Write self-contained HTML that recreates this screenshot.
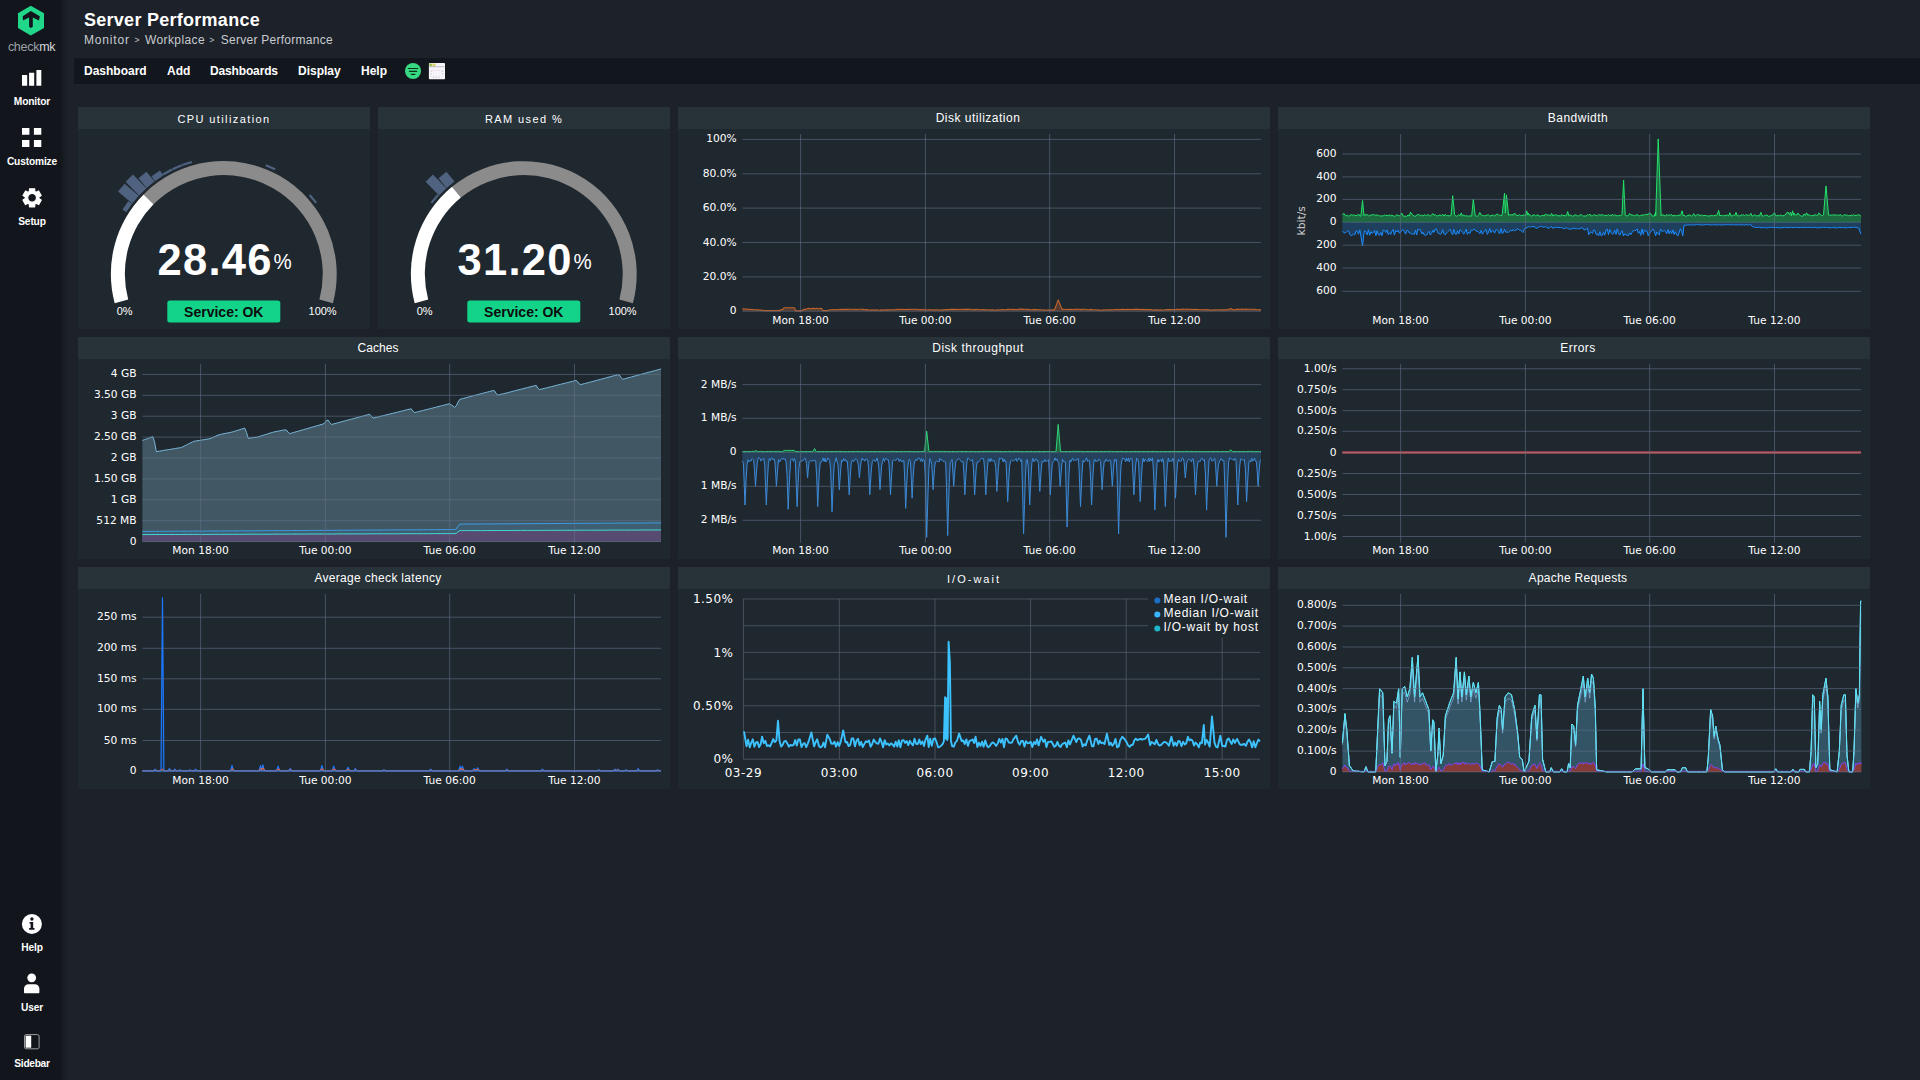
<!DOCTYPE html><html lang="en"><head><meta charset="utf-8"><title>Server Performance</title>
<style>
*{box-sizing:border-box}
html,body{margin:0;padding:0;width:1920px;height:1080px;overflow:hidden;background:#1d2129;font-family:"Liberation Sans", Arial, sans-serif;color:#fff}
#side{position:absolute;left:0;top:0;width:68px;height:1080px;background:linear-gradient(to right,#12161c 0,#12161c 60px,#1d2129 67.5px)}
.nav{position:absolute;left:0;width:64px;text-align:center;font-size:10.2px;font-weight:700;letter-spacing:-.15px;color:#fff}
.nav svg{position:absolute;left:0;top:0}
.nav span{position:absolute;left:0;width:64px;text-align:center}
#title{position:absolute;left:84px;top:9px;font-size:18px;font-weight:700;letter-spacing:.27px;white-space:nowrap;line-height:22px}
#bc{position:absolute;left:84px;top:33px;font-size:12px;color:#c8ccd0;white-space:nowrap;line-height:14px;height:14px;width:400px}
#bc span{position:absolute;top:0}
#bc .gt{font-size:8.5px;top:-.3px}
#menu{position:absolute;left:74px;top:58px;width:1846px;height:26px;background:#12171d}
#menu span{position:absolute;top:0;line-height:26px;font-size:12px;font-weight:700;white-space:nowrap}
.dash{position:absolute;background:#20282f}
.dt{position:absolute;left:0;top:0;width:100%;height:22px;line-height:22px;background:#273239;text-align:center;font-size:12px;color:#fff;letter-spacing:.5px;white-space:nowrap}
.dt.ls{letter-spacing:1.4px;line-height:24px;font-size:11px}
.cv{position:absolute;left:0;top:0}
</style></head><body>
<div id="side">
<svg style="position:absolute;left:0;top:0" width="64" height="60" viewBox="0 0 64 60">
<path d="M30.8 5.7L44 13.2V27.9L30.8 35.4L18 27.9V13.2Z" fill="#20d78a"/>
<path d="M30.8 11L39.8 16.3L39 20.6L32.8 17.4V26.7L30.8 27.9L29.1 26.7V17.4L23 20.6L22.7 16.3Z" fill="#12161c"/>
<text x="7.9" y="50.8" font-family='"Liberation Sans", Arial, sans-serif' font-size="12.5" fill="#9da1a6" letter-spacing="-.27">check<tspan fill="#d4d6d9">mk</tspan></text>
</svg>
<div class="nav" style="top:64px;height:50px"><svg width="64" height="30" viewBox="0 0 64 30"><path d="M22 11h5.2v10.8h-5.2zM29.1 8.8h5.1v13h-5.1zM36.4 6h4.9v15.8h-4.9z" fill="#fff"/></svg><span style="top:32px">Monitor</span></div>
<div class="nav" style="top:124px;height:50px"><svg width="64" height="30" viewBox="0 0 64 30"><path d="M22 4.1h7.4v6.7h-7.4zM33.9 4.1h7.4v6.7h-7.4zM22 16h7.4v7h-7.4zM33.9 16h7.4v7h-7.4z" fill="#fff"/></svg><span style="top:32px">Customize</span></div>
<div class="nav" style="top:184px;height:50px"><svg width="64" height="30" viewBox="0 0 64 30"><path d="M29.4 7.4L29.5 4.8L34.7 4.8L34.8 7.4L36.3 8.3L38.6 7L41.2 11.5L38.9 13L38.9 14.6L41.2 16.1L38.6 20.6L36.3 19.3L34.8 20.2L34.7 22.8L29.5 22.8L29.4 20.2L27.9 19.3L25.6 20.6L23 16.1L25.3 14.6L25.3 13L23 11.5L25.6 7L27.9 8.3ZM27.7 13.8a4.4 4.4 0 1 0 8.8 0a4.4 4.4 0 1 0 -8.8 0Z" fill="#fff" fill-rule="evenodd" stroke="#fff" stroke-width="1.2" stroke-linejoin="round"/></svg><span style="top:32px">Setup</span></div>
<div class="nav" style="top:910px;height:50px"><svg width="64" height="30" viewBox="0 0 64 30"><circle cx="31.9" cy="14" r="10" fill="#fff"/><circle cx="31.9" cy="9" r="1.7" fill="#12161c"/><path d="M29.6 12h3.6v6h1.3v1.8h-5.4v-1.8h1.5v-4.2h-1z" fill="#12161c"/></svg><span style="top:32px">Help</span></div>
<div class="nav" style="top:970px;height:50px"><svg width="64" height="30" viewBox="0 0 64 30"><circle cx="31.7" cy="7.8" r="4.4" fill="#fff"/><path d="M24 22.2v-3.4c0-2.6 2-4.6 4.6-4.6h6.2c2.6 0 4.6 2 4.6 4.6v3.4c0 .6-.5 1-1 1h-13.4c-.6 0-1-.4-1-1z" fill="#fff"/></svg><span style="top:32px">User</span></div>
<div class="nav" style="top:1028px;height:50px"><svg width="64" height="30" viewBox="0 0 64 30"><rect x="24.5" y="6.6" width="14.6" height="14.2" rx="1.6" fill="none" stroke="#9a9da2" stroke-width="1"/><rect x="25.6" y="7.7" width="5.6" height="12" fill="#fff"/></svg><span style="top:29.5px;letter-spacing:-.3px">Sidebar</span></div>
</div>
<div id="title">Server Performance</div>
<div id="bc"><span style="left:0;letter-spacing:.84px">Monitor</span><span class="gt" style="left:50.4px">&gt;</span><span style="left:61px;letter-spacing:.39px">Workplace</span><span class="gt" style="left:125.2px">&gt;</span><span style="left:136.8px;letter-spacing:.26px">Server Performance</span></div>
<div id="menu"><span style="left:10px">Dashboard</span><span style="left:93px">Add</span><span style="left:136px;letter-spacing:-.15px">Dashboards</span><span style="left:224px">Display</span><span style="left:287px">Help</span>
<svg style="position:absolute;left:330px;top:4px" width="44" height="18" viewBox="0 0 44 18"><circle cx="9" cy="9" r="8" fill="#38d982"/><path d="M4.4 6.5h9.4M5.5 9.3h7.2M7.3 12.4h3.6" stroke="#0a3318" stroke-width="1.15" stroke-linecap="round" fill="none"/><rect x="24.9" y="1" width="16.1" height="16.3" rx=".8" fill="#f6f3fb"/><rect x="25.4" y="1.6" width="2.4" height="2.6" fill="#9cba3c"/><rect x="28.4" y="1.6" width="3" height="2.6" fill="#d9d262"/><path d="M25.2 4.7h15.5" stroke="#9aa0a0" stroke-width=".6"/><path d="M27.2 8.6v5.6M38.4 8.6v5.6M29 15.2h8" stroke="#b9b6c6" stroke-width=".9" stroke-dasharray="1.2 1.5" fill="none"/><path d="M28.6 8.6h9" stroke="#e6cfe0" stroke-width=".9" stroke-dasharray="1.4 1.4" fill="none"/></svg></div>
<div class="dash" style="left:78px;top:107px;width:292px;height:222px">
<div class="dt ls">CPU utilization</div>
<svg class="cv" width="292" height="222" viewBox="0 0 292 222">
<rect x="140.7" y="47" width="10.2" height="4.6" fill="#4f6380" transform="rotate(-55.1 145.8 167.0)"/>
<rect x="140.7" y="33" width="10.2" height="18.6" fill="#4f6380" transform="rotate(-49.9 145.8 167.0)"/>
<rect x="140.7" y="32.4" width="10.2" height="19.2" fill="#4f6380" transform="rotate(-44.6 145.8 167.0)"/>
<rect x="140.7" y="38.9" width="10.2" height="12.7" fill="#4f6380" transform="rotate(-39.4 145.8 167.0)"/>
<rect x="140.7" y="45.6" width="10.2" height="6" fill="#4f6380" transform="rotate(-34.1 145.8 167.0)"/>
<rect x="140.7" y="49.4" width="10.2" height="2.2" fill="#4f6380" transform="rotate(-28.9 145.8 167.0)"/>
<rect x="140.7" y="49.4" width="10.2" height="2.2" fill="#4f6380" transform="rotate(-23.6 145.8 167.0)"/>
<rect x="140.7" y="49.5" width="10.2" height="2.1" fill="#4f6380" transform="rotate(-18.4 145.8 167.0)"/>
<rect x="140.7" y="49.4" width="10.2" height="2.2" fill="#4f6380" transform="rotate(23.6 145.8 167.0)"/>
<rect x="140.7" y="49.4" width="10.2" height="2.2" fill="#4f6380" transform="rotate(49.9 145.8 167.0)"/>
<path d="M65.6 87.4A113 113 0 0 1 254.9 196.2L241.4 192.6A99 99 0 0 0 75.5 97.3Z" fill="#8b8b8b"/>
<path d="M36.7 196.2A113 113 0 0 1 65.6 87.4L75.5 97.3A99 99 0 0 0 50.2 192.6Z" fill="#ffffff"/>
<text x="79.4" y="167.7" font-family='"Liberation Sans", Arial, sans-serif' font-weight="700" fill="#fff" font-size="43.5" letter-spacing="1.3">28.46</text>
<text x="195.4" y="161.8" font-family='"Liberation Sans", Arial, sans-serif' fill="#fff" font-size="22" transform="translate(195.4 0) scale(.93 1) translate(-195.4 0)">%</text>
<rect x="89.3" y="193.5" width="113" height="22" rx="2.5" fill="#13d389"/>
<text x="145.8" y="209.5" text-anchor="middle" font-family='"Liberation Sans", Arial, sans-serif' font-weight="700" font-size="14" fill="#0c0c0c">Service: OK</text>
<text x="46.6" y="207.8" text-anchor="middle" font-family='"Liberation Sans", Arial, sans-serif' font-size="11" fill="#fff">0%</text>
<text x="244.6" y="207.8" text-anchor="middle" font-family='"Liberation Sans", Arial, sans-serif' font-size="11" fill="#fff">100%</text>
</svg></div>
<div class="dash" style="left:378px;top:107px;width:292px;height:222px">
<div class="dt ls">RAM used %</div>
<svg class="cv" width="292" height="222" viewBox="0 0 292 222">
<rect x="140.7" y="49.4" width="10.2" height="2.2" fill="#4f6380" transform="rotate(-49.9 145.8 167.0)"/>
<rect x="140.7" y="32.4" width="10.2" height="19.2" fill="#4f6380" transform="rotate(-44.6 145.8 167.0)"/>
<rect x="140.7" y="38.9" width="10.2" height="12.7" fill="#4f6380" transform="rotate(-39.4 145.8 167.0)"/>
<path d="M74 79.8A113 113 0 0 1 254.9 196.2L241.4 192.6A99 99 0 0 0 82.9 90.6Z" fill="#8b8b8b"/>
<path d="M36.7 196.2A113 113 0 0 1 74 79.8L82.9 90.6A99 99 0 0 0 50.2 192.6Z" fill="#ffffff"/>
<text x="79.4" y="167.7" font-family='"Liberation Sans", Arial, sans-serif' font-weight="700" fill="#fff" font-size="43.5" letter-spacing="1.3">31.20</text>
<text x="195.4" y="161.8" font-family='"Liberation Sans", Arial, sans-serif' fill="#fff" font-size="22" transform="translate(195.4 0) scale(.93 1) translate(-195.4 0)">%</text>
<rect x="89.3" y="193.5" width="113" height="22" rx="2.5" fill="#13d389"/>
<text x="145.8" y="209.5" text-anchor="middle" font-family='"Liberation Sans", Arial, sans-serif' font-weight="700" font-size="14" fill="#0c0c0c">Service: OK</text>
<text x="46.6" y="207.8" text-anchor="middle" font-family='"Liberation Sans", Arial, sans-serif' font-size="11" fill="#fff">0%</text>
<text x="244.6" y="207.8" text-anchor="middle" font-family='"Liberation Sans", Arial, sans-serif' font-size="11" fill="#fff">100%</text>
</svg></div>
<div class="dash" style="left:678px;top:107px;width:592px;height:222px">
<div class="dt" style="padding-left:8px;letter-spacing:0.5px">Disk utilization</div>
<svg class="cv" width="592" height="222" viewBox="0 0 592 222">
<g transform="translate(0 0)">
<polygon points="64.4,204.2 64.4,201.8 65.7,201.9 67,202 68.3,202.1 69.6,202.2 70.9,202.3 72.2,202.4 73.5,202.5 74.8,202.6 76.1,202.7 77.4,202.8 78.7,202.8 80,202.9 81.3,203 82.6,203.1 83.9,203.2 85.2,203.4 86.5,203.7 87.8,203.5 89.1,203.6 90.4,203.6 91.7,203.7 93,203.6 94.3,203.7 95.6,203.6 96.9,203.7 98.2,203.5 99.5,203.7 100.8,203.4 102.1,203.6 103.4,202.5 104.7,202.5 106,200.8 107.3,200.8 108.6,200.8 109.9,200.8 111.2,200.8 112.5,200.8 113.8,200.8 115.1,200.8 116.4,200.8 117.7,203.9 119,203.9 120.3,203.9 121.6,203.9 122.9,203.9 124.2,203.9 125.5,202.4 126.8,202.3 128.1,202.4 129.4,201.5 130.7,201.3 132,201.6 133.3,201.8 134.6,201.4 135.9,201.4 137.2,201.7 138.5,201.2 139.8,201.5 141.1,201.7 142.4,201.2 143.7,201.5 145,203.6 146.3,203.6 147.6,203.6 148.9,203.6 150.2,203.6 151.5,202.7 152.8,202.7 154.1,202.7 155.4,202.6 156.7,202.7 158,202.6 159.3,202.7 160.6,202.8 161.9,202.3 163.2,202.4 164.5,202.6 165.8,202.4 167.1,202.4 168.4,202.4 169.7,202.4 171,202.3 172.3,202.2 173.6,202.2 174.9,202.3 176.2,202.5 177.5,202.4 178.8,202.5 180.1,202.3 181.4,202.2 182.7,202.3 184,202.3 185.3,202.4 186.6,202.7 187.9,202.5 189.2,202.6 190.5,202.9 191.8,203 193.1,203.1 194.4,202.7 195.7,203 197,203.1 198.3,202.9 199.6,203 200.9,203.2 202.2,203.1 203.5,202.9 204.8,203.1 206.1,203 207.4,202.8 208.7,202.9 210,202.9 211.3,202.8 212.6,203 213.9,202.7 215.2,202.7 216.5,202.7 217.8,202.7 219.1,202.3 220.4,202.4 221.7,202.5 223,202.3 224.3,202.2 225.6,202.6 226.9,202.5 228.2,202.5 229.5,202.2 230.8,202.5 232.1,202.2 233.4,202.2 234.7,202.3 236,202.5 237.3,202.2 238.6,202.3 239.9,202.5 241.2,202.7 242.5,202.5 243.8,202.7 245.1,202.6 246.4,202.8 247.7,202.7 249,203 250.3,203 251.6,202.6 252.9,202.7 254.2,203 255.5,202.8 256.8,203.1 258.1,202.7 259.4,202.8 260.7,203 262,203 263.3,203.1 264.6,202.7 265.9,203.1 267.2,202.6 268.5,202.5 269.8,202.6 271.1,202.8 272.4,202.4 273.7,202.3 275,202.4 276.3,202.4 277.6,202.5 278.9,202.4 280.2,202.5 281.5,202.2 282.8,202.3 284.1,202.4 285.4,202.5 286.7,202.2 288,202.4 289.3,202.3 290.6,202.4 291.9,202.2 293.2,202.2 294.5,202.7 295.8,202.6 297.1,202.6 298.4,202.3 299.7,202.5 301,202.8 302.3,202.9 303.6,202.7 304.9,202.6 306.2,202.6 307.5,203 308.8,202.7 310.1,202.8 311.4,203 312.7,202.7 314,203.1 315.3,202.8 316.6,203.2 317.9,203.1 319.2,202.7 320.5,203 321.8,202.7 323.1,202.7 324.4,202.6 325.7,202.7 327,202.7 328.3,202.7 329.6,202.3 330.9,202.4 332.2,202.2 333.5,202.2 334.8,202.6 336.1,202.3 337.4,202.5 338.7,202.5 340,202.5 341.3,202.1 342.6,202.1 343.9,202.1 345.2,202.4 346.5,202.3 347.8,202.2 349.1,202.5 350.4,202.4 351.7,202.6 353,202.7 354.3,202.7 355.6,202.4 356.9,202.6 358.2,202.5 359.5,202.8 360.8,202.9 362.1,202.7 363.4,202.7 364.7,203.2 366,202.8 367.3,203.2 368.6,203.2 369.9,202.8 371.2,203.2 372.5,203.1 373.8,202.7 375.1,202.9 376.4,203.1 380.2,192.9 384.2,202.6 385.5,202.3 386.8,202.3 388.1,202.5 389.4,202.5 390.7,202.4 392,202.5 393.3,202.2 394.6,202.5 395.9,202.5 397.2,202 398.5,202.4 399.8,202.2 401.1,202.3 402.4,202.4 403.7,202.6 405,202.2 406.3,202.2 407.6,202.2 408.9,202.7 410.2,202.7 411.5,202.6 412.8,202.4 414.1,202.7 415.4,202.7 416.7,202.7 418,203 419.3,202.9 420.6,203 421.9,203.1 423.2,203.2 424.5,203.1 425.8,202.7 427.1,203 428.4,202.9 429.7,202.8 431,202.7 432.3,202.9 433.6,202.9 434.9,202.9 436.2,202.8 437.5,202.5 438.8,202.4 440.1,202.7 441.4,202.6 442.7,202.5 444,202.4 445.3,202.4 446.6,202.5 447.9,202.6 449.2,202.4 450.5,202.5 451.8,202.3 453.1,202.5 454.4,202.5 455.7,202.2 457,202.4 458.3,202.2 459.6,202.4 460.9,202.2 462.2,202.6 463.5,202.5 464.8,202.4 466.1,202.8 467.4,202.4 468.7,202.8 470,202.6 471.3,202.5 472.6,202.6 473.9,202.9 475.2,203.1 476.5,202.9 477.8,202.7 479.1,203.1 480.4,202.8 481.7,203.1 483,202.7 484.3,203.2 485.6,203 486.9,202.7 488.2,202.7 489.5,202.6 490.8,202.6 492.1,202.6 493.4,202.6 494.7,202.8 496,202.6 497.3,202.7 498.6,202.4 499.9,202.4 501.2,202.5 502.5,202.6 503.8,202.1 505.1,202.1 506.4,202.3 507.7,202.3 509,202.1 510.3,202.3 511.6,202.3 512.9,202.4 514.2,202.5 515.5,202.6 516.8,202.3 518.1,202.5 519.4,202.4 520.7,202.8 522,202.7 523.3,202.8 524.6,202.9 525.9,202.8 527.2,202.6 528.5,202.9 529.8,202.9 531.1,202.8 532.4,203.1 533.6,203.2 534.9,202.9 536.2,203 537.5,202.9 538.8,203 540.1,202.8 541.4,202.8 542.7,203 544,202.9 545.3,202.8 546.6,202.9 547.9,202.8 549.2,202.7 550.5,202.4 552.8,201.5 554.4,202.4 555.7,202.7 557,202.6 558.3,202.4 559.6,202.1 560.9,202.5 562.2,202.2 563.5,202.1 564.8,202.4 566.1,202.2 567.4,202.1 568.7,202.4 570,202.2 571.3,202.2 572.6,202.3 573.9,202.3 575.2,202.3 576.5,202.3 577.8,202.5 579.1,202.8 580.4,202.8 581.7,202.9 583,202.7 583,204.2" fill="#7a4a32" fill-opacity="0.6"/><polyline points="64.4,201.8 65.7,201.9 67,202 68.3,202.1 69.6,202.2 70.9,202.3 72.2,202.4 73.5,202.5 74.8,202.6 76.1,202.7 77.4,202.8 78.7,202.8 80,202.9 81.3,203 82.6,203.1 83.9,203.2 85.2,203.4 86.5,203.7 87.8,203.5 89.1,203.6 90.4,203.6 91.7,203.7 93,203.6 94.3,203.7 95.6,203.6 96.9,203.7 98.2,203.5 99.5,203.7 100.8,203.4 102.1,203.6 103.4,202.5 104.7,202.5 106,200.8 107.3,200.8 108.6,200.8 109.9,200.8 111.2,200.8 112.5,200.8 113.8,200.8 115.1,200.8 116.4,200.8 117.7,203.9 119,203.9 120.3,203.9 121.6,203.9 122.9,203.9 124.2,203.9 125.5,202.4 126.8,202.3 128.1,202.4 129.4,201.5 130.7,201.3 132,201.6 133.3,201.8 134.6,201.4 135.9,201.4 137.2,201.7 138.5,201.2 139.8,201.5 141.1,201.7 142.4,201.2 143.7,201.5 145,203.6 146.3,203.6 147.6,203.6 148.9,203.6 150.2,203.6 151.5,202.7 152.8,202.7 154.1,202.7 155.4,202.6 156.7,202.7 158,202.6 159.3,202.7 160.6,202.8 161.9,202.3 163.2,202.4 164.5,202.6 165.8,202.4 167.1,202.4 168.4,202.4 169.7,202.4 171,202.3 172.3,202.2 173.6,202.2 174.9,202.3 176.2,202.5 177.5,202.4 178.8,202.5 180.1,202.3 181.4,202.2 182.7,202.3 184,202.3 185.3,202.4 186.6,202.7 187.9,202.5 189.2,202.6 190.5,202.9 191.8,203 193.1,203.1 194.4,202.7 195.7,203 197,203.1 198.3,202.9 199.6,203 200.9,203.2 202.2,203.1 203.5,202.9 204.8,203.1 206.1,203 207.4,202.8 208.7,202.9 210,202.9 211.3,202.8 212.6,203 213.9,202.7 215.2,202.7 216.5,202.7 217.8,202.7 219.1,202.3 220.4,202.4 221.7,202.5 223,202.3 224.3,202.2 225.6,202.6 226.9,202.5 228.2,202.5 229.5,202.2 230.8,202.5 232.1,202.2 233.4,202.2 234.7,202.3 236,202.5 237.3,202.2 238.6,202.3 239.9,202.5 241.2,202.7 242.5,202.5 243.8,202.7 245.1,202.6 246.4,202.8 247.7,202.7 249,203 250.3,203 251.6,202.6 252.9,202.7 254.2,203 255.5,202.8 256.8,203.1 258.1,202.7 259.4,202.8 260.7,203 262,203 263.3,203.1 264.6,202.7 265.9,203.1 267.2,202.6 268.5,202.5 269.8,202.6 271.1,202.8 272.4,202.4 273.7,202.3 275,202.4 276.3,202.4 277.6,202.5 278.9,202.4 280.2,202.5 281.5,202.2 282.8,202.3 284.1,202.4 285.4,202.5 286.7,202.2 288,202.4 289.3,202.3 290.6,202.4 291.9,202.2 293.2,202.2 294.5,202.7 295.8,202.6 297.1,202.6 298.4,202.3 299.7,202.5 301,202.8 302.3,202.9 303.6,202.7 304.9,202.6 306.2,202.6 307.5,203 308.8,202.7 310.1,202.8 311.4,203 312.7,202.7 314,203.1 315.3,202.8 316.6,203.2 317.9,203.1 319.2,202.7 320.5,203 321.8,202.7 323.1,202.7 324.4,202.6 325.7,202.7 327,202.7 328.3,202.7 329.6,202.3 330.9,202.4 332.2,202.2 333.5,202.2 334.8,202.6 336.1,202.3 337.4,202.5 338.7,202.5 340,202.5 341.3,202.1 342.6,202.1 343.9,202.1 345.2,202.4 346.5,202.3 347.8,202.2 349.1,202.5 350.4,202.4 351.7,202.6 353,202.7 354.3,202.7 355.6,202.4 356.9,202.6 358.2,202.5 359.5,202.8 360.8,202.9 362.1,202.7 363.4,202.7 364.7,203.2 366,202.8 367.3,203.2 368.6,203.2 369.9,202.8 371.2,203.2 372.5,203.1 373.8,202.7 375.1,202.9 376.4,203.1 380.2,192.9 384.2,202.6 385.5,202.3 386.8,202.3 388.1,202.5 389.4,202.5 390.7,202.4 392,202.5 393.3,202.2 394.6,202.5 395.9,202.5 397.2,202 398.5,202.4 399.8,202.2 401.1,202.3 402.4,202.4 403.7,202.6 405,202.2 406.3,202.2 407.6,202.2 408.9,202.7 410.2,202.7 411.5,202.6 412.8,202.4 414.1,202.7 415.4,202.7 416.7,202.7 418,203 419.3,202.9 420.6,203 421.9,203.1 423.2,203.2 424.5,203.1 425.8,202.7 427.1,203 428.4,202.9 429.7,202.8 431,202.7 432.3,202.9 433.6,202.9 434.9,202.9 436.2,202.8 437.5,202.5 438.8,202.4 440.1,202.7 441.4,202.6 442.7,202.5 444,202.4 445.3,202.4 446.6,202.5 447.9,202.6 449.2,202.4 450.5,202.5 451.8,202.3 453.1,202.5 454.4,202.5 455.7,202.2 457,202.4 458.3,202.2 459.6,202.4 460.9,202.2 462.2,202.6 463.5,202.5 464.8,202.4 466.1,202.8 467.4,202.4 468.7,202.8 470,202.6 471.3,202.5 472.6,202.6 473.9,202.9 475.2,203.1 476.5,202.9 477.8,202.7 479.1,203.1 480.4,202.8 481.7,203.1 483,202.7 484.3,203.2 485.6,203 486.9,202.7 488.2,202.7 489.5,202.6 490.8,202.6 492.1,202.6 493.4,202.6 494.7,202.8 496,202.6 497.3,202.7 498.6,202.4 499.9,202.4 501.2,202.5 502.5,202.6 503.8,202.1 505.1,202.1 506.4,202.3 507.7,202.3 509,202.1 510.3,202.3 511.6,202.3 512.9,202.4 514.2,202.5 515.5,202.6 516.8,202.3 518.1,202.5 519.4,202.4 520.7,202.8 522,202.7 523.3,202.8 524.6,202.9 525.9,202.8 527.2,202.6 528.5,202.9 529.8,202.9 531.1,202.8 532.4,203.1 533.6,203.2 534.9,202.9 536.2,203 537.5,202.9 538.8,203 540.1,202.8 541.4,202.8 542.7,203 544,202.9 545.3,202.8 546.6,202.9 547.9,202.8 549.2,202.7 550.5,202.4 552.8,201.5 554.4,202.4 555.7,202.7 557,202.6 558.3,202.4 559.6,202.1 560.9,202.5 562.2,202.2 563.5,202.1 564.8,202.4 566.1,202.2 567.4,202.1 568.7,202.4 570,202.2 571.3,202.2 572.6,202.3 573.9,202.3 575.2,202.3 576.5,202.3 577.8,202.5 579.1,202.8 580.4,202.8 581.7,202.9 583,202.7" fill="none" stroke="#c2632a" stroke-width="1.1" stroke-linejoin="round"/>
<path d="M122.6 27V205.8M247.4 27V205.8M371.7 27V205.8M496.5 27V205.8M64.4 32.4H583M64.4 66.8H583M64.4 101.1H583M64.4 135.5H583M64.4 169.9H583M64.4 204.2H583" stroke="#62728a" stroke-opacity=".58" stroke-width="1" fill="none"/></g>
<g font-family='"DejaVu Sans", "Liberation Sans", sans-serif' font-size="10.67" fill="#ffffff">
<text x="58.6" y="35.4" text-anchor="end">100%</text>
<text x="58.6" y="69.8" text-anchor="end">80.0%</text>
<text x="58.6" y="104.1" text-anchor="end">60.0%</text>
<text x="58.6" y="138.5" text-anchor="end">40.0%</text>
<text x="58.6" y="172.9" text-anchor="end">20.0%</text>
<text x="58.6" y="207.2" text-anchor="end">0</text>
<text x="122.6" y="217.1" text-anchor="middle">Mon 18:00</text>
<text x="247.4" y="217.1" text-anchor="middle">Tue 00:00</text>
<text x="371.7" y="217.1" text-anchor="middle">Tue 06:00</text>
<text x="496.5" y="217.1" text-anchor="middle">Tue 12:00</text>
</g></svg></div>
<div class="dash" style="left:1278px;top:107px;width:592px;height:222px">
<div class="dt" style="padding-left:8px;letter-spacing:0.5px">Bandwidth</div>
<svg class="cv" width="592" height="222" viewBox="0 0 592 222">
<g transform="translate(0 0)">
<polygon points="64.4,115.3 64.4,124 65.7,125.6 66.9,126 68.2,125.2 69.4,124.1 70.6,124.2 71.9,127.4 73.1,128.8 74.3,128.3 75.6,126.8 76.8,127.9 78.1,123.7 79.3,124.1 80.5,127.3 81.8,122.8 82.9,129.1 84.5,138.8 86,125.7 86.7,123.9 88,125.2 89.2,128 90.4,122.7 91.7,128.3 92.9,124.6 94.1,126.3 95.4,125.6 96.6,123.4 97.9,128.7 99.1,123.7 100.3,127.7 101.6,128.2 102.8,125.4 104,128.7 105.3,122.9 106.5,123.4 107.8,125.6 109,122.9 110.2,127.6 111.5,125.8 112.7,127.5 113.9,124.2 115.2,122.5 116.4,128.1 117.7,123.7 118.9,125 120.1,123.1 121.4,126.1 122.6,125.2 123.8,123.5 125.1,122.5 126.3,124.4 127.6,127.2 128.8,123.2 130,123.6 131.3,126.1 132.5,126.2 133.8,127.3 135,126.3 136.2,127.6 137.5,123.1 138.7,128 139.9,122.2 141.2,122.8 142.4,122.7 143.7,127 144.9,125.2 146.1,127.9 147.4,128.2 148.6,128.1 149.8,125.9 151.1,124.2 152.3,128.1 153.6,126.6 154.8,123.1 156,125.4 157.3,122 158.5,122 159.7,125.9 161,126.4 162.2,127.3 163.5,126.6 164.7,122.6 165.9,126.5 167.2,128 168.4,126.1 169.6,124.8 170.9,123.6 172.1,122.1 173.4,125.7 174.6,127.8 175.8,122.4 177.1,126.9 178.3,127.4 179.5,123.8 180.8,127 182,122.6 183.3,123.5 184.5,125.2 185.7,127.2 187,124.9 188.2,122.1 189.4,127.4 190.7,125.1 191.9,126.4 193.2,122.9 194.4,123.6 195.6,122 196.9,122.6 198.1,124.2 199.3,124 200.6,125.5 201.8,126.7 203.1,123.4 204.3,127.2 205.5,125.5 206.8,123.5 208,122.4 209.3,127.4 210.5,125.4 211.7,121.5 213,125.6 214.2,123.6 215.4,123.9 216.7,126.1 217.9,122.6 219.2,122.8 220.4,124.6 221.6,126.9 222.9,121.6 224.1,126.4 225.3,125.7 226.6,122.2 227.8,125.3 229.1,125 230.3,125.5 231.5,124.4 232.8,123 234,124.2 235.2,122.4 236.5,123.8 237.7,123.5 239,121.6 240.2,122.3 241.4,123.1 242.7,123.4 243.9,124.4 245.1,125.6 246.4,121.5 247.6,121.1 248.9,120.6 250.1,120.2 251.3,119.5 252.6,120.1 253.8,119.7 255,119.5 256.3,119.4 257.5,121.1 258.8,121.1 260,120.9 261.2,119.6 262.5,119.6 263.7,119.6 264.9,120 266.2,120.3 267.4,119.5 268.7,120.4 269.9,121 271.1,121.4 272.4,120.1 273.6,119.7 274.8,121.4 276.1,120.6 277.3,120.5 278.6,120.2 279.8,120.5 281,120.5 282.3,120.6 283.5,120.6 284.8,121.2 286,121.8 287.2,120.9 288.5,121.1 289.7,121.3 290.9,122.1 292.2,122 293.4,122.5 294.7,120.8 295.9,122.2 297.1,121.2 298.4,121.8 299.6,121.7 300.8,121.9 302.1,121.4 303.3,120.9 304.6,120.9 305.8,122.8 307,122.8 308.3,121.9 309.5,121.2 310.7,127.8 312,125.3 313.2,125.1 314.5,126.4 315.7,122.8 316.9,123.2 318.2,127.7 319.4,127.1 320.6,128.9 321.9,124.8 323.1,128.8 324.4,128.2 325.6,125.4 326.8,128.2 328.1,122.8 329.3,122.1 330.5,127.7 331.8,122.6 333,125.4 334.3,127.1 335.5,126.7 336.7,123.2 338,127.5 339.2,121.9 340.4,125.8 341.7,128.3 342.9,125.7 344.2,123.8 345.4,129 346.6,127 347.9,127.5 349.1,128.3 350.4,128.6 351.6,125.9 352.8,127.7 354.1,125.3 355.3,123.5 356.5,123.7 357.8,123.5 359,121.8 360.3,126.2 361.5,124.6 362.7,128.4 364,122 365.2,127.4 366.4,123 367.7,124 368.9,123.8 370.2,128.7 371.4,126.4 372.6,125.1 373.9,123 375.1,122 376.3,124.3 377.6,128.8 378.8,124.9 380.1,126.6 381.3,128.1 382.5,122 383.8,124 385,124.7 386.2,123.3 387.5,124.4 388.7,126.7 390,122.6 391.2,126.8 392.4,123.8 393.7,126.5 394.9,122.9 396.1,127.5 397.4,124.7 398.6,127.8 399.9,128.8 401.1,125.9 402.3,121.8 403.6,124.3 404.8,128.9 406,118.2 407.3,118.2 408.5,118.2 409.8,117.9 411,117.9 412.2,117.8 413.5,118 414.7,118 415.9,117.9 417.2,117.9 418.4,117.6 419.7,117.6 420.9,117.7 422.1,117.9 423.4,118 424.6,117.9 425.9,118 427.1,117.6 428.3,117.6 429.6,117.7 430.8,117.6 432,117.9 433.3,118 434.5,118 435.8,117.6 437,117.9 438.2,117.9 439.5,117.9 440.7,117.8 441.9,117.7 443.2,118 444.4,118 445.7,117.9 446.9,117.8 448.1,117.6 449.4,117.7 450.6,117.7 451.8,117.7 453.1,117.7 454.3,117.9 455.6,117.9 456.8,117.7 458,118 459.3,117.6 460.5,118 461.7,117.9 463,117.9 464.2,117.7 465.5,117.9 466.7,118 467.9,117.7 469.2,117.7 470.4,118 471.6,117.7 472.9,117.6 474.1,119.7 475.4,119.7 476.6,120.6 477.8,120.4 479.1,120.4 480.3,120.4 481.5,120.3 482.8,120.8 484,120.6 485.3,120.7 486.5,120.4 487.7,120.8 489,120.9 490.2,120.9 491.4,120.3 492.7,120.4 493.9,120.3 495.2,120.5 496.4,120.7 497.6,120.6 498.9,120.5 500.1,120.9 501.4,120.7 502.6,120.9 503.8,120.5 505.1,120.7 506.3,120.3 507.5,120.6 508.8,120.7 510,120.4 511.3,120.7 512.5,120.3 513.7,120.5 515,120.6 516.2,120.6 517.4,120.3 518.7,120.4 519.9,120.5 521.2,120.7 522.4,120.5 523.6,120.4 524.9,120.5 526.1,120.4 527.3,120.3 528.6,120.6 529.8,120.5 531.1,120.4 532.3,120.2 533.5,120.9 534.8,120.3 536,120.3 537.2,120.4 538.5,120.8 539.7,120.9 541,120.7 542.2,120.4 543.4,120.8 544.7,120.2 545.9,120.3 547.1,120.3 548.4,120.6 549.6,120.6 550.9,120.7 552.1,120.9 553.3,120.7 554.6,120.7 555.8,120.3 557,120.8 558.3,120.9 559.5,120.8 560.8,120.3 562,120.7 563.2,120.6 564.5,120.6 565.7,120.4 567,120.8 568.2,120.8 569.4,120.8 570.7,120.4 571.9,120.7 573.1,120.3 574.4,120.7 575.6,120.2 576.9,120.2 578.1,120.3 579.3,120.7 580.6,121 581.8,124 583,127.1 583,115.3" fill="#1d5690" fill-opacity="0.5"/><polyline points="64.4,124 65.7,125.6 66.9,126 68.2,125.2 69.4,124.1 70.6,124.2 71.9,127.4 73.1,128.8 74.3,128.3 75.6,126.8 76.8,127.9 78.1,123.7 79.3,124.1 80.5,127.3 81.8,122.8 82.9,129.1 84.5,138.8 86,125.7 86.7,123.9 88,125.2 89.2,128 90.4,122.7 91.7,128.3 92.9,124.6 94.1,126.3 95.4,125.6 96.6,123.4 97.9,128.7 99.1,123.7 100.3,127.7 101.6,128.2 102.8,125.4 104,128.7 105.3,122.9 106.5,123.4 107.8,125.6 109,122.9 110.2,127.6 111.5,125.8 112.7,127.5 113.9,124.2 115.2,122.5 116.4,128.1 117.7,123.7 118.9,125 120.1,123.1 121.4,126.1 122.6,125.2 123.8,123.5 125.1,122.5 126.3,124.4 127.6,127.2 128.8,123.2 130,123.6 131.3,126.1 132.5,126.2 133.8,127.3 135,126.3 136.2,127.6 137.5,123.1 138.7,128 139.9,122.2 141.2,122.8 142.4,122.7 143.7,127 144.9,125.2 146.1,127.9 147.4,128.2 148.6,128.1 149.8,125.9 151.1,124.2 152.3,128.1 153.6,126.6 154.8,123.1 156,125.4 157.3,122 158.5,122 159.7,125.9 161,126.4 162.2,127.3 163.5,126.6 164.7,122.6 165.9,126.5 167.2,128 168.4,126.1 169.6,124.8 170.9,123.6 172.1,122.1 173.4,125.7 174.6,127.8 175.8,122.4 177.1,126.9 178.3,127.4 179.5,123.8 180.8,127 182,122.6 183.3,123.5 184.5,125.2 185.7,127.2 187,124.9 188.2,122.1 189.4,127.4 190.7,125.1 191.9,126.4 193.2,122.9 194.4,123.6 195.6,122 196.9,122.6 198.1,124.2 199.3,124 200.6,125.5 201.8,126.7 203.1,123.4 204.3,127.2 205.5,125.5 206.8,123.5 208,122.4 209.3,127.4 210.5,125.4 211.7,121.5 213,125.6 214.2,123.6 215.4,123.9 216.7,126.1 217.9,122.6 219.2,122.8 220.4,124.6 221.6,126.9 222.9,121.6 224.1,126.4 225.3,125.7 226.6,122.2 227.8,125.3 229.1,125 230.3,125.5 231.5,124.4 232.8,123 234,124.2 235.2,122.4 236.5,123.8 237.7,123.5 239,121.6 240.2,122.3 241.4,123.1 242.7,123.4 243.9,124.4 245.1,125.6 246.4,121.5 247.6,121.1 248.9,120.6 250.1,120.2 251.3,119.5 252.6,120.1 253.8,119.7 255,119.5 256.3,119.4 257.5,121.1 258.8,121.1 260,120.9 261.2,119.6 262.5,119.6 263.7,119.6 264.9,120 266.2,120.3 267.4,119.5 268.7,120.4 269.9,121 271.1,121.4 272.4,120.1 273.6,119.7 274.8,121.4 276.1,120.6 277.3,120.5 278.6,120.2 279.8,120.5 281,120.5 282.3,120.6 283.5,120.6 284.8,121.2 286,121.8 287.2,120.9 288.5,121.1 289.7,121.3 290.9,122.1 292.2,122 293.4,122.5 294.7,120.8 295.9,122.2 297.1,121.2 298.4,121.8 299.6,121.7 300.8,121.9 302.1,121.4 303.3,120.9 304.6,120.9 305.8,122.8 307,122.8 308.3,121.9 309.5,121.2 310.7,127.8 312,125.3 313.2,125.1 314.5,126.4 315.7,122.8 316.9,123.2 318.2,127.7 319.4,127.1 320.6,128.9 321.9,124.8 323.1,128.8 324.4,128.2 325.6,125.4 326.8,128.2 328.1,122.8 329.3,122.1 330.5,127.7 331.8,122.6 333,125.4 334.3,127.1 335.5,126.7 336.7,123.2 338,127.5 339.2,121.9 340.4,125.8 341.7,128.3 342.9,125.7 344.2,123.8 345.4,129 346.6,127 347.9,127.5 349.1,128.3 350.4,128.6 351.6,125.9 352.8,127.7 354.1,125.3 355.3,123.5 356.5,123.7 357.8,123.5 359,121.8 360.3,126.2 361.5,124.6 362.7,128.4 364,122 365.2,127.4 366.4,123 367.7,124 368.9,123.8 370.2,128.7 371.4,126.4 372.6,125.1 373.9,123 375.1,122 376.3,124.3 377.6,128.8 378.8,124.9 380.1,126.6 381.3,128.1 382.5,122 383.8,124 385,124.7 386.2,123.3 387.5,124.4 388.7,126.7 390,122.6 391.2,126.8 392.4,123.8 393.7,126.5 394.9,122.9 396.1,127.5 397.4,124.7 398.6,127.8 399.9,128.8 401.1,125.9 402.3,121.8 403.6,124.3 404.8,128.9 406,118.2 407.3,118.2 408.5,118.2 409.8,117.9 411,117.9 412.2,117.8 413.5,118 414.7,118 415.9,117.9 417.2,117.9 418.4,117.6 419.7,117.6 420.9,117.7 422.1,117.9 423.4,118 424.6,117.9 425.9,118 427.1,117.6 428.3,117.6 429.6,117.7 430.8,117.6 432,117.9 433.3,118 434.5,118 435.8,117.6 437,117.9 438.2,117.9 439.5,117.9 440.7,117.8 441.9,117.7 443.2,118 444.4,118 445.7,117.9 446.9,117.8 448.1,117.6 449.4,117.7 450.6,117.7 451.8,117.7 453.1,117.7 454.3,117.9 455.6,117.9 456.8,117.7 458,118 459.3,117.6 460.5,118 461.7,117.9 463,117.9 464.2,117.7 465.5,117.9 466.7,118 467.9,117.7 469.2,117.7 470.4,118 471.6,117.7 472.9,117.6 474.1,119.7 475.4,119.7 476.6,120.6 477.8,120.4 479.1,120.4 480.3,120.4 481.5,120.3 482.8,120.8 484,120.6 485.3,120.7 486.5,120.4 487.7,120.8 489,120.9 490.2,120.9 491.4,120.3 492.7,120.4 493.9,120.3 495.2,120.5 496.4,120.7 497.6,120.6 498.9,120.5 500.1,120.9 501.4,120.7 502.6,120.9 503.8,120.5 505.1,120.7 506.3,120.3 507.5,120.6 508.8,120.7 510,120.4 511.3,120.7 512.5,120.3 513.7,120.5 515,120.6 516.2,120.6 517.4,120.3 518.7,120.4 519.9,120.5 521.2,120.7 522.4,120.5 523.6,120.4 524.9,120.5 526.1,120.4 527.3,120.3 528.6,120.6 529.8,120.5 531.1,120.4 532.3,120.2 533.5,120.9 534.8,120.3 536,120.3 537.2,120.4 538.5,120.8 539.7,120.9 541,120.7 542.2,120.4 543.4,120.8 544.7,120.2 545.9,120.3 547.1,120.3 548.4,120.6 549.6,120.6 550.9,120.7 552.1,120.9 553.3,120.7 554.6,120.7 555.8,120.3 557,120.8 558.3,120.9 559.5,120.8 560.8,120.3 562,120.7 563.2,120.6 564.5,120.6 565.7,120.4 567,120.8 568.2,120.8 569.4,120.8 570.7,120.4 571.9,120.7 573.1,120.3 574.4,120.7 575.6,120.2 576.9,120.2 578.1,120.3 579.3,120.7 580.6,121 581.8,124 583,127.1" fill="none" stroke="#1a8cff" stroke-width="1" stroke-linejoin="round"/><polygon points="64.4,115.3 64.4,107.6 65.7,106.2 66.9,108 68.2,108.8 69.4,108.2 70.6,109.1 71.9,108.6 73.1,107.5 74.3,108.3 75.6,107.6 76.8,108.5 78.1,108.6 79.3,108.4 80.5,107 81.8,109.1 82.9,109.1 84.5,93.5 86,108.7 86.7,107.7 88,107.9 89.2,107.5 90.4,109.1 91.7,108 92.9,108.4 94.1,107.7 95.4,107.8 96.6,107.7 97.9,108.5 99.1,107.7 100.3,108.5 101.6,108.8 102.8,109 104,108.9 105.3,108.8 106.5,108.1 107.8,108.4 109,108.3 110.2,109 111.5,107.6 112.7,109.2 113.9,108 115.2,109 116.4,109.2 117.7,108.8 118.9,107.7 120.1,108.4 121.4,108.9 122.6,107.7 123.8,106.1 125.1,109 126.3,109.2 127.6,109.3 128.8,109.3 130,107.9 131.3,109 132.5,105.2 133.8,107.1 135,108.2 136.2,109.1 137.5,109.3 138.7,107.9 139.9,107.7 141.2,107.8 142.4,108.5 143.7,108.1 144.9,109.2 146.1,107.7 147.4,108.3 148.6,108.4 149.8,107.6 151.1,108.2 152.3,109.3 153.6,107.9 154.8,106.5 156,108.4 157.3,107.6 158.5,108.9 159.7,108.9 161,108.2 162.2,108 163.5,108.6 164.7,107.3 165.9,109.1 167.2,107.3 168.4,108.9 169.6,108.4 170.9,108.8 172.1,109 173.1,108 174.7,88.7 176.6,107.8 177.1,108.4 178.3,109.2 179.5,108.7 180.8,107.7 182,108.8 183.3,105.9 184.5,109.2 185.7,107.8 187,109.3 188.2,108.6 189.4,109 190.7,109.2 191.9,108.7 193.2,109.2 193.7,109.2 195.3,92.4 197.2,108.6 198.1,109.1 199.3,109.2 200.6,108.2 201.8,105.4 203.1,107.9 204.3,108.4 205.5,108.5 206.8,108.9 208,108.5 209.3,107.9 210.5,107.8 211.7,108.9 213,108.9 214.2,108.1 215.4,108.3 216.7,109.2 217.9,107.5 219.2,107.2 220.4,107.7 221.6,108.2 222.9,108.8 224.1,108.1 224.2,107.3 226.5,86.1 227.4,106.1 228.4,87.8 230.6,108.5 231.5,107.7 232.8,108.1 234,107.5 235.2,108.3 236.5,106 237.7,107.7 239,108.4 240.2,108.6 241.4,107.6 242.7,108.5 243.9,108.7 245.1,108.1 246.4,107.8 247.4,108.8 248.7,103.8 250,108.3 250.1,106 251.3,108 252.6,108.2 253.8,109.3 255,108 256.3,107.7 257.5,109.2 258.8,107.9 260,108 261.2,109 262.5,109.1 263.7,108.6 264.9,108.3 266.2,109 267.4,107 268.7,107.8 269.9,108 271.1,108.1 272.4,108.9 273.6,106.4 274.8,109 276.1,107.9 277.3,108.1 278.6,107.8 279.8,109 281,108.5 282.3,109.3 283.5,107.6 284.8,108.4 286,108.5 287.2,108.8 288.5,108.5 289.7,104.6 290.9,108.8 292.2,107.9 293.4,108.6 294.7,109.2 295.9,108.6 297.1,107.8 298.4,108.2 299.6,108.9 300.8,108.9 302.1,107.6 303.3,107.8 304.6,108.7 305.8,109.2 307,109 308.3,108.8 309.5,107.7 310.7,108.2 312,107.1 313.2,109 314.5,108.7 315.7,107.9 316.9,107.9 318.2,108.6 319.4,108.7 320.6,107.6 321.9,108.1 323.1,108 324.4,107.8 325.6,108 326.8,108.8 328.1,108.1 329.3,108.6 330.5,107.6 331.8,108.5 333,109 334.3,107.2 335.5,108.7 336.7,107.7 338,108.5 339.2,108.9 340.4,108.6 341.7,108.2 342.9,108.8 344,107.6 345.6,73.2 347.2,108.2 347.9,108.7 349.1,108.9 350.4,108.7 351.6,106.5 352.8,107.8 354.1,107.9 355.3,108.4 356.5,108.7 357.8,108.2 359,107.5 360.3,108.5 361.5,108.8 362.7,108.3 364,108.4 365.2,107.5 366.4,108.5 367.7,107 368.9,107.5 370.2,107.6 371.4,105.8 372.6,106.5 373.9,108.7 375.1,109.1 376.3,109.2 377.6,105 377.7,108.9 380.2,31.9 383.1,109 383.8,108.4 385,107.7 386.2,108.4 387.5,109.1 388.7,107.3 390,108.7 391.2,107.8 392.4,108 393.7,107.7 394.9,109.2 396.1,108.2 397.4,108.7 398.6,108.6 399.9,108.6 401.1,107.9 402.3,108.5 402.8,107.8 404.1,103.8 405.3,109 406,108.1 407.3,109.3 408.5,109 409.8,108.3 411,108.2 412.2,108.1 413.5,109.3 414.7,107.8 415.9,106.7 417.2,109.1 418.4,108.3 419.7,107.6 420.9,107.7 422.1,108.8 423.4,107.8 424.6,108.8 425.9,108.3 427.1,108.6 428.3,108.5 429.6,109.1 430.8,108.8 432,109 433.3,108.4 434.5,108.4 435.8,109 437,108.1 438.2,108.5 439.3,107.9 440.6,103.3 441.9,108.9 441.9,108.5 443.2,108.5 444.4,108.8 445.7,108.2 446.9,108.9 448.1,108.1 449.4,108.1 450.6,109 451.8,105.7 453.1,109 454.3,108.8 455.6,108 456.8,108.5 458,105.3 459.3,109.1 460.5,108.2 461.7,109.2 463,107.7 464.2,108.4 465.5,107.7 466.7,108.8 467.9,107.6 469.2,108.1 470.4,108.3 471.6,108.4 472.9,106.3 474.1,109.1 475.4,108.6 476.6,107.6 477.8,108.5 479.1,109 480.3,108.4 481.5,109.2 482.8,105.3 484,108.6 485.3,109.2 486.5,108.4 487.7,108.3 489,108 490.2,109.3 491.4,109.1 492.7,108.8 493.9,108.2 495.2,107.6 496.4,105.6 497.6,108.5 498.9,108.8 500.1,108.5 501.4,108.7 502.6,107.7 503.8,109.1 505.1,108.7 506.3,108.2 507.5,107.7 508.8,105.6 510,105.1 511.3,107.5 512.5,105.4 513.4,108.9 514.6,103.8 515.9,108.3 516.2,106.5 517.4,107.6 518.7,108.1 519.9,106 521.2,107.9 522.4,108.6 523.6,109.1 524.9,109.2 526.1,106.9 527.3,108.4 528.6,105.8 529.8,108.4 531.1,107.7 532.3,108.6 533.5,108.7 534.8,108.3 536,108.5 537.2,107.6 538.5,108.2 539.7,108.3 541,105.9 542.2,107.6 543.4,108.3 544.7,108.5 545.5,107.8 548,78.9 550.5,108 550.9,107.8 552.1,108.3 553.3,108.1 554.6,108 555.8,107.8 557,108.1 558.3,108.4 559.5,107.6 560.8,108.6 562,107.7 563.2,108.1 564.5,109.1 565.7,108.2 567,107.6 568.2,108.6 569.4,107.9 570.7,108.7 571.9,108.7 573.1,108.1 574.4,108.6 575.6,107.5 576.9,108.6 578.1,108.3 579.3,108.2 580.6,107.7 581.8,108.1 583,109.3 583,115.3" fill="#1f8548" fill-opacity="0.7"/><polyline points="64.4,107.6 65.7,106.2 66.9,108 68.2,108.8 69.4,108.2 70.6,109.1 71.9,108.6 73.1,107.5 74.3,108.3 75.6,107.6 76.8,108.5 78.1,108.6 79.3,108.4 80.5,107 81.8,109.1 82.9,109.1 84.5,93.5 86,108.7 86.7,107.7 88,107.9 89.2,107.5 90.4,109.1 91.7,108 92.9,108.4 94.1,107.7 95.4,107.8 96.6,107.7 97.9,108.5 99.1,107.7 100.3,108.5 101.6,108.8 102.8,109 104,108.9 105.3,108.8 106.5,108.1 107.8,108.4 109,108.3 110.2,109 111.5,107.6 112.7,109.2 113.9,108 115.2,109 116.4,109.2 117.7,108.8 118.9,107.7 120.1,108.4 121.4,108.9 122.6,107.7 123.8,106.1 125.1,109 126.3,109.2 127.6,109.3 128.8,109.3 130,107.9 131.3,109 132.5,105.2 133.8,107.1 135,108.2 136.2,109.1 137.5,109.3 138.7,107.9 139.9,107.7 141.2,107.8 142.4,108.5 143.7,108.1 144.9,109.2 146.1,107.7 147.4,108.3 148.6,108.4 149.8,107.6 151.1,108.2 152.3,109.3 153.6,107.9 154.8,106.5 156,108.4 157.3,107.6 158.5,108.9 159.7,108.9 161,108.2 162.2,108 163.5,108.6 164.7,107.3 165.9,109.1 167.2,107.3 168.4,108.9 169.6,108.4 170.9,108.8 172.1,109 173.1,108 174.7,88.7 176.6,107.8 177.1,108.4 178.3,109.2 179.5,108.7 180.8,107.7 182,108.8 183.3,105.9 184.5,109.2 185.7,107.8 187,109.3 188.2,108.6 189.4,109 190.7,109.2 191.9,108.7 193.2,109.2 193.7,109.2 195.3,92.4 197.2,108.6 198.1,109.1 199.3,109.2 200.6,108.2 201.8,105.4 203.1,107.9 204.3,108.4 205.5,108.5 206.8,108.9 208,108.5 209.3,107.9 210.5,107.8 211.7,108.9 213,108.9 214.2,108.1 215.4,108.3 216.7,109.2 217.9,107.5 219.2,107.2 220.4,107.7 221.6,108.2 222.9,108.8 224.1,108.1 224.2,107.3 226.5,86.1 227.4,106.1 228.4,87.8 230.6,108.5 231.5,107.7 232.8,108.1 234,107.5 235.2,108.3 236.5,106 237.7,107.7 239,108.4 240.2,108.6 241.4,107.6 242.7,108.5 243.9,108.7 245.1,108.1 246.4,107.8 247.4,108.8 248.7,103.8 250,108.3 250.1,106 251.3,108 252.6,108.2 253.8,109.3 255,108 256.3,107.7 257.5,109.2 258.8,107.9 260,108 261.2,109 262.5,109.1 263.7,108.6 264.9,108.3 266.2,109 267.4,107 268.7,107.8 269.9,108 271.1,108.1 272.4,108.9 273.6,106.4 274.8,109 276.1,107.9 277.3,108.1 278.6,107.8 279.8,109 281,108.5 282.3,109.3 283.5,107.6 284.8,108.4 286,108.5 287.2,108.8 288.5,108.5 289.7,104.6 290.9,108.8 292.2,107.9 293.4,108.6 294.7,109.2 295.9,108.6 297.1,107.8 298.4,108.2 299.6,108.9 300.8,108.9 302.1,107.6 303.3,107.8 304.6,108.7 305.8,109.2 307,109 308.3,108.8 309.5,107.7 310.7,108.2 312,107.1 313.2,109 314.5,108.7 315.7,107.9 316.9,107.9 318.2,108.6 319.4,108.7 320.6,107.6 321.9,108.1 323.1,108 324.4,107.8 325.6,108 326.8,108.8 328.1,108.1 329.3,108.6 330.5,107.6 331.8,108.5 333,109 334.3,107.2 335.5,108.7 336.7,107.7 338,108.5 339.2,108.9 340.4,108.6 341.7,108.2 342.9,108.8 344,107.6 345.6,73.2 347.2,108.2 347.9,108.7 349.1,108.9 350.4,108.7 351.6,106.5 352.8,107.8 354.1,107.9 355.3,108.4 356.5,108.7 357.8,108.2 359,107.5 360.3,108.5 361.5,108.8 362.7,108.3 364,108.4 365.2,107.5 366.4,108.5 367.7,107 368.9,107.5 370.2,107.6 371.4,105.8 372.6,106.5 373.9,108.7 375.1,109.1 376.3,109.2 377.6,105 377.7,108.9 380.2,31.9 383.1,109 383.8,108.4 385,107.7 386.2,108.4 387.5,109.1 388.7,107.3 390,108.7 391.2,107.8 392.4,108 393.7,107.7 394.9,109.2 396.1,108.2 397.4,108.7 398.6,108.6 399.9,108.6 401.1,107.9 402.3,108.5 402.8,107.8 404.1,103.8 405.3,109 406,108.1 407.3,109.3 408.5,109 409.8,108.3 411,108.2 412.2,108.1 413.5,109.3 414.7,107.8 415.9,106.7 417.2,109.1 418.4,108.3 419.7,107.6 420.9,107.7 422.1,108.8 423.4,107.8 424.6,108.8 425.9,108.3 427.1,108.6 428.3,108.5 429.6,109.1 430.8,108.8 432,109 433.3,108.4 434.5,108.4 435.8,109 437,108.1 438.2,108.5 439.3,107.9 440.6,103.3 441.9,108.9 441.9,108.5 443.2,108.5 444.4,108.8 445.7,108.2 446.9,108.9 448.1,108.1 449.4,108.1 450.6,109 451.8,105.7 453.1,109 454.3,108.8 455.6,108 456.8,108.5 458,105.3 459.3,109.1 460.5,108.2 461.7,109.2 463,107.7 464.2,108.4 465.5,107.7 466.7,108.8 467.9,107.6 469.2,108.1 470.4,108.3 471.6,108.4 472.9,106.3 474.1,109.1 475.4,108.6 476.6,107.6 477.8,108.5 479.1,109 480.3,108.4 481.5,109.2 482.8,105.3 484,108.6 485.3,109.2 486.5,108.4 487.7,108.3 489,108 490.2,109.3 491.4,109.1 492.7,108.8 493.9,108.2 495.2,107.6 496.4,105.6 497.6,108.5 498.9,108.8 500.1,108.5 501.4,108.7 502.6,107.7 503.8,109.1 505.1,108.7 506.3,108.2 507.5,107.7 508.8,105.6 510,105.1 511.3,107.5 512.5,105.4 513.4,108.9 514.6,103.8 515.9,108.3 516.2,106.5 517.4,107.6 518.7,108.1 519.9,106 521.2,107.9 522.4,108.6 523.6,109.1 524.9,109.2 526.1,106.9 527.3,108.4 528.6,105.8 529.8,108.4 531.1,107.7 532.3,108.6 533.5,108.7 534.8,108.3 536,108.5 537.2,107.6 538.5,108.2 539.7,108.3 541,105.9 542.2,107.6 543.4,108.3 544.7,108.5 545.5,107.8 548,78.9 550.5,108 550.9,107.8 552.1,108.3 553.3,108.1 554.6,108 555.8,107.8 557,108.1 558.3,108.4 559.5,107.6 560.8,108.6 562,107.7 563.2,108.1 564.5,109.1 565.7,108.2 567,107.6 568.2,108.6 569.4,107.9 570.7,108.7 571.9,108.7 573.1,108.1 574.4,108.6 575.6,107.5 576.9,108.6 578.1,108.3 579.3,108.2 580.6,107.7 581.8,108.1 583,109.3" fill="none" stroke="#22e36a" stroke-width="1" stroke-linejoin="round"/>
<path d="M122.6 27V205.8M247.4 27V205.8M371.7 27V205.8M496.5 27V205.8M64.4 47H583M64.4 69.9H583M64.4 92.4H583M64.4 115.3H583M64.4 138.2H583M64.4 161H583M64.4 184.3H583" stroke="#62728a" stroke-opacity=".58" stroke-width="1" fill="none"/></g>
<g font-family='"DejaVu Sans", "Liberation Sans", sans-serif' font-size="10.67" fill="#ffffff">
<text x="58.6" y="50" text-anchor="end">600</text>
<text x="58.6" y="72.9" text-anchor="end">400</text>
<text x="58.6" y="95.4" text-anchor="end">200</text>
<text x="58.6" y="118.3" text-anchor="end">0</text>
<text x="58.6" y="141.2" text-anchor="end">200</text>
<text x="58.6" y="164" text-anchor="end">400</text>
<text x="58.6" y="187.3" text-anchor="end">600</text>
<text x="122.6" y="217.1" text-anchor="middle">Mon 18:00</text>
<text x="247.4" y="217.1" text-anchor="middle">Tue 00:00</text>
<text x="371.7" y="217.1" text-anchor="middle">Tue 06:00</text>
<text x="496.5" y="217.1" text-anchor="middle">Tue 12:00</text>
<text transform="translate(26.9,113.8) rotate(-90)" text-anchor="middle" fill="#d0d0d0">kbit/s</text>
</g></svg></div>
<div class="dash" style="left:78px;top:337px;width:592px;height:222px">
<div class="dt" style="padding-left:8px;letter-spacing:0.05px">Caches</div>
<svg class="cv" width="592" height="222" viewBox="0 0 592 222">
<g transform="translate(0 0)">
<polygon points="64.4,204.6 64.4,103.4 66.1,102.8 67.9,102.2 69.6,101.6 71.3,100.9 73.1,100.3 74.8,99.7 76.5,104.7 78.3,114.6 80,114.4 81.7,114.1 83.5,113.8 85.2,113.5 86.9,113.2 88.7,112.9 90.4,112.7 92.2,112.4 93.9,112.1 95.6,111.8 97.4,111.5 99.1,111.2 100.8,110.9 102.6,110.7 104.3,110 106,109.2 107.8,108.3 109.5,107.4 111.2,106.6 113,105.7 114.7,104.9 116.4,104.2 118.2,103.9 119.9,103.6 121.6,103.4 123.4,103.1 125.1,102.8 126.8,102.6 128.6,102.3 130.3,102 132,101.7 133.8,100.9 135.5,100.1 137.2,99.4 139,98.6 140.7,97.9 142.5,97.4 144.2,97 145.9,96.7 147.7,96.3 149.4,96 151.1,95.7 152.9,95.3 154.6,94.9 156.3,94.4 158.1,93.8 159.8,93.3 161.5,92.7 163.3,92.2 165,91.6 166.7,91.1 168.5,95.4 170.2,101.3 171.9,101.1 173.7,100.9 175.4,100.6 177.1,100.4 178.9,100.2 180.6,99.7 182.3,99.2 184.1,98.6 185.8,98.1 187.5,97.5 189.3,97 191,96.4 192.7,95.9 194.5,95.4 196.2,94.9 198,94.6 199.7,94.2 201.4,93.9 203.2,93.5 204.9,93.2 206.6,92.9 208.4,93 210.1,95.3 211.8,96.6 213.6,96.1 215.3,95.6 217,95.1 218.8,94.6 220.5,94.1 222.2,93.6 224,93.1 225.7,92.6 227.4,92.1 229.2,91.6 230.9,91.1 232.6,90.6 234.4,90.1 236.1,89.6 237.8,89.1 239.6,88.6 241.3,88.1 243,87.6 244.8,87.1 246.5,86.2 248.3,83.7 250,83 251.7,85.5 253.5,87.5 255.2,87 256.9,86.6 258.7,86.1 260.4,85.6 262.1,85.2 263.9,84.7 265.6,84.2 267.3,83.8 269.1,83.3 270.8,82.8 272.5,82.4 274.3,81.9 276,81.5 277.7,81 279.5,80.5 281.2,80.1 282.9,79.6 284.7,79.1 286.4,78.7 288.1,78.2 289.9,77.7 291.6,77.3 293.3,79.2 295.1,81.1 296.8,80.7 298.6,80.3 300.3,79.9 302,79.4 303.8,79 305.5,78.6 307.2,78.2 309,77.7 310.7,77.3 312.4,76.9 314.2,76.4 315.9,76 317.6,75.6 319.4,75.2 321.1,74.7 322.8,74.3 324.6,73.9 326.3,73.5 328,73 329.8,72.6 331.5,72.2 333.2,71.8 335,74.4 336.7,75.6 338.4,75.2 340.2,74.7 341.9,74.3 343.6,73.8 345.4,73.4 347.1,72.9 348.8,72.5 350.6,72.1 352.3,71.6 354.1,71.2 355.8,70.7 357.5,70.3 359.3,69.8 361,69.4 362.7,69 364.5,68.5 366.2,68.1 367.9,67.6 369.7,67.2 371.4,66.7 373.1,67.7 374.9,69 376.6,70.3 378.3,68.8 380.1,65 381.8,62.3 383.5,61.9 385.3,61.4 387,61 388.7,60.5 390.5,60 392.2,59.6 393.9,59.1 395.7,58.7 397.4,58.2 399.1,57.8 400.9,57.3 402.6,56.8 404.4,56.4 406.1,55.9 407.8,55.5 409.6,55 411.3,54.6 413,54.1 414.8,53.6 416.5,53.8 418.2,56.6 420,58.1 421.7,57.7 423.4,57.2 425.2,56.8 426.9,56.4 428.6,55.9 430.4,55.5 432.1,55 433.8,54.6 435.6,54.1 437.3,53.7 439,53.2 440.8,52.8 442.5,52.3 444.2,51.9 446,51.5 447.7,51 449.4,50.6 451.2,50.1 452.9,49.7 454.7,49.2 456.4,48.8 458.1,48.3 459.9,51.3 461.6,52.6 463.3,52.2 465.1,51.7 466.8,51.3 468.5,50.9 470.3,50.4 472,50 473.7,49.6 475.5,49.1 477.2,48.7 478.9,48.2 480.7,47.8 482.4,47.4 484.1,46.9 485.9,46.5 487.6,46.1 489.3,45.6 491.1,45.2 492.8,44.8 494.5,44.3 496.3,43.9 498,43.4 499.7,44.7 501.5,47.2 503.2,47.5 504.9,47 506.7,46.6 508.4,46.1 510.2,45.7 511.9,45.2 513.6,44.7 515.4,44.3 517.1,43.8 518.8,43.3 520.6,42.9 522.3,42.4 524,41.9 525.8,41.5 527.5,41 529.2,40.5 531,40.1 532.7,39.6 534.4,39.2 536.2,38.7 537.9,38.2 539.6,37.8 541.4,38 543.1,40.7 544.8,42.2 546.6,41.8 548.3,41.3 550,40.8 551.8,40.4 553.5,39.9 555.2,39.4 557,39 558.7,38.5 560.5,38 562.2,37.6 563.9,37.1 565.7,36.6 567.4,36.2 569.1,35.7 570.9,35.2 572.6,34.8 574.3,34.3 576.1,33.8 577.8,33.4 579.5,32.9 581.3,32.4 583,32 583,204.6" fill="#4e6b78" fill-opacity="0.72"/><polyline points="64.4,103.4 66.1,102.8 67.9,102.2 69.6,101.6 71.3,100.9 73.1,100.3 74.8,99.7 76.5,104.7 78.3,114.6 80,114.4 81.7,114.1 83.5,113.8 85.2,113.5 86.9,113.2 88.7,112.9 90.4,112.7 92.2,112.4 93.9,112.1 95.6,111.8 97.4,111.5 99.1,111.2 100.8,110.9 102.6,110.7 104.3,110 106,109.2 107.8,108.3 109.5,107.4 111.2,106.6 113,105.7 114.7,104.9 116.4,104.2 118.2,103.9 119.9,103.6 121.6,103.4 123.4,103.1 125.1,102.8 126.8,102.6 128.6,102.3 130.3,102 132,101.7 133.8,100.9 135.5,100.1 137.2,99.4 139,98.6 140.7,97.9 142.5,97.4 144.2,97 145.9,96.7 147.7,96.3 149.4,96 151.1,95.7 152.9,95.3 154.6,94.9 156.3,94.4 158.1,93.8 159.8,93.3 161.5,92.7 163.3,92.2 165,91.6 166.7,91.1 168.5,95.4 170.2,101.3 171.9,101.1 173.7,100.9 175.4,100.6 177.1,100.4 178.9,100.2 180.6,99.7 182.3,99.2 184.1,98.6 185.8,98.1 187.5,97.5 189.3,97 191,96.4 192.7,95.9 194.5,95.4 196.2,94.9 198,94.6 199.7,94.2 201.4,93.9 203.2,93.5 204.9,93.2 206.6,92.9 208.4,93 210.1,95.3 211.8,96.6 213.6,96.1 215.3,95.6 217,95.1 218.8,94.6 220.5,94.1 222.2,93.6 224,93.1 225.7,92.6 227.4,92.1 229.2,91.6 230.9,91.1 232.6,90.6 234.4,90.1 236.1,89.6 237.8,89.1 239.6,88.6 241.3,88.1 243,87.6 244.8,87.1 246.5,86.2 248.3,83.7 250,83 251.7,85.5 253.5,87.5 255.2,87 256.9,86.6 258.7,86.1 260.4,85.6 262.1,85.2 263.9,84.7 265.6,84.2 267.3,83.8 269.1,83.3 270.8,82.8 272.5,82.4 274.3,81.9 276,81.5 277.7,81 279.5,80.5 281.2,80.1 282.9,79.6 284.7,79.1 286.4,78.7 288.1,78.2 289.9,77.7 291.6,77.3 293.3,79.2 295.1,81.1 296.8,80.7 298.6,80.3 300.3,79.9 302,79.4 303.8,79 305.5,78.6 307.2,78.2 309,77.7 310.7,77.3 312.4,76.9 314.2,76.4 315.9,76 317.6,75.6 319.4,75.2 321.1,74.7 322.8,74.3 324.6,73.9 326.3,73.5 328,73 329.8,72.6 331.5,72.2 333.2,71.8 335,74.4 336.7,75.6 338.4,75.2 340.2,74.7 341.9,74.3 343.6,73.8 345.4,73.4 347.1,72.9 348.8,72.5 350.6,72.1 352.3,71.6 354.1,71.2 355.8,70.7 357.5,70.3 359.3,69.8 361,69.4 362.7,69 364.5,68.5 366.2,68.1 367.9,67.6 369.7,67.2 371.4,66.7 373.1,67.7 374.9,69 376.6,70.3 378.3,68.8 380.1,65 381.8,62.3 383.5,61.9 385.3,61.4 387,61 388.7,60.5 390.5,60 392.2,59.6 393.9,59.1 395.7,58.7 397.4,58.2 399.1,57.8 400.9,57.3 402.6,56.8 404.4,56.4 406.1,55.9 407.8,55.5 409.6,55 411.3,54.6 413,54.1 414.8,53.6 416.5,53.8 418.2,56.6 420,58.1 421.7,57.7 423.4,57.2 425.2,56.8 426.9,56.4 428.6,55.9 430.4,55.5 432.1,55 433.8,54.6 435.6,54.1 437.3,53.7 439,53.2 440.8,52.8 442.5,52.3 444.2,51.9 446,51.5 447.7,51 449.4,50.6 451.2,50.1 452.9,49.7 454.7,49.2 456.4,48.8 458.1,48.3 459.9,51.3 461.6,52.6 463.3,52.2 465.1,51.7 466.8,51.3 468.5,50.9 470.3,50.4 472,50 473.7,49.6 475.5,49.1 477.2,48.7 478.9,48.2 480.7,47.8 482.4,47.4 484.1,46.9 485.9,46.5 487.6,46.1 489.3,45.6 491.1,45.2 492.8,44.8 494.5,44.3 496.3,43.9 498,43.4 499.7,44.7 501.5,47.2 503.2,47.5 504.9,47 506.7,46.6 508.4,46.1 510.2,45.7 511.9,45.2 513.6,44.7 515.4,44.3 517.1,43.8 518.8,43.3 520.6,42.9 522.3,42.4 524,41.9 525.8,41.5 527.5,41 529.2,40.5 531,40.1 532.7,39.6 534.4,39.2 536.2,38.7 537.9,38.2 539.6,37.8 541.4,38 543.1,40.7 544.8,42.2 546.6,41.8 548.3,41.3 550,40.8 551.8,40.4 553.5,39.9 555.2,39.4 557,39 558.7,38.5 560.5,38 562.2,37.6 563.9,37.1 565.7,36.6 567.4,36.2 569.1,35.7 570.9,35.2 572.6,34.8 574.3,34.3 576.1,33.8 577.8,33.4 579.5,32.9 581.3,32.4 583,32" fill="none" stroke="#7ab8dc" stroke-width="1" stroke-linejoin="round"/><polygon points="64.4,204.6 64.4,194.4 66.1,194.4 67.9,194.4 69.6,194.4 71.3,194.4 73.1,194.4 74.8,194.4 76.5,194.4 78.3,194.4 80,194.3 81.7,194.3 83.5,194.3 85.2,194.3 86.9,194.3 88.7,194.3 90.4,194.3 92.2,194.3 93.9,194.3 95.6,194.3 97.4,194.2 99.1,194.2 100.8,194.2 102.6,194.2 104.3,194.2 106,194.2 107.8,194.2 109.5,194.2 111.2,194.2 113,194.1 114.7,194.1 116.4,194.1 118.2,194.1 119.9,194.1 121.6,194.1 123.4,194.1 125.1,194.1 126.8,194.1 128.6,194.1 130.3,194 132,194 133.8,194 135.5,194 137.2,194 139,194 140.7,194 142.5,194 144.2,194 145.9,193.9 147.7,193.9 149.4,193.9 151.1,193.9 152.9,193.9 154.6,193.9 156.3,193.9 158.1,193.9 159.8,193.9 161.5,193.9 163.3,193.8 165,193.8 166.7,193.8 168.5,193.8 170.2,193.8 171.9,193.8 173.7,193.8 175.4,193.8 177.1,193.8 178.9,193.8 180.6,193.7 182.3,193.7 184.1,193.7 185.8,193.7 187.5,193.7 189.3,193.7 191,193.7 192.7,193.7 194.5,193.7 196.2,193.6 198,193.6 199.7,193.6 201.4,193.6 203.2,193.6 204.9,193.6 206.6,193.6 208.4,193.6 210.1,193.6 211.8,193.6 213.6,193.5 215.3,193.5 217,193.5 218.8,193.5 220.5,193.5 222.2,193.5 224,193.5 225.7,193.5 227.4,193.5 229.2,193.4 230.9,193.4 232.6,193.4 234.4,193.4 236.1,193.4 237.8,193.4 239.6,193.4 241.3,193.4 243,193.4 244.8,193.4 246.5,193.3 248.3,193.3 250,193.3 251.7,193.3 253.5,193.3 255.2,193.3 256.9,193.3 258.7,193.3 260.4,193.3 262.1,193.2 263.9,193.2 265.6,193.2 267.3,193.2 269.1,193.2 270.8,193.2 272.5,193.2 274.3,193.2 276,193.2 277.7,193.2 279.5,193.1 281.2,193.1 282.9,193.1 284.7,193.1 286.4,193.1 288.1,193.1 289.9,193.1 291.6,193.1 293.3,193.1 295.1,193 296.8,193 298.6,193 300.3,193 302,193 303.8,193 305.5,193 307.2,193 309,193 310.7,193 312.4,192.9 314.2,192.9 315.9,192.9 317.6,192.9 319.4,192.9 321.1,192.9 322.8,192.9 324.6,192.9 326.3,192.9 328,192.8 329.8,192.8 331.5,192.8 333.2,192.8 335,192.8 336.7,192.8 338.4,192.8 340.2,192.8 341.9,192.8 343.6,192.8 345.4,192.7 347.1,192.7 348.8,192.7 350.6,192.7 352.3,192.7 354.1,192.7 355.8,192.7 357.5,192.7 359.3,192.7 361,192.6 362.7,192.6 364.5,192.6 366.2,192.6 367.9,192.6 369.7,192.6 371.4,192.6 373.1,192.6 374.9,192.6 376.6,192.6 378.3,192 380.1,189 381.8,187.1 383.5,187.1 385.3,187.1 387,187.1 388.7,187 390.5,187 392.2,187 393.9,187 395.7,187 397.4,187 399.1,187 400.9,187 402.6,187 404.4,187 406.1,186.9 407.8,186.9 409.6,186.9 411.3,186.9 413,186.9 414.8,186.9 416.5,186.9 418.2,186.9 420,186.9 421.7,186.8 423.4,186.8 425.2,186.8 426.9,186.8 428.6,186.8 430.4,186.8 432.1,186.8 433.8,186.8 435.6,186.8 437.3,186.8 439,186.7 440.8,186.7 442.5,186.7 444.2,186.7 446,186.7 447.7,186.7 449.4,186.7 451.2,186.7 452.9,186.7 454.7,186.6 456.4,186.6 458.1,186.6 459.9,186.6 461.6,186.6 463.3,186.6 465.1,186.6 466.8,186.6 468.5,186.6 470.3,186.6 472,186.5 473.7,186.5 475.5,186.5 477.2,186.5 478.9,186.5 480.7,186.5 482.4,186.5 484.1,186.5 485.9,186.5 487.6,186.5 489.3,186.4 491.1,186.4 492.8,186.4 494.5,186.4 496.3,186.4 498,186.4 499.7,186.4 501.5,186.4 503.2,186.4 504.9,186.3 506.7,186.3 508.4,186.3 510.2,186.3 511.9,186.3 513.6,186.3 515.4,186.3 517.1,186.3 518.8,186.3 520.6,186.3 522.3,186.2 524,186.2 525.8,186.2 527.5,186.2 529.2,186.2 531,186.2 532.7,186.2 534.4,186.2 536.2,186.2 537.9,186.1 539.6,186.1 541.4,186.1 543.1,186.1 544.8,186.1 546.6,186.1 548.3,186.1 550,186.1 551.8,186.1 553.5,186.1 555.2,186 557,186 558.7,186 560.5,186 562.2,186 563.9,186 565.7,186 567.4,186 569.1,186 570.9,185.9 572.6,185.9 574.3,185.9 576.1,185.9 577.8,185.9 579.5,185.9 581.3,185.9 583,185.9 583,204.6" fill="#3f6480" fill-opacity="0.5"/><polyline points="64.4,194.4 66.1,194.4 67.9,194.4 69.6,194.4 71.3,194.4 73.1,194.4 74.8,194.4 76.5,194.4 78.3,194.4 80,194.3 81.7,194.3 83.5,194.3 85.2,194.3 86.9,194.3 88.7,194.3 90.4,194.3 92.2,194.3 93.9,194.3 95.6,194.3 97.4,194.2 99.1,194.2 100.8,194.2 102.6,194.2 104.3,194.2 106,194.2 107.8,194.2 109.5,194.2 111.2,194.2 113,194.1 114.7,194.1 116.4,194.1 118.2,194.1 119.9,194.1 121.6,194.1 123.4,194.1 125.1,194.1 126.8,194.1 128.6,194.1 130.3,194 132,194 133.8,194 135.5,194 137.2,194 139,194 140.7,194 142.5,194 144.2,194 145.9,193.9 147.7,193.9 149.4,193.9 151.1,193.9 152.9,193.9 154.6,193.9 156.3,193.9 158.1,193.9 159.8,193.9 161.5,193.9 163.3,193.8 165,193.8 166.7,193.8 168.5,193.8 170.2,193.8 171.9,193.8 173.7,193.8 175.4,193.8 177.1,193.8 178.9,193.8 180.6,193.7 182.3,193.7 184.1,193.7 185.8,193.7 187.5,193.7 189.3,193.7 191,193.7 192.7,193.7 194.5,193.7 196.2,193.6 198,193.6 199.7,193.6 201.4,193.6 203.2,193.6 204.9,193.6 206.6,193.6 208.4,193.6 210.1,193.6 211.8,193.6 213.6,193.5 215.3,193.5 217,193.5 218.8,193.5 220.5,193.5 222.2,193.5 224,193.5 225.7,193.5 227.4,193.5 229.2,193.4 230.9,193.4 232.6,193.4 234.4,193.4 236.1,193.4 237.8,193.4 239.6,193.4 241.3,193.4 243,193.4 244.8,193.4 246.5,193.3 248.3,193.3 250,193.3 251.7,193.3 253.5,193.3 255.2,193.3 256.9,193.3 258.7,193.3 260.4,193.3 262.1,193.2 263.9,193.2 265.6,193.2 267.3,193.2 269.1,193.2 270.8,193.2 272.5,193.2 274.3,193.2 276,193.2 277.7,193.2 279.5,193.1 281.2,193.1 282.9,193.1 284.7,193.1 286.4,193.1 288.1,193.1 289.9,193.1 291.6,193.1 293.3,193.1 295.1,193 296.8,193 298.6,193 300.3,193 302,193 303.8,193 305.5,193 307.2,193 309,193 310.7,193 312.4,192.9 314.2,192.9 315.9,192.9 317.6,192.9 319.4,192.9 321.1,192.9 322.8,192.9 324.6,192.9 326.3,192.9 328,192.8 329.8,192.8 331.5,192.8 333.2,192.8 335,192.8 336.7,192.8 338.4,192.8 340.2,192.8 341.9,192.8 343.6,192.8 345.4,192.7 347.1,192.7 348.8,192.7 350.6,192.7 352.3,192.7 354.1,192.7 355.8,192.7 357.5,192.7 359.3,192.7 361,192.6 362.7,192.6 364.5,192.6 366.2,192.6 367.9,192.6 369.7,192.6 371.4,192.6 373.1,192.6 374.9,192.6 376.6,192.6 378.3,192 380.1,189 381.8,187.1 383.5,187.1 385.3,187.1 387,187.1 388.7,187 390.5,187 392.2,187 393.9,187 395.7,187 397.4,187 399.1,187 400.9,187 402.6,187 404.4,187 406.1,186.9 407.8,186.9 409.6,186.9 411.3,186.9 413,186.9 414.8,186.9 416.5,186.9 418.2,186.9 420,186.9 421.7,186.8 423.4,186.8 425.2,186.8 426.9,186.8 428.6,186.8 430.4,186.8 432.1,186.8 433.8,186.8 435.6,186.8 437.3,186.8 439,186.7 440.8,186.7 442.5,186.7 444.2,186.7 446,186.7 447.7,186.7 449.4,186.7 451.2,186.7 452.9,186.7 454.7,186.6 456.4,186.6 458.1,186.6 459.9,186.6 461.6,186.6 463.3,186.6 465.1,186.6 466.8,186.6 468.5,186.6 470.3,186.6 472,186.5 473.7,186.5 475.5,186.5 477.2,186.5 478.9,186.5 480.7,186.5 482.4,186.5 484.1,186.5 485.9,186.5 487.6,186.5 489.3,186.4 491.1,186.4 492.8,186.4 494.5,186.4 496.3,186.4 498,186.4 499.7,186.4 501.5,186.4 503.2,186.4 504.9,186.3 506.7,186.3 508.4,186.3 510.2,186.3 511.9,186.3 513.6,186.3 515.4,186.3 517.1,186.3 518.8,186.3 520.6,186.3 522.3,186.2 524,186.2 525.8,186.2 527.5,186.2 529.2,186.2 531,186.2 532.7,186.2 534.4,186.2 536.2,186.2 537.9,186.1 539.6,186.1 541.4,186.1 543.1,186.1 544.8,186.1 546.6,186.1 548.3,186.1 550,186.1 551.8,186.1 553.5,186.1 555.2,186 557,186 558.7,186 560.5,186 562.2,186 563.9,186 565.7,186 567.4,186 569.1,186 570.9,185.9 572.6,185.9 574.3,185.9 576.1,185.9 577.8,185.9 579.5,185.9 581.3,185.9 583,185.9" fill="none" stroke="#3b9fe6" stroke-width="1" stroke-linejoin="round"/><polygon points="64.4,204.6 64.4,197.6 66.1,197.6 67.9,197.6 69.6,197.6 71.3,197.6 73.1,197.5 74.8,197.5 76.5,197.5 78.3,197.5 80,197.5 81.7,197.5 83.5,197.5 85.2,197.5 86.9,197.5 88.7,197.5 90.4,197.5 92.2,197.5 93.9,197.5 95.6,197.5 97.4,197.5 99.1,197.5 100.8,197.5 102.6,197.5 104.3,197.4 106,197.4 107.8,197.4 109.5,197.4 111.2,197.4 113,197.4 114.7,197.4 116.4,197.4 118.2,197.4 119.9,197.4 121.6,197.4 123.4,197.4 125.1,197.4 126.8,197.4 128.6,197.4 130.3,197.4 132,197.4 133.8,197.4 135.5,197.3 137.2,197.3 139,197.3 140.7,197.3 142.5,197.3 144.2,197.3 145.9,197.3 147.7,197.3 149.4,197.3 151.1,197.3 152.9,197.3 154.6,197.3 156.3,197.3 158.1,197.3 159.8,197.3 161.5,197.3 163.3,197.3 165,197.3 166.7,197.2 168.5,197.2 170.2,197.2 171.9,197.2 173.7,197.2 175.4,197.2 177.1,197.2 178.9,197.2 180.6,197.2 182.3,197.2 184.1,197.2 185.8,197.2 187.5,197.2 189.3,197.2 191,197.2 192.7,197.2 194.5,197.2 196.2,197.2 198,197.1 199.7,197.1 201.4,197.1 203.2,197.1 204.9,197.1 206.6,197.1 208.4,197.1 210.1,197.1 211.8,197.1 213.6,197.1 215.3,197.1 217,197.1 218.8,197.1 220.5,197.1 222.2,197.1 224,197.1 225.7,197.1 227.4,197.1 229.2,197 230.9,197 232.6,197 234.4,197 236.1,197 237.8,197 239.6,197 241.3,197 243,197 244.8,197 246.5,197 248.3,197 250,197 251.7,197 253.5,197 255.2,197 256.9,197 258.7,197 260.4,196.9 262.1,196.9 263.9,196.9 265.6,196.9 267.3,196.9 269.1,196.9 270.8,196.9 272.5,196.9 274.3,196.9 276,196.9 277.7,196.9 279.5,196.9 281.2,196.9 282.9,196.9 284.7,196.9 286.4,196.9 288.1,196.9 289.9,196.9 291.6,196.8 293.3,196.8 295.1,196.8 296.8,196.8 298.6,196.8 300.3,196.8 302,196.8 303.8,196.8 305.5,196.8 307.2,196.8 309,196.8 310.7,196.8 312.4,196.8 314.2,196.8 315.9,196.8 317.6,196.8 319.4,196.8 321.1,196.7 322.8,196.7 324.6,196.7 326.3,196.7 328,196.7 329.8,196.7 331.5,196.7 333.2,196.7 335,196.7 336.7,196.7 338.4,196.7 340.2,196.7 341.9,196.7 343.6,196.7 345.4,196.7 347.1,196.7 348.8,196.7 350.6,196.7 352.3,196.6 354.1,196.6 355.8,196.6 357.5,196.6 359.3,196.6 361,196.6 362.7,196.6 364.5,196.6 366.2,196.6 367.9,196.6 369.7,196.6 371.4,196.6 373.1,196.6 374.9,196.6 376.6,196.6 378.3,196.3 380.1,194.7 381.8,193.6 383.5,193.6 385.3,193.6 387,193.6 388.7,193.6 390.5,193.6 392.2,193.6 393.9,193.6 395.7,193.6 397.4,193.6 399.1,193.6 400.9,193.6 402.6,193.6 404.4,193.6 406.1,193.5 407.8,193.5 409.6,193.5 411.3,193.5 413,193.5 414.8,193.5 416.5,193.5 418.2,193.5 420,193.5 421.7,193.5 423.4,193.5 425.2,193.5 426.9,193.5 428.6,193.5 430.4,193.5 432.1,193.5 433.8,193.5 435.6,193.5 437.3,193.4 439,193.4 440.8,193.4 442.5,193.4 444.2,193.4 446,193.4 447.7,193.4 449.4,193.4 451.2,193.4 452.9,193.4 454.7,193.4 456.4,193.4 458.1,193.4 459.9,193.4 461.6,193.4 463.3,193.4 465.1,193.4 466.8,193.4 468.5,193.3 470.3,193.3 472,193.3 473.7,193.3 475.5,193.3 477.2,193.3 478.9,193.3 480.7,193.3 482.4,193.3 484.1,193.3 485.9,193.3 487.6,193.3 489.3,193.3 491.1,193.3 492.8,193.3 494.5,193.3 496.3,193.3 498,193.3 499.7,193.2 501.5,193.2 503.2,193.2 504.9,193.2 506.7,193.2 508.4,193.2 510.2,193.2 511.9,193.2 513.6,193.2 515.4,193.2 517.1,193.2 518.8,193.2 520.6,193.2 522.3,193.2 524,193.2 525.8,193.2 527.5,193.2 529.2,193.2 531,193.1 532.7,193.1 534.4,193.1 536.2,193.1 537.9,193.1 539.6,193.1 541.4,193.1 543.1,193.1 544.8,193.1 546.6,193.1 548.3,193.1 550,193.1 551.8,193.1 553.5,193.1 555.2,193.1 557,193.1 558.7,193.1 560.5,193.1 562.2,193 563.9,193 565.7,193 567.4,193 569.1,193 570.9,193 572.6,193 574.3,193 576.1,193 577.8,193 579.5,193 581.3,193 583,193 583,204.6" fill="#5a4a72" fill-opacity="0.95"/><polyline points="64.4,197.6 66.1,197.6 67.9,197.6 69.6,197.6 71.3,197.6 73.1,197.5 74.8,197.5 76.5,197.5 78.3,197.5 80,197.5 81.7,197.5 83.5,197.5 85.2,197.5 86.9,197.5 88.7,197.5 90.4,197.5 92.2,197.5 93.9,197.5 95.6,197.5 97.4,197.5 99.1,197.5 100.8,197.5 102.6,197.5 104.3,197.4 106,197.4 107.8,197.4 109.5,197.4 111.2,197.4 113,197.4 114.7,197.4 116.4,197.4 118.2,197.4 119.9,197.4 121.6,197.4 123.4,197.4 125.1,197.4 126.8,197.4 128.6,197.4 130.3,197.4 132,197.4 133.8,197.4 135.5,197.3 137.2,197.3 139,197.3 140.7,197.3 142.5,197.3 144.2,197.3 145.9,197.3 147.7,197.3 149.4,197.3 151.1,197.3 152.9,197.3 154.6,197.3 156.3,197.3 158.1,197.3 159.8,197.3 161.5,197.3 163.3,197.3 165,197.3 166.7,197.2 168.5,197.2 170.2,197.2 171.9,197.2 173.7,197.2 175.4,197.2 177.1,197.2 178.9,197.2 180.6,197.2 182.3,197.2 184.1,197.2 185.8,197.2 187.5,197.2 189.3,197.2 191,197.2 192.7,197.2 194.5,197.2 196.2,197.2 198,197.1 199.7,197.1 201.4,197.1 203.2,197.1 204.9,197.1 206.6,197.1 208.4,197.1 210.1,197.1 211.8,197.1 213.6,197.1 215.3,197.1 217,197.1 218.8,197.1 220.5,197.1 222.2,197.1 224,197.1 225.7,197.1 227.4,197.1 229.2,197 230.9,197 232.6,197 234.4,197 236.1,197 237.8,197 239.6,197 241.3,197 243,197 244.8,197 246.5,197 248.3,197 250,197 251.7,197 253.5,197 255.2,197 256.9,197 258.7,197 260.4,196.9 262.1,196.9 263.9,196.9 265.6,196.9 267.3,196.9 269.1,196.9 270.8,196.9 272.5,196.9 274.3,196.9 276,196.9 277.7,196.9 279.5,196.9 281.2,196.9 282.9,196.9 284.7,196.9 286.4,196.9 288.1,196.9 289.9,196.9 291.6,196.8 293.3,196.8 295.1,196.8 296.8,196.8 298.6,196.8 300.3,196.8 302,196.8 303.8,196.8 305.5,196.8 307.2,196.8 309,196.8 310.7,196.8 312.4,196.8 314.2,196.8 315.9,196.8 317.6,196.8 319.4,196.8 321.1,196.7 322.8,196.7 324.6,196.7 326.3,196.7 328,196.7 329.8,196.7 331.5,196.7 333.2,196.7 335,196.7 336.7,196.7 338.4,196.7 340.2,196.7 341.9,196.7 343.6,196.7 345.4,196.7 347.1,196.7 348.8,196.7 350.6,196.7 352.3,196.6 354.1,196.6 355.8,196.6 357.5,196.6 359.3,196.6 361,196.6 362.7,196.6 364.5,196.6 366.2,196.6 367.9,196.6 369.7,196.6 371.4,196.6 373.1,196.6 374.9,196.6 376.6,196.6 378.3,196.3 380.1,194.7 381.8,193.6 383.5,193.6 385.3,193.6 387,193.6 388.7,193.6 390.5,193.6 392.2,193.6 393.9,193.6 395.7,193.6 397.4,193.6 399.1,193.6 400.9,193.6 402.6,193.6 404.4,193.6 406.1,193.5 407.8,193.5 409.6,193.5 411.3,193.5 413,193.5 414.8,193.5 416.5,193.5 418.2,193.5 420,193.5 421.7,193.5 423.4,193.5 425.2,193.5 426.9,193.5 428.6,193.5 430.4,193.5 432.1,193.5 433.8,193.5 435.6,193.5 437.3,193.4 439,193.4 440.8,193.4 442.5,193.4 444.2,193.4 446,193.4 447.7,193.4 449.4,193.4 451.2,193.4 452.9,193.4 454.7,193.4 456.4,193.4 458.1,193.4 459.9,193.4 461.6,193.4 463.3,193.4 465.1,193.4 466.8,193.4 468.5,193.3 470.3,193.3 472,193.3 473.7,193.3 475.5,193.3 477.2,193.3 478.9,193.3 480.7,193.3 482.4,193.3 484.1,193.3 485.9,193.3 487.6,193.3 489.3,193.3 491.1,193.3 492.8,193.3 494.5,193.3 496.3,193.3 498,193.3 499.7,193.2 501.5,193.2 503.2,193.2 504.9,193.2 506.7,193.2 508.4,193.2 510.2,193.2 511.9,193.2 513.6,193.2 515.4,193.2 517.1,193.2 518.8,193.2 520.6,193.2 522.3,193.2 524,193.2 525.8,193.2 527.5,193.2 529.2,193.2 531,193.1 532.7,193.1 534.4,193.1 536.2,193.1 537.9,193.1 539.6,193.1 541.4,193.1 543.1,193.1 544.8,193.1 546.6,193.1 548.3,193.1 550,193.1 551.8,193.1 553.5,193.1 555.2,193.1 557,193.1 558.7,193.1 560.5,193.1 562.2,193 563.9,193 565.7,193 567.4,193 569.1,193 570.9,193 572.6,193 574.3,193 576.1,193 577.8,193 579.5,193 581.3,193 583,193" fill="none" stroke="#3fe0d8" stroke-width="1" stroke-linejoin="round"/>
<path d="M122.6 27V205.8M247.4 27V205.8M371.7 27V205.8M496.5 27V205.8M64.4 37.4H583M64.4 58.3H583M64.4 79.2H583M64.4 100.1H583M64.4 121H583M64.4 141.9H583M64.4 162.8H583M64.4 183.7H583M64.4 204.6H583" stroke="#62728a" stroke-opacity=".58" stroke-width="1" fill="none"/></g>
<g font-family='"DejaVu Sans", "Liberation Sans", sans-serif' font-size="10.67" fill="#ffffff">
<text x="58.6" y="40.4" text-anchor="end">4 GB</text>
<text x="58.6" y="61.3" text-anchor="end">3.50 GB</text>
<text x="58.6" y="82.2" text-anchor="end">3 GB</text>
<text x="58.6" y="103.1" text-anchor="end">2.50 GB</text>
<text x="58.6" y="124" text-anchor="end">2 GB</text>
<text x="58.6" y="144.9" text-anchor="end">1.50 GB</text>
<text x="58.6" y="165.8" text-anchor="end">1 GB</text>
<text x="58.6" y="186.7" text-anchor="end">512 MB</text>
<text x="58.6" y="207.6" text-anchor="end">0</text>
<text x="122.6" y="217.1" text-anchor="middle">Mon 18:00</text>
<text x="247.4" y="217.1" text-anchor="middle">Tue 00:00</text>
<text x="371.7" y="217.1" text-anchor="middle">Tue 06:00</text>
<text x="496.5" y="217.1" text-anchor="middle">Tue 12:00</text>
</g></svg></div>
<div class="dash" style="left:678px;top:337px;width:592px;height:222px">
<div class="dt" style="padding-left:8px;letter-spacing:0.5px">Disk throughput</div>
<svg class="cv" width="592" height="222" viewBox="0 0 592 222">
<g transform="translate(0 0)">
<polygon points="64.4,115.3 64.4,124 65.4,126.5 66.3,149.1 67,168 68.1,142.8 69.1,127.5 70,122.6 70.9,124.9 71.9,123.5 72.8,124.4 73.7,122 74.6,121.6 75.6,122.7 76.5,132.5 77.5,149.3 78.4,136.5 79.3,125.8 80.2,120.8 81.1,120.9 82.1,121.5 83,124.2 83.9,122.3 84.8,122 85.8,121.2 86.7,127.6 87.6,150.5 88.3,168 89.5,141.8 90.4,126.8 91.3,121.5 92.3,123.7 93.2,121.4 94.1,120.9 95.1,122.9 96,121.8 96.9,125.1 97.8,138.7 98.4,149.3 99.7,131.9 100.6,122.5 101.5,125.1 102.5,122.9 103.4,121.8 104.3,122.6 105.3,120.9 106.2,122.6 107.1,121.8 108,124.7 109,137.3 110.2,172.4 110.8,156.7 111.8,137.4 112.7,123.1 113.6,121.7 114.5,121.8 115.5,124.6 116.4,121.4 117.3,123.5 118.2,146.1 119.1,169.7 120.1,146.7 121,130.1 122,124.7 122.9,123.6 123.8,124.2 124.7,124 125.7,122.9 126.6,121.2 127.5,121.7 128.5,126.3 129.6,140.8 130.3,132.7 131.2,124.4 132.2,123.6 133.1,124.3 134,123.6 134.9,124.3 135.9,123.1 136.8,123.6 137.7,123.8 138.7,139.8 139.7,169.7 140.5,151.7 141.4,134 142.4,125 143.3,125 144.2,123.7 145.2,120.9 146.1,124.7 147,121.3 147.9,125 148.9,123.7 149.8,121 150.7,121.5 151.6,123.5 152.6,131.8 153.5,158.1 154,174.8 155.4,143.1 156.3,126.7 157.2,124.8 158.1,120.8 159.1,124.6 160,127.6 161.3,152.7 161.9,144.4 162.8,131.3 163.7,123.2 164.6,124.6 165.6,121.6 166.5,123.7 167.4,122.2 168.3,124.7 169.3,124.2 170.2,136.3 171.2,157.8 172.1,142.3 173,128.7 173.9,123.4 174.8,122.9 175.8,124.6 176.7,123.4 177.6,121.4 178.5,122.3 179.5,124.1 180.4,128.3 181.4,140.8 182.3,131.1 183.2,124.4 184.1,121.1 185,123.1 186,122.4 186.9,124.2 187.8,122.1 188.8,121.8 189.7,122.9 190.6,131.4 191.8,157.8 192.5,146.3 193.4,131.9 194.3,124.7 195.2,123 196.2,122.7 197.1,124.5 198,124.2 199,121 199.9,124.6 200.8,130.2 202,152.7 202.7,142 203.6,129.5 204.5,124.3 205.5,121.5 206.4,124.6 207.3,121.5 208.2,121.4 209.2,122.9 210.1,122.2 211,126.9 211.9,145.6 212.5,157.8 213.8,135.3 214.7,123.6 215.7,123.1 216.6,122.9 217.5,123.9 218.4,122.9 219.4,121.1 220.3,121.8 221.2,124.5 222.2,122.3 223.1,124.1 224,125.1 224.9,123.5 225.9,123.7 226.8,144 227.7,171.4 228.6,150 229.6,132.4 230.5,124.8 231.4,122.1 232.4,124.6 233.3,141.9 234.1,161.2 235.1,141.3 236.1,127.5 237,124.1 237.9,122.3 238.9,123.7 239.8,121.3 240.7,121.1 241.6,121.4 242.6,124.3 243.5,121.5 244.4,124.7 245.3,122.4 246.3,123.3 247.2,137 248.1,174.3 248.7,200.3 250,156.5 250.9,132.6 251.8,121.5 252.8,123.6 253.7,127.2 255.1,152.7 255.6,144.7 256.5,131.6 257.4,124.9 258.3,124.4 259.3,124.3 260.2,124.3 261.1,125 262,121.4 263,123.3 263.9,122.9 264.8,123.3 265.8,124.9 266.7,124.1 267.6,125 268.5,150.4 269.7,198.6 270.4,173.1 271.3,145.5 272.3,125.2 273.2,124.4 274.1,122.5 275,137.2 275.7,149.3 276.9,133 277.8,124.7 278.7,123.8 279.7,122.1 280.6,121.8 281.5,122.2 282.5,123.5 283.4,125.1 284.3,124.7 285.2,124.6 286.2,142.9 286.8,157.8 288,137.2 288.9,124.9 289.9,120.8 290.8,121.6 291.7,123.1 292.7,123.8 293.6,123.5 294.5,122.4 295.4,131.2 296.7,157.8 297.3,146.5 298.2,132.1 299.2,125 300.1,125.1 301,124.8 301.9,123.4 302.9,122.1 303.8,121.1 304.7,121.9 305.6,121.7 306.6,131.5 307.8,157.8 308.4,146.3 309.4,131.9 310.3,121.8 311.2,122.1 312.1,124.9 313.1,121.5 314,124.2 314.9,123.7 315.9,123.2 316.8,125 317.7,130.4 318.9,154.4 319.6,143.6 320.5,130.4 321.4,120.9 322.3,122.1 323.3,121.3 324.2,121 325.1,125.1 326.1,122 327,124.7 327.9,123.8 328.8,142.1 329.7,164.6 330.7,144.6 331.6,129.4 332.6,123.9 333.5,123.2 334.4,123.8 335.3,123.9 336.3,123.2 337.2,123 338.1,121.4 339,124.5 340,122.9 340.9,121 341.8,121.5 342.8,124.6 343.7,122.5 344.6,155.1 345.6,196.9 346.5,167.4 347.4,141.4 348.3,122.8 349.3,122.6 350.2,129.7 351.1,153 351.7,168 353,140.1 353.9,125.5 354.8,121.4 355.7,124.5 356.7,124.4 357.6,121.8 358.5,123.2 359.5,122.8 360.4,126.6 361.3,144 361.8,154.4 363.2,133.2 364.1,123.9 365,124.8 366,124.9 366.9,122.4 367.8,124.5 368.7,124.4 369.7,123.3 370.6,122.6 371.5,140.5 372.3,157.8 373.4,139 374.3,126.2 375.2,124.7 376.2,123.4 377.1,120.9 378,123.5 378.9,121.9 379.9,124.5 380.8,126.3 382.2,149.3 382.7,141.9 383.6,130 384.5,122.2 385.4,124.4 386.4,124.7 387.3,124.7 388.2,154.6 389.1,190.1 390.1,160.8 391,137.5 391.9,123.1 392.9,125.1 393.8,122.3 394.7,121.1 395.6,123.9 396.6,122.9 397.5,123.2 398.4,123.4 399.3,121.8 400.3,121.6 401.2,134.8 402.5,169.7 403.1,156.1 404,137.4 404.9,123.4 405.8,125.1 406.8,124.4 407.7,123 408.6,120.7 409.6,124.5 410.5,123.5 411.4,123.5 412.3,134.5 413.6,168 414.2,154.5 415.1,136.5 416,123 417,122.3 417.9,124.7 418.8,124 419.8,124.3 420.7,122.1 421.6,122.5 422.5,124.3 423.5,140.6 424.1,152.7 425.3,133.9 426.3,124.1 427.2,124.6 428.1,122.1 429,123.8 430,124.2 430.9,123.9 431.8,122.7 432.7,124 433.7,139 434.3,149.3 435.5,131.7 436.5,122.2 437.4,124.1 438.3,122.5 439.2,141.3 440.6,196.9 441.1,179.5 442,150.9 443,129.1 443.9,123 444.8,120.9 445.7,121.9 446.7,122 447.6,124.8 448.5,121.3 449.4,124.1 450.4,121.1 451.3,125.1 452.2,121.5 453.2,121.1 454.1,121.7 455,139.2 455.9,157.8 456.9,139.9 457.8,127 458.7,121.2 459.7,122.2 460.6,125.3 461.5,146.5 462.2,164.6 463.4,141.4 464.3,126.9 465.2,121.2 466.1,125 467.1,122.1 468,123.2 468.9,123.7 469.9,124.7 470.8,121.1 471.7,124.5 472.6,121.5 473.6,123.9 474.5,120.9 475.4,132.7 476.4,158.5 476.8,173.1 478.2,141.2 479.1,125.6 480.1,122.2 481,125.1 481.9,123.4 482.8,122.4 483.8,125.1 484.7,121.5 485.6,125.2 486.6,148.3 487.3,169.7 488.4,145.1 489.3,128.9 490.3,121 491.2,124.7 492.1,123.9 493.1,123.7 494,124.5 494.9,121.2 495.8,124.4 496.8,144 497.5,161.2 498.6,139.8 499.5,126.3 500.5,122.3 501.4,124 502.3,124.4 503.3,124.1 504.2,120.9 505.1,121.4 506,124.3 507.3,140.8 507.9,134.5 508.8,125.8 509.7,123.5 510.7,122.3 511.6,122.3 512.5,123.9 513.5,124.9 514.4,121.6 515.3,122.3 516.2,131 517.5,157.8 518.1,146.7 519,132.2 520,124.4 520.9,124 521.8,124.9 522.7,122.9 523.7,120.9 524.6,122.1 525.5,123.9 526.4,122.5 527.4,137 528.6,173.1 529.2,157.7 530.2,138.1 531.1,123.4 532,121.3 532.9,120.9 533.9,124.2 534.8,124 535.7,122.6 536.7,121.2 537.6,128.7 538.8,149.3 539.4,139.7 540.4,128.3 541.3,125 542.2,123.1 543.1,121.5 544.1,123.5 545,123.4 545.9,123.4 546.9,151.3 548,200.3 548.7,174.1 549.6,146 550.6,125.4 551.5,120.9 552.4,121.5 553.4,122 554.3,122.7 555.2,122.1 556.1,123.5 557.1,121.5 558,123.3 558.9,145.3 559.8,168 560.8,145.6 561.7,129.6 562.6,121.9 563.6,122.2 564.5,123.1 565.4,123.1 566.3,122.4 567.3,130.7 568.6,164.6 570.1,137 571,124.6 571.9,123.4 572.8,125.1 573.8,121.4 574.7,123.9 575.6,123.4 576.5,121 577.5,124.4 578.4,124.6 579.3,135.9 580.1,149.3 581.2,133.9 582.1,123.8 583,123.1 583,115.3" fill="#2f5f94" fill-opacity="0.45"/><polyline points="64.4,124 65.4,126.5 66.3,149.1 67,168 68.1,142.8 69.1,127.5 70,122.6 70.9,124.9 71.9,123.5 72.8,124.4 73.7,122 74.6,121.6 75.6,122.7 76.5,132.5 77.5,149.3 78.4,136.5 79.3,125.8 80.2,120.8 81.1,120.9 82.1,121.5 83,124.2 83.9,122.3 84.8,122 85.8,121.2 86.7,127.6 87.6,150.5 88.3,168 89.5,141.8 90.4,126.8 91.3,121.5 92.3,123.7 93.2,121.4 94.1,120.9 95.1,122.9 96,121.8 96.9,125.1 97.8,138.7 98.4,149.3 99.7,131.9 100.6,122.5 101.5,125.1 102.5,122.9 103.4,121.8 104.3,122.6 105.3,120.9 106.2,122.6 107.1,121.8 108,124.7 109,137.3 110.2,172.4 110.8,156.7 111.8,137.4 112.7,123.1 113.6,121.7 114.5,121.8 115.5,124.6 116.4,121.4 117.3,123.5 118.2,146.1 119.1,169.7 120.1,146.7 121,130.1 122,124.7 122.9,123.6 123.8,124.2 124.7,124 125.7,122.9 126.6,121.2 127.5,121.7 128.5,126.3 129.6,140.8 130.3,132.7 131.2,124.4 132.2,123.6 133.1,124.3 134,123.6 134.9,124.3 135.9,123.1 136.8,123.6 137.7,123.8 138.7,139.8 139.7,169.7 140.5,151.7 141.4,134 142.4,125 143.3,125 144.2,123.7 145.2,120.9 146.1,124.7 147,121.3 147.9,125 148.9,123.7 149.8,121 150.7,121.5 151.6,123.5 152.6,131.8 153.5,158.1 154,174.8 155.4,143.1 156.3,126.7 157.2,124.8 158.1,120.8 159.1,124.6 160,127.6 161.3,152.7 161.9,144.4 162.8,131.3 163.7,123.2 164.6,124.6 165.6,121.6 166.5,123.7 167.4,122.2 168.3,124.7 169.3,124.2 170.2,136.3 171.2,157.8 172.1,142.3 173,128.7 173.9,123.4 174.8,122.9 175.8,124.6 176.7,123.4 177.6,121.4 178.5,122.3 179.5,124.1 180.4,128.3 181.4,140.8 182.3,131.1 183.2,124.4 184.1,121.1 185,123.1 186,122.4 186.9,124.2 187.8,122.1 188.8,121.8 189.7,122.9 190.6,131.4 191.8,157.8 192.5,146.3 193.4,131.9 194.3,124.7 195.2,123 196.2,122.7 197.1,124.5 198,124.2 199,121 199.9,124.6 200.8,130.2 202,152.7 202.7,142 203.6,129.5 204.5,124.3 205.5,121.5 206.4,124.6 207.3,121.5 208.2,121.4 209.2,122.9 210.1,122.2 211,126.9 211.9,145.6 212.5,157.8 213.8,135.3 214.7,123.6 215.7,123.1 216.6,122.9 217.5,123.9 218.4,122.9 219.4,121.1 220.3,121.8 221.2,124.5 222.2,122.3 223.1,124.1 224,125.1 224.9,123.5 225.9,123.7 226.8,144 227.7,171.4 228.6,150 229.6,132.4 230.5,124.8 231.4,122.1 232.4,124.6 233.3,141.9 234.1,161.2 235.1,141.3 236.1,127.5 237,124.1 237.9,122.3 238.9,123.7 239.8,121.3 240.7,121.1 241.6,121.4 242.6,124.3 243.5,121.5 244.4,124.7 245.3,122.4 246.3,123.3 247.2,137 248.1,174.3 248.7,200.3 250,156.5 250.9,132.6 251.8,121.5 252.8,123.6 253.7,127.2 255.1,152.7 255.6,144.7 256.5,131.6 257.4,124.9 258.3,124.4 259.3,124.3 260.2,124.3 261.1,125 262,121.4 263,123.3 263.9,122.9 264.8,123.3 265.8,124.9 266.7,124.1 267.6,125 268.5,150.4 269.7,198.6 270.4,173.1 271.3,145.5 272.3,125.2 273.2,124.4 274.1,122.5 275,137.2 275.7,149.3 276.9,133 277.8,124.7 278.7,123.8 279.7,122.1 280.6,121.8 281.5,122.2 282.5,123.5 283.4,125.1 284.3,124.7 285.2,124.6 286.2,142.9 286.8,157.8 288,137.2 288.9,124.9 289.9,120.8 290.8,121.6 291.7,123.1 292.7,123.8 293.6,123.5 294.5,122.4 295.4,131.2 296.7,157.8 297.3,146.5 298.2,132.1 299.2,125 300.1,125.1 301,124.8 301.9,123.4 302.9,122.1 303.8,121.1 304.7,121.9 305.6,121.7 306.6,131.5 307.8,157.8 308.4,146.3 309.4,131.9 310.3,121.8 311.2,122.1 312.1,124.9 313.1,121.5 314,124.2 314.9,123.7 315.9,123.2 316.8,125 317.7,130.4 318.9,154.4 319.6,143.6 320.5,130.4 321.4,120.9 322.3,122.1 323.3,121.3 324.2,121 325.1,125.1 326.1,122 327,124.7 327.9,123.8 328.8,142.1 329.7,164.6 330.7,144.6 331.6,129.4 332.6,123.9 333.5,123.2 334.4,123.8 335.3,123.9 336.3,123.2 337.2,123 338.1,121.4 339,124.5 340,122.9 340.9,121 341.8,121.5 342.8,124.6 343.7,122.5 344.6,155.1 345.6,196.9 346.5,167.4 347.4,141.4 348.3,122.8 349.3,122.6 350.2,129.7 351.1,153 351.7,168 353,140.1 353.9,125.5 354.8,121.4 355.7,124.5 356.7,124.4 357.6,121.8 358.5,123.2 359.5,122.8 360.4,126.6 361.3,144 361.8,154.4 363.2,133.2 364.1,123.9 365,124.8 366,124.9 366.9,122.4 367.8,124.5 368.7,124.4 369.7,123.3 370.6,122.6 371.5,140.5 372.3,157.8 373.4,139 374.3,126.2 375.2,124.7 376.2,123.4 377.1,120.9 378,123.5 378.9,121.9 379.9,124.5 380.8,126.3 382.2,149.3 382.7,141.9 383.6,130 384.5,122.2 385.4,124.4 386.4,124.7 387.3,124.7 388.2,154.6 389.1,190.1 390.1,160.8 391,137.5 391.9,123.1 392.9,125.1 393.8,122.3 394.7,121.1 395.6,123.9 396.6,122.9 397.5,123.2 398.4,123.4 399.3,121.8 400.3,121.6 401.2,134.8 402.5,169.7 403.1,156.1 404,137.4 404.9,123.4 405.8,125.1 406.8,124.4 407.7,123 408.6,120.7 409.6,124.5 410.5,123.5 411.4,123.5 412.3,134.5 413.6,168 414.2,154.5 415.1,136.5 416,123 417,122.3 417.9,124.7 418.8,124 419.8,124.3 420.7,122.1 421.6,122.5 422.5,124.3 423.5,140.6 424.1,152.7 425.3,133.9 426.3,124.1 427.2,124.6 428.1,122.1 429,123.8 430,124.2 430.9,123.9 431.8,122.7 432.7,124 433.7,139 434.3,149.3 435.5,131.7 436.5,122.2 437.4,124.1 438.3,122.5 439.2,141.3 440.6,196.9 441.1,179.5 442,150.9 443,129.1 443.9,123 444.8,120.9 445.7,121.9 446.7,122 447.6,124.8 448.5,121.3 449.4,124.1 450.4,121.1 451.3,125.1 452.2,121.5 453.2,121.1 454.1,121.7 455,139.2 455.9,157.8 456.9,139.9 457.8,127 458.7,121.2 459.7,122.2 460.6,125.3 461.5,146.5 462.2,164.6 463.4,141.4 464.3,126.9 465.2,121.2 466.1,125 467.1,122.1 468,123.2 468.9,123.7 469.9,124.7 470.8,121.1 471.7,124.5 472.6,121.5 473.6,123.9 474.5,120.9 475.4,132.7 476.4,158.5 476.8,173.1 478.2,141.2 479.1,125.6 480.1,122.2 481,125.1 481.9,123.4 482.8,122.4 483.8,125.1 484.7,121.5 485.6,125.2 486.6,148.3 487.3,169.7 488.4,145.1 489.3,128.9 490.3,121 491.2,124.7 492.1,123.9 493.1,123.7 494,124.5 494.9,121.2 495.8,124.4 496.8,144 497.5,161.2 498.6,139.8 499.5,126.3 500.5,122.3 501.4,124 502.3,124.4 503.3,124.1 504.2,120.9 505.1,121.4 506,124.3 507.3,140.8 507.9,134.5 508.8,125.8 509.7,123.5 510.7,122.3 511.6,122.3 512.5,123.9 513.5,124.9 514.4,121.6 515.3,122.3 516.2,131 517.5,157.8 518.1,146.7 519,132.2 520,124.4 520.9,124 521.8,124.9 522.7,122.9 523.7,120.9 524.6,122.1 525.5,123.9 526.4,122.5 527.4,137 528.6,173.1 529.2,157.7 530.2,138.1 531.1,123.4 532,121.3 532.9,120.9 533.9,124.2 534.8,124 535.7,122.6 536.7,121.2 537.6,128.7 538.8,149.3 539.4,139.7 540.4,128.3 541.3,125 542.2,123.1 543.1,121.5 544.1,123.5 545,123.4 545.9,123.4 546.9,151.3 548,200.3 548.7,174.1 549.6,146 550.6,125.4 551.5,120.9 552.4,121.5 553.4,122 554.3,122.7 555.2,122.1 556.1,123.5 557.1,121.5 558,123.3 558.9,145.3 559.8,168 560.8,145.6 561.7,129.6 562.6,121.9 563.6,122.2 564.5,123.1 565.4,123.1 566.3,122.4 567.3,130.7 568.6,164.6 570.1,137 571,124.6 571.9,123.4 572.8,125.1 573.8,121.4 574.7,123.9 575.6,123.4 576.5,121 577.5,124.4 578.4,124.6 579.3,135.9 580.1,149.3 581.2,133.9 582.1,123.8 583,123.1" fill="none" stroke="#3b8ad8" stroke-width="1" stroke-linejoin="round"/><polygon points="64.4,115.3 64.4,114.6 65.7,114.7 67,114.5 68.3,114.4 69.6,114.6 70.9,114.5 72.2,114.6 73.5,114.5 74.8,114.4 76.1,114.4 76.2,114.4 77.8,113.6 79.4,114.4 80,114.7 81.3,114.5 82.6,114.4 83.9,114.4 85.2,114.7 86.5,114.5 87.8,114.7 89.1,114.5 90.4,114.4 91.7,114.6 93,114.4 94.3,114.4 95.6,114.4 96.9,114.6 98.2,114.4 99.5,114.4 100.8,114.3 102.1,114.7 103.4,114.7 104.7,114.6 106,113.4 107.3,113.4 108.6,113.4 109.9,113.4 111.2,113.4 112.5,113.4 113.8,113.4 115.1,113.4 116.4,113.4 117.7,114.7 119,114.5 120.3,114.6 121.6,114.7 122.9,114.4 124.2,114.6 125.5,114.6 126.8,114.6 128.1,114.5 129.4,114.6 130.7,114.5 132,114.7 133.3,114.4 134.6,114.6 135,114.4 136.6,111.6 138.1,114.7 138.5,114.5 139.8,114.6 141.1,114.6 142.4,114.4 143.7,114.5 145,114.5 146.3,114.6 147.6,114.5 148.9,114.6 150.2,114.5 151.5,114.5 152.8,114.5 154.1,114.5 155.4,114.5 156.7,114.6 158,114.4 159.3,114.5 160.6,114.4 161.9,114.4 163.2,114.5 164.5,114.6 165.8,114.6 167.1,114.6 168.4,114.6 169.7,114.6 171,114.6 172.3,114.5 173.6,114.6 174.9,114.6 176.2,114.5 177.5,114.6 178.8,114.4 180.1,114.4 181.4,114.6 182.7,114.4 184,114.6 185.3,114.7 186.6,114.3 187.9,114.7 189.2,114.7 190.5,114.4 191.8,114.7 193.1,114.5 194.4,114.5 195.7,114.6 197,114.6 198.3,114.4 199.6,114.6 200.9,114.6 202.2,114.5 203.5,114.4 204.8,114.6 206.1,114.7 207.4,114.4 208.7,114.7 210,114.7 211.3,114.7 212.6,114.4 213.9,114.5 215.2,114.4 216.5,114.5 217.8,114.4 219.1,114.6 220.4,114.6 221.7,114.5 223,114.7 224.3,114.6 225.6,114.4 226.9,114.5 228.2,114.5 229.5,114.4 230.8,114.5 232.1,114.4 233.4,114.6 234.7,114.7 236,114.6 237.3,114.6 238.6,114.7 239.9,114.6 241.2,114.6 242.5,114.5 243.8,114.4 245.1,114.4 246.4,114.4 246.5,114.5 248.7,94.2 250.9,114.4 251.6,114.6 252.9,114.4 254.2,114.7 255.5,114.4 256.8,114.4 258.1,114.4 259.4,114.4 260.7,114.4 262,114.5 263.3,114.4 264.6,114.4 265.9,114.5 267.2,114.5 268.5,114.4 269.8,114.6 271.1,114.6 272.4,114.7 273.7,114.4 275,114.5 276.3,114.5 277.6,114.6 278.9,114.6 280.2,114.5 281.5,114.4 282.8,114.6 284.1,114.5 285.4,114.5 286.7,114.4 288,114.6 289.3,114.4 290.6,114.7 291.9,114.5 293.2,114.4 294.5,114.5 295.8,114.4 297.1,114.6 298.4,114.6 299.7,114.6 301,114.6 302.3,114.4 303.6,114.5 304.9,114.5 306.2,114.4 307.5,114.4 308.8,114.4 310.1,114.4 311.4,114.4 312.7,114.4 314,114.6 315.3,114.5 316.6,114.4 317.9,114.4 319.2,114.4 320.5,114.4 321.8,114.5 323.1,114.6 324.4,114.5 325.7,114.6 327,114.5 328.3,114.6 329.6,114.7 330.9,114.4 332.2,114.4 333.5,114.6 334.8,114.7 336.1,114.4 337.4,114.4 338.7,114.6 340,114.4 341.3,114.4 342.6,114.5 343.9,114.6 345.2,114.7 346.5,114.7 347.8,114.5 349.1,114.4 350.4,114.5 351.7,114.6 353,114.4 354.3,114.7 355.6,114.5 356.9,114.6 358.2,114.7 359.5,114.6 360.8,114.4 362.1,114.6 363.4,114.7 364.7,114.5 366,114.6 367.3,114.5 368.6,114.5 369.9,114.4 371.2,114.4 372.5,114.6 373.8,114.5 375.1,114.6 376.4,114.6 377.7,114.7 378,114.7 380.2,87.4 382.5,114.5 382.9,114.4 384.2,114.6 385.5,114.6 386.8,114.6 388.1,114.5 389.4,114.6 390.7,114.7 392,114.4 393.3,114.5 394.6,114.4 395.9,114.4 397.2,114.4 398.5,114.4 399.8,114.4 401.1,114.5 402.4,114.4 403.7,114.4 405,114.7 406.3,114.6 407.6,114.6 408.9,114.5 410.2,114.4 411.5,114.5 412.8,114.4 414.1,114.6 415.4,114.5 416.7,114.6 418,114.5 419.3,114.6 420.6,114.7 421.9,114.6 423.2,114.5 424.5,114.4 425.8,114.6 427.1,114.4 428.4,114.4 429.7,114.6 431,114.4 432.3,114.4 433.6,114.4 434.9,114.5 436.2,114.6 437.5,114.5 438.8,114.5 440.1,114.5 441.4,114.6 442.7,114.4 444,114.5 445.3,114.7 446.6,114.6 447.9,114.7 449.2,114.5 450.5,114.7 451.8,114.5 453.1,114.6 454.4,114.4 455.7,114.4 457,114.6 458.3,114.4 459.6,114.5 460.9,114.6 462.2,114.4 463.5,114.7 464.8,114.6 466.1,114.5 467.4,114.6 468.7,114.5 470,114.4 471.3,114.6 472.6,114.4 473.9,114.6 475.2,114.4 476.5,114.4 477.8,114.6 479.1,114.4 480.4,114.6 481.7,114.7 483,114.6 484.3,114.4 485.6,114.5 486.9,114.5 488.2,114.6 489.5,114.6 490.8,114.6 492.1,114.5 493.4,114.4 494.7,114.5 496,114.6 497.3,114.4 498.6,114.5 499.9,114.4 501.2,114.4 502.5,114.5 503.8,114.6 505.1,114.6 506.4,114.5 507.7,114.4 509,114.4 510.3,114.4 511.6,114.5 512.9,114.5 514.2,114.4 515.5,114.7 516.8,114.6 518.1,114.5 519.4,114.5 520.7,114.5 522,114.6 523.3,114.5 524.6,114.6 525.9,114.6 527.2,114.6 528.5,114.6 529.8,114.5 531.1,114.6 532.4,114.6 533.6,114.5 534.9,114.5 536.2,114.6 537.5,114.6 538.8,114.5 540.1,114.5 541.4,114.7 542.7,114.5 544,114.7 545.3,114.4 546.6,114.6 547.9,114.4 549.2,114.7 550.5,114.5 550.9,114.5 552.8,112.9 554.7,114.6 555.7,114.6 557,114.7 558.3,114.4 559.6,114.5 560.9,114.6 562.2,114.6 563.5,114.6 564.8,114.5 566.1,114.6 567.4,114.6 568.7,114.5 570,114.4 571.3,114.4 572.6,114.4 573.9,114.4 575.2,114.5 576.5,114.6 577.8,114.4 579.1,114.7 580.4,114.4 581.7,114.6 583,114.5 583,115.3" fill="#1f8c4d" fill-opacity="0.6"/><polyline points="64.4,114.6 65.7,114.7 67,114.5 68.3,114.4 69.6,114.6 70.9,114.5 72.2,114.6 73.5,114.5 74.8,114.4 76.1,114.4 76.2,114.4 77.8,113.6 79.4,114.4 80,114.7 81.3,114.5 82.6,114.4 83.9,114.4 85.2,114.7 86.5,114.5 87.8,114.7 89.1,114.5 90.4,114.4 91.7,114.6 93,114.4 94.3,114.4 95.6,114.4 96.9,114.6 98.2,114.4 99.5,114.4 100.8,114.3 102.1,114.7 103.4,114.7 104.7,114.6 106,113.4 107.3,113.4 108.6,113.4 109.9,113.4 111.2,113.4 112.5,113.4 113.8,113.4 115.1,113.4 116.4,113.4 117.7,114.7 119,114.5 120.3,114.6 121.6,114.7 122.9,114.4 124.2,114.6 125.5,114.6 126.8,114.6 128.1,114.5 129.4,114.6 130.7,114.5 132,114.7 133.3,114.4 134.6,114.6 135,114.4 136.6,111.6 138.1,114.7 138.5,114.5 139.8,114.6 141.1,114.6 142.4,114.4 143.7,114.5 145,114.5 146.3,114.6 147.6,114.5 148.9,114.6 150.2,114.5 151.5,114.5 152.8,114.5 154.1,114.5 155.4,114.5 156.7,114.6 158,114.4 159.3,114.5 160.6,114.4 161.9,114.4 163.2,114.5 164.5,114.6 165.8,114.6 167.1,114.6 168.4,114.6 169.7,114.6 171,114.6 172.3,114.5 173.6,114.6 174.9,114.6 176.2,114.5 177.5,114.6 178.8,114.4 180.1,114.4 181.4,114.6 182.7,114.4 184,114.6 185.3,114.7 186.6,114.3 187.9,114.7 189.2,114.7 190.5,114.4 191.8,114.7 193.1,114.5 194.4,114.5 195.7,114.6 197,114.6 198.3,114.4 199.6,114.6 200.9,114.6 202.2,114.5 203.5,114.4 204.8,114.6 206.1,114.7 207.4,114.4 208.7,114.7 210,114.7 211.3,114.7 212.6,114.4 213.9,114.5 215.2,114.4 216.5,114.5 217.8,114.4 219.1,114.6 220.4,114.6 221.7,114.5 223,114.7 224.3,114.6 225.6,114.4 226.9,114.5 228.2,114.5 229.5,114.4 230.8,114.5 232.1,114.4 233.4,114.6 234.7,114.7 236,114.6 237.3,114.6 238.6,114.7 239.9,114.6 241.2,114.6 242.5,114.5 243.8,114.4 245.1,114.4 246.4,114.4 246.5,114.5 248.7,94.2 250.9,114.4 251.6,114.6 252.9,114.4 254.2,114.7 255.5,114.4 256.8,114.4 258.1,114.4 259.4,114.4 260.7,114.4 262,114.5 263.3,114.4 264.6,114.4 265.9,114.5 267.2,114.5 268.5,114.4 269.8,114.6 271.1,114.6 272.4,114.7 273.7,114.4 275,114.5 276.3,114.5 277.6,114.6 278.9,114.6 280.2,114.5 281.5,114.4 282.8,114.6 284.1,114.5 285.4,114.5 286.7,114.4 288,114.6 289.3,114.4 290.6,114.7 291.9,114.5 293.2,114.4 294.5,114.5 295.8,114.4 297.1,114.6 298.4,114.6 299.7,114.6 301,114.6 302.3,114.4 303.6,114.5 304.9,114.5 306.2,114.4 307.5,114.4 308.8,114.4 310.1,114.4 311.4,114.4 312.7,114.4 314,114.6 315.3,114.5 316.6,114.4 317.9,114.4 319.2,114.4 320.5,114.4 321.8,114.5 323.1,114.6 324.4,114.5 325.7,114.6 327,114.5 328.3,114.6 329.6,114.7 330.9,114.4 332.2,114.4 333.5,114.6 334.8,114.7 336.1,114.4 337.4,114.4 338.7,114.6 340,114.4 341.3,114.4 342.6,114.5 343.9,114.6 345.2,114.7 346.5,114.7 347.8,114.5 349.1,114.4 350.4,114.5 351.7,114.6 353,114.4 354.3,114.7 355.6,114.5 356.9,114.6 358.2,114.7 359.5,114.6 360.8,114.4 362.1,114.6 363.4,114.7 364.7,114.5 366,114.6 367.3,114.5 368.6,114.5 369.9,114.4 371.2,114.4 372.5,114.6 373.8,114.5 375.1,114.6 376.4,114.6 377.7,114.7 378,114.7 380.2,87.4 382.5,114.5 382.9,114.4 384.2,114.6 385.5,114.6 386.8,114.6 388.1,114.5 389.4,114.6 390.7,114.7 392,114.4 393.3,114.5 394.6,114.4 395.9,114.4 397.2,114.4 398.5,114.4 399.8,114.4 401.1,114.5 402.4,114.4 403.7,114.4 405,114.7 406.3,114.6 407.6,114.6 408.9,114.5 410.2,114.4 411.5,114.5 412.8,114.4 414.1,114.6 415.4,114.5 416.7,114.6 418,114.5 419.3,114.6 420.6,114.7 421.9,114.6 423.2,114.5 424.5,114.4 425.8,114.6 427.1,114.4 428.4,114.4 429.7,114.6 431,114.4 432.3,114.4 433.6,114.4 434.9,114.5 436.2,114.6 437.5,114.5 438.8,114.5 440.1,114.5 441.4,114.6 442.7,114.4 444,114.5 445.3,114.7 446.6,114.6 447.9,114.7 449.2,114.5 450.5,114.7 451.8,114.5 453.1,114.6 454.4,114.4 455.7,114.4 457,114.6 458.3,114.4 459.6,114.5 460.9,114.6 462.2,114.4 463.5,114.7 464.8,114.6 466.1,114.5 467.4,114.6 468.7,114.5 470,114.4 471.3,114.6 472.6,114.4 473.9,114.6 475.2,114.4 476.5,114.4 477.8,114.6 479.1,114.4 480.4,114.6 481.7,114.7 483,114.6 484.3,114.4 485.6,114.5 486.9,114.5 488.2,114.6 489.5,114.6 490.8,114.6 492.1,114.5 493.4,114.4 494.7,114.5 496,114.6 497.3,114.4 498.6,114.5 499.9,114.4 501.2,114.4 502.5,114.5 503.8,114.6 505.1,114.6 506.4,114.5 507.7,114.4 509,114.4 510.3,114.4 511.6,114.5 512.9,114.5 514.2,114.4 515.5,114.7 516.8,114.6 518.1,114.5 519.4,114.5 520.7,114.5 522,114.6 523.3,114.5 524.6,114.6 525.9,114.6 527.2,114.6 528.5,114.6 529.8,114.5 531.1,114.6 532.4,114.6 533.6,114.5 534.9,114.5 536.2,114.6 537.5,114.6 538.8,114.5 540.1,114.5 541.4,114.7 542.7,114.5 544,114.7 545.3,114.4 546.6,114.6 547.9,114.4 549.2,114.7 550.5,114.5 550.9,114.5 552.8,112.9 554.7,114.6 555.7,114.6 557,114.7 558.3,114.4 559.6,114.5 560.9,114.6 562.2,114.6 563.5,114.6 564.8,114.5 566.1,114.6 567.4,114.6 568.7,114.5 570,114.4 571.3,114.4 572.6,114.4 573.9,114.4 575.2,114.5 576.5,114.6 577.8,114.4 579.1,114.7 580.4,114.4 581.7,114.6 583,114.5" fill="none" stroke="#2fd47a" stroke-width="1" stroke-linejoin="round"/>
<path d="M122.6 27V205.8M247.4 27V205.8M371.7 27V205.8M496.5 27V205.8M64.4 47.6H583M64.4 81.3H583M64.4 115.3H583M64.4 149.3H583M64.4 183.3H583" stroke="#62728a" stroke-opacity=".58" stroke-width="1" fill="none"/></g>
<g font-family='"DejaVu Sans", "Liberation Sans", sans-serif' font-size="10.67" fill="#ffffff">
<text x="58.6" y="50.6" text-anchor="end">2 MB/s</text>
<text x="58.6" y="84.3" text-anchor="end">1 MB/s</text>
<text x="58.6" y="118.3" text-anchor="end">0</text>
<text x="58.6" y="152.3" text-anchor="end">1 MB/s</text>
<text x="58.6" y="186.3" text-anchor="end">2 MB/s</text>
<text x="122.6" y="217.1" text-anchor="middle">Mon 18:00</text>
<text x="247.4" y="217.1" text-anchor="middle">Tue 00:00</text>
<text x="371.7" y="217.1" text-anchor="middle">Tue 06:00</text>
<text x="496.5" y="217.1" text-anchor="middle">Tue 12:00</text>
</g></svg></div>
<div class="dash" style="left:1278px;top:337px;width:592px;height:222px">
<div class="dt" style="padding-left:8px;letter-spacing:0.5px">Errors</div>
<svg class="cv" width="592" height="222" viewBox="0 0 592 222">
<g transform="translate(0 0)">
<path d="M64.4 115.6H583" stroke="#f0555c" stroke-width="2" fill="none"/>
<path d="M122.6 27V205.8M247.4 27V205.8M371.7 27V205.8M496.5 27V205.8M64.4 31.8H583M64.4 52.7H583M64.4 73.7H583M64.4 94.3H583M64.4 115.6H583M64.4 136.5H583M64.4 157.5H583M64.4 178.5H583M64.4 199.5H583" stroke="#62728a" stroke-opacity=".58" stroke-width="1" fill="none"/></g>
<g font-family='"DejaVu Sans", "Liberation Sans", sans-serif' font-size="10.67" fill="#ffffff">
<text x="58.6" y="34.8" text-anchor="end">1.00/s</text>
<text x="58.6" y="55.7" text-anchor="end">0.750/s</text>
<text x="58.6" y="76.7" text-anchor="end">0.500/s</text>
<text x="58.6" y="97.3" text-anchor="end">0.250/s</text>
<text x="58.6" y="118.6" text-anchor="end">0</text>
<text x="58.6" y="139.5" text-anchor="end">0.250/s</text>
<text x="58.6" y="160.5" text-anchor="end">0.500/s</text>
<text x="58.6" y="181.5" text-anchor="end">0.750/s</text>
<text x="58.6" y="202.5" text-anchor="end">1.00/s</text>
<text x="122.6" y="217.1" text-anchor="middle">Mon 18:00</text>
<text x="247.4" y="217.1" text-anchor="middle">Tue 00:00</text>
<text x="371.7" y="217.1" text-anchor="middle">Tue 06:00</text>
<text x="496.5" y="217.1" text-anchor="middle">Tue 12:00</text>
</g></svg></div>
<div class="dash" style="left:78px;top:567px;width:592px;height:222px">
<div class="dt" style="padding-left:8px;letter-spacing:0.32px">Average check latency</div>
<svg class="cv" width="592" height="222" viewBox="0 0 592 222">
<g transform="translate(0 0)">
<polygon points="64.4,204 64.4,203.8 66.2,203.8 67.9,203.8 69.6,203.8 71.4,203.8 73.1,203.8 74.8,203.8 75.6,203.8 77.1,202.2 78.7,203.8 80,203.8 81.8,203.8 83,203.8 84.5,30.9 85.9,203.8 87,203.8 88.7,203.8 89.9,203.8 91.4,201.5 93,203.8 93.9,203.8 95.3,203.8 96.8,202.2 98.4,203.8 99.1,203.8 100.7,203.8 102.2,202.8 103.8,203.8 104.3,203.8 106.1,203.8 107.8,203.8 109.5,203.8 110.5,203.8 112.1,202.8 113.7,203.8 114.7,203.8 115.9,203.8 117.5,202.2 119.1,203.8 119.9,203.8 121.7,203.8 123.4,203.8 125.1,203.8 126.9,203.8 128.6,203.8 130.3,203.8 132.1,203.8 133.8,203.8 135.6,203.8 137.3,203.8 139,203.8 140.8,203.8 142.5,203.8 144.2,203.8 146,203.8 147.7,203.8 149.4,203.8 151.2,203.8 152.4,203.8 154,198.5 155.6,203.8 156.4,203.8 158.1,203.8 159.8,203.8 161.6,203.8 163.3,203.8 165,203.8 166.8,203.8 168.5,203.8 170.2,203.8 172,203.8 173.7,203.8 175.4,203.8 177.2,203.8 178.9,203.8 180.6,203.8 181,203.8 182.6,198.5 183.3,203.8 184.9,197.8 186.4,203.8 187.6,203.8 189.3,203.8 191.1,203.8 192.8,203.8 194.5,203.8 196.3,203.8 198,203.8 198.5,203.8 200.1,199.1 201.7,203.8 203.2,203.8 204.9,203.8 206.7,203.8 208.4,203.8 210.1,203.8 210.6,203.8 212.2,201.5 213.8,203.8 215.3,203.8 217.1,203.8 218.8,203.8 220.5,203.8 222.3,203.8 224,203.8 225.7,203.8 227.5,203.8 229.2,203.8 230.9,203.8 232.7,203.8 234.4,203.8 236.1,203.8 237.9,203.8 239.6,203.8 241.4,203.8 242.4,203.8 243.9,198.5 245.5,203.8 246.6,203.8 248.3,203.8 250,203.8 251.8,203.8 253.5,203.8 254.1,203.8 255.7,199.1 257.3,203.8 258.7,203.8 260.4,203.8 262.2,203.8 263.9,203.8 265.6,203.8 267.4,203.8 268.4,203.8 270,200.3 271.6,203.8 272.6,203.8 274.3,203.8 275.7,203.8 277.3,201.5 278.9,203.8 279.5,203.8 281.2,203.8 283,203.8 284.7,203.8 286.4,203.8 288.2,203.8 289.9,203.8 291.7,203.8 293.4,203.8 295.1,203.8 296.9,203.8 298.6,203.8 300.3,203.8 302.1,203.8 303.8,203.8 304.3,203.8 305.9,202.8 307.5,203.8 309,203.8 310.7,203.8 312.5,203.8 314.2,203.8 315.9,203.8 317.7,203.8 319.4,203.8 321.1,203.8 322.9,203.8 324.6,203.8 326.3,203.8 328.1,203.8 329.8,203.8 331.5,203.8 333.3,203.8 335,203.8 336.7,203.8 338.5,203.8 340.2,203.8 342,203.8 343.7,203.8 345.4,203.8 347.2,203.8 348.9,203.8 350.6,203.8 351,203.8 352.6,202.2 354.2,203.8 355.8,203.8 357.6,203.8 359.3,203.8 361,203.8 362.8,203.8 364.5,203.8 366.2,203.8 368,203.8 369.7,203.8 371.4,203.8 373.2,203.8 374.9,203.8 376.6,203.8 378.4,203.8 380.1,203.8 380.6,203.8 382.2,199.1 382.8,203.8 384.4,199.1 386,203.8 387,203.8 388.8,203.8 390.5,203.8 392.3,203.8 394,203.8 394.5,203.8 396.1,201.5 397.7,203.8 398,203.8 399.6,200.9 401.2,203.8 402.7,203.8 404.4,203.8 406.1,203.8 407.9,203.8 409.6,203.8 411.3,203.8 413.1,203.8 414.8,203.8 416.5,203.8 418.3,203.8 420,203.8 421.7,203.8 423.5,203.8 425.2,203.8 426.9,203.8 427.3,203.8 428.9,202.2 430.4,203.8 432.1,203.8 433.9,203.8 435.6,203.8 437.3,203.8 439.1,203.8 440.8,203.8 442.5,203.8 444.3,203.8 446,203.8 447.8,203.8 449.5,203.8 451.2,203.8 453,203.8 454.7,203.8 456.4,203.8 458.2,203.8 459.9,203.8 461.6,203.8 462.8,203.8 464.4,202.2 466,203.8 466.8,203.8 468.6,203.8 470.3,203.8 472,203.8 473.8,203.8 475.5,203.8 477.2,203.8 479,203.8 480.7,203.8 482.4,203.8 484.2,203.8 485.9,203.8 487.6,203.8 489.4,203.8 491.1,203.8 492.8,203.8 494.6,203.8 496.3,203.8 498.1,203.8 499.8,203.8 501.5,203.8 503.3,203.8 505,203.8 506.7,203.8 508.5,203.8 510.2,203.8 511.9,203.8 513.7,203.8 515.4,203.8 517.1,203.8 518.9,203.8 519.4,203.8 521,202.8 522.6,203.8 524.1,203.8 525.8,203.8 527.5,203.8 529.3,203.8 531,203.8 532.7,203.8 534.5,203.8 535.3,203.8 536.9,202.2 538.5,203.8 540.1,202.2 541.6,203.8 543.1,203.8 544.9,203.8 546.4,203.8 548,202.8 549.6,203.8 550.1,203.8 551.8,203.8 553.6,203.8 555.3,203.8 557,203.8 558.5,203.8 560.1,201.5 561.7,203.8 562.2,203.8 564,203.8 565.7,203.8 567.4,203.8 569.2,203.8 570.9,203.8 572.6,203.8 574.4,203.8 576.1,203.8 577.8,203.8 578.2,203.8 579.8,202.8 581.4,203.8 583,203.8 583,204" fill="#1a78ff" fill-opacity="0.15"/><polyline points="64.4,203.8 66.2,203.8 67.9,203.8 69.6,203.8 71.4,203.8 73.1,203.8 74.8,203.8 75.6,203.8 77.1,202.2 78.7,203.8 80,203.8 81.8,203.8 83,203.8 84.5,30.9 85.9,203.8 87,203.8 88.7,203.8 89.9,203.8 91.4,201.5 93,203.8 93.9,203.8 95.3,203.8 96.8,202.2 98.4,203.8 99.1,203.8 100.7,203.8 102.2,202.8 103.8,203.8 104.3,203.8 106.1,203.8 107.8,203.8 109.5,203.8 110.5,203.8 112.1,202.8 113.7,203.8 114.7,203.8 115.9,203.8 117.5,202.2 119.1,203.8 119.9,203.8 121.7,203.8 123.4,203.8 125.1,203.8 126.9,203.8 128.6,203.8 130.3,203.8 132.1,203.8 133.8,203.8 135.6,203.8 137.3,203.8 139,203.8 140.8,203.8 142.5,203.8 144.2,203.8 146,203.8 147.7,203.8 149.4,203.8 151.2,203.8 152.4,203.8 154,198.5 155.6,203.8 156.4,203.8 158.1,203.8 159.8,203.8 161.6,203.8 163.3,203.8 165,203.8 166.8,203.8 168.5,203.8 170.2,203.8 172,203.8 173.7,203.8 175.4,203.8 177.2,203.8 178.9,203.8 180.6,203.8 181,203.8 182.6,198.5 183.3,203.8 184.9,197.8 186.4,203.8 187.6,203.8 189.3,203.8 191.1,203.8 192.8,203.8 194.5,203.8 196.3,203.8 198,203.8 198.5,203.8 200.1,199.1 201.7,203.8 203.2,203.8 204.9,203.8 206.7,203.8 208.4,203.8 210.1,203.8 210.6,203.8 212.2,201.5 213.8,203.8 215.3,203.8 217.1,203.8 218.8,203.8 220.5,203.8 222.3,203.8 224,203.8 225.7,203.8 227.5,203.8 229.2,203.8 230.9,203.8 232.7,203.8 234.4,203.8 236.1,203.8 237.9,203.8 239.6,203.8 241.4,203.8 242.4,203.8 243.9,198.5 245.5,203.8 246.6,203.8 248.3,203.8 250,203.8 251.8,203.8 253.5,203.8 254.1,203.8 255.7,199.1 257.3,203.8 258.7,203.8 260.4,203.8 262.2,203.8 263.9,203.8 265.6,203.8 267.4,203.8 268.4,203.8 270,200.3 271.6,203.8 272.6,203.8 274.3,203.8 275.7,203.8 277.3,201.5 278.9,203.8 279.5,203.8 281.2,203.8 283,203.8 284.7,203.8 286.4,203.8 288.2,203.8 289.9,203.8 291.7,203.8 293.4,203.8 295.1,203.8 296.9,203.8 298.6,203.8 300.3,203.8 302.1,203.8 303.8,203.8 304.3,203.8 305.9,202.8 307.5,203.8 309,203.8 310.7,203.8 312.5,203.8 314.2,203.8 315.9,203.8 317.7,203.8 319.4,203.8 321.1,203.8 322.9,203.8 324.6,203.8 326.3,203.8 328.1,203.8 329.8,203.8 331.5,203.8 333.3,203.8 335,203.8 336.7,203.8 338.5,203.8 340.2,203.8 342,203.8 343.7,203.8 345.4,203.8 347.2,203.8 348.9,203.8 350.6,203.8 351,203.8 352.6,202.2 354.2,203.8 355.8,203.8 357.6,203.8 359.3,203.8 361,203.8 362.8,203.8 364.5,203.8 366.2,203.8 368,203.8 369.7,203.8 371.4,203.8 373.2,203.8 374.9,203.8 376.6,203.8 378.4,203.8 380.1,203.8 380.6,203.8 382.2,199.1 382.8,203.8 384.4,199.1 386,203.8 387,203.8 388.8,203.8 390.5,203.8 392.3,203.8 394,203.8 394.5,203.8 396.1,201.5 397.7,203.8 398,203.8 399.6,200.9 401.2,203.8 402.7,203.8 404.4,203.8 406.1,203.8 407.9,203.8 409.6,203.8 411.3,203.8 413.1,203.8 414.8,203.8 416.5,203.8 418.3,203.8 420,203.8 421.7,203.8 423.5,203.8 425.2,203.8 426.9,203.8 427.3,203.8 428.9,202.2 430.4,203.8 432.1,203.8 433.9,203.8 435.6,203.8 437.3,203.8 439.1,203.8 440.8,203.8 442.5,203.8 444.3,203.8 446,203.8 447.8,203.8 449.5,203.8 451.2,203.8 453,203.8 454.7,203.8 456.4,203.8 458.2,203.8 459.9,203.8 461.6,203.8 462.8,203.8 464.4,202.2 466,203.8 466.8,203.8 468.6,203.8 470.3,203.8 472,203.8 473.8,203.8 475.5,203.8 477.2,203.8 479,203.8 480.7,203.8 482.4,203.8 484.2,203.8 485.9,203.8 487.6,203.8 489.4,203.8 491.1,203.8 492.8,203.8 494.6,203.8 496.3,203.8 498.1,203.8 499.8,203.8 501.5,203.8 503.3,203.8 505,203.8 506.7,203.8 508.5,203.8 510.2,203.8 511.9,203.8 513.7,203.8 515.4,203.8 517.1,203.8 518.9,203.8 519.4,203.8 521,202.8 522.6,203.8 524.1,203.8 525.8,203.8 527.5,203.8 529.3,203.8 531,203.8 532.7,203.8 534.5,203.8 535.3,203.8 536.9,202.2 538.5,203.8 540.1,202.2 541.6,203.8 543.1,203.8 544.9,203.8 546.4,203.8 548,202.8 549.6,203.8 550.1,203.8 551.8,203.8 553.6,203.8 555.3,203.8 557,203.8 558.5,203.8 560.1,201.5 561.7,203.8 562.2,203.8 564,203.8 565.7,203.8 567.4,203.8 569.2,203.8 570.9,203.8 572.6,203.8 574.4,203.8 576.1,203.8 577.8,203.8 578.2,203.8 579.8,202.8 581.4,203.8 583,203.8" fill="none" stroke="#1a78ff" stroke-width="1.2" stroke-linejoin="round"/><polygon points="64.4,204 64.4,203.9 66.2,203.9 67.9,203.9 69.6,203.9 71.4,203.9 73.1,203.9 74.8,203.9 77.5,203.2 80,203.9 81.8,203.9 84.5,202.2 87,203.9 88.7,203.9 90.5,203.9 91.8,202.9 93.9,203.9 95.7,203.9 97.2,203.2 99.1,203.9 100.9,203.9 102.6,203.4 104.3,203.9 106.1,203.9 107.8,203.9 109.5,203.9 112.4,203.4 114.7,203.9 116.5,203.9 117.8,203.2 119.9,203.9 121.7,203.9 123.4,203.9 125.1,203.9 126.9,203.9 128.6,203.9 130.3,203.9 132.1,203.9 133.8,203.9 135.6,203.9 137.3,203.9 139,203.9 140.8,203.9 142.5,203.9 144.2,203.9 146,203.9 147.7,203.9 149.4,203.9 151.2,203.9 152.9,203.9 154.4,201.5 156.4,203.9 158.1,203.9 159.8,203.9 161.6,203.9 163.3,203.9 165,203.9 166.8,203.9 168.5,203.9 170.2,203.9 172,203.9 173.7,203.9 175.4,203.9 177.2,203.9 178.9,203.9 180.6,203.9 182.9,201.5 185.2,201.2 187.6,203.9 189.3,203.9 191.1,203.9 192.8,203.9 194.5,203.9 196.3,203.9 198,203.9 200.4,201.8 203.2,203.9 204.9,203.9 206.7,203.9 208.4,203.9 210.1,203.9 212.5,202.9 215.3,203.9 217.1,203.9 218.8,203.9 220.5,203.9 222.3,203.9 224,203.9 225.7,203.9 227.5,203.9 229.2,203.9 230.9,203.9 232.7,203.9 234.4,203.9 236.1,203.9 237.9,203.9 239.6,203.9 241.4,203.9 244.3,201.5 246.6,203.9 248.3,203.9 250,203.9 251.8,203.9 253.5,203.9 256,201.8 258.7,203.9 260.4,203.9 262.2,203.9 263.9,203.9 265.6,203.9 267.4,203.9 270.3,202.3 272.6,203.9 274.3,203.9 276,203.9 277.6,202.9 279.5,203.9 281.2,203.9 283,203.9 284.7,203.9 286.4,203.9 288.2,203.9 289.9,203.9 291.7,203.9 293.4,203.9 295.1,203.9 296.9,203.9 298.6,203.9 300.3,203.9 302.1,203.9 303.8,203.9 306.2,203.4 309,203.9 310.7,203.9 312.5,203.9 314.2,203.9 315.9,203.9 317.7,203.9 319.4,203.9 321.1,203.9 322.9,203.9 324.6,203.9 326.3,203.9 328.1,203.9 329.8,203.9 331.5,203.9 333.3,203.9 335,203.9 336.7,203.9 338.5,203.9 340.2,203.9 342,203.9 343.7,203.9 345.4,203.9 347.2,203.9 348.9,203.9 350.6,203.9 352.9,203.2 355.8,203.9 357.6,203.9 359.3,203.9 361,203.9 362.8,203.9 364.5,203.9 366.2,203.9 368,203.9 369.7,203.9 371.4,203.9 373.2,203.9 374.9,203.9 376.6,203.9 378.4,203.9 380.1,203.9 382.5,201.8 384.7,201.8 387,203.9 388.8,203.9 390.5,203.9 392.3,203.9 394,203.9 396.4,202.9 399.9,202.6 402.7,203.9 404.4,203.9 406.1,203.9 407.9,203.9 409.6,203.9 411.3,203.9 413.1,203.9 414.8,203.9 416.5,203.9 418.3,203.9 420,203.9 421.7,203.9 423.5,203.9 425.2,203.9 426.9,203.9 429.2,203.2 432.1,203.9 433.9,203.9 435.6,203.9 437.3,203.9 439.1,203.9 440.8,203.9 442.5,203.9 444.3,203.9 446,203.9 447.8,203.9 449.5,203.9 451.2,203.9 453,203.9 454.7,203.9 456.4,203.9 458.2,203.9 459.9,203.9 461.6,203.9 463.4,203.9 464.8,203.2 466.8,203.9 468.6,203.9 470.3,203.9 472,203.9 473.8,203.9 475.5,203.9 477.2,203.9 479,203.9 480.7,203.9 482.4,203.9 484.2,203.9 485.9,203.9 487.6,203.9 489.4,203.9 491.1,203.9 492.8,203.9 494.6,203.9 496.3,203.9 498.1,203.9 499.8,203.9 501.5,203.9 503.3,203.9 505,203.9 506.7,203.9 508.5,203.9 510.2,203.9 511.9,203.9 513.7,203.9 515.4,203.9 517.1,203.9 518.9,203.9 521.3,203.4 524.1,203.9 525.8,203.9 527.5,203.9 529.3,203.9 531,203.9 532.7,203.9 534.5,203.9 537.2,203.2 540.4,203.2 543.1,203.9 544.9,203.9 546.6,203.9 548.3,203.4 550.1,203.9 551.8,203.9 553.6,203.9 555.3,203.9 557,203.9 558.8,203.9 560.4,202.9 562.2,203.9 564,203.9 565.7,203.9 567.4,203.9 569.2,203.9 570.9,203.9 572.6,203.9 574.4,203.9 576.1,203.9 577.8,203.9 580.1,203.4 583,203.9 583,204" fill="#f0643a" fill-opacity="0.5"/><polyline points="64.4,203.9 66.2,203.9 67.9,203.9 69.6,203.9 71.4,203.9 73.1,203.9 74.8,203.9 77.5,203.2 80,203.9 81.8,203.9 84.5,202.2 87,203.9 88.7,203.9 90.5,203.9 91.8,202.9 93.9,203.9 95.7,203.9 97.2,203.2 99.1,203.9 100.9,203.9 102.6,203.4 104.3,203.9 106.1,203.9 107.8,203.9 109.5,203.9 112.4,203.4 114.7,203.9 116.5,203.9 117.8,203.2 119.9,203.9 121.7,203.9 123.4,203.9 125.1,203.9 126.9,203.9 128.6,203.9 130.3,203.9 132.1,203.9 133.8,203.9 135.6,203.9 137.3,203.9 139,203.9 140.8,203.9 142.5,203.9 144.2,203.9 146,203.9 147.7,203.9 149.4,203.9 151.2,203.9 152.9,203.9 154.4,201.5 156.4,203.9 158.1,203.9 159.8,203.9 161.6,203.9 163.3,203.9 165,203.9 166.8,203.9 168.5,203.9 170.2,203.9 172,203.9 173.7,203.9 175.4,203.9 177.2,203.9 178.9,203.9 180.6,203.9 182.9,201.5 185.2,201.2 187.6,203.9 189.3,203.9 191.1,203.9 192.8,203.9 194.5,203.9 196.3,203.9 198,203.9 200.4,201.8 203.2,203.9 204.9,203.9 206.7,203.9 208.4,203.9 210.1,203.9 212.5,202.9 215.3,203.9 217.1,203.9 218.8,203.9 220.5,203.9 222.3,203.9 224,203.9 225.7,203.9 227.5,203.9 229.2,203.9 230.9,203.9 232.7,203.9 234.4,203.9 236.1,203.9 237.9,203.9 239.6,203.9 241.4,203.9 244.3,201.5 246.6,203.9 248.3,203.9 250,203.9 251.8,203.9 253.5,203.9 256,201.8 258.7,203.9 260.4,203.9 262.2,203.9 263.9,203.9 265.6,203.9 267.4,203.9 270.3,202.3 272.6,203.9 274.3,203.9 276,203.9 277.6,202.9 279.5,203.9 281.2,203.9 283,203.9 284.7,203.9 286.4,203.9 288.2,203.9 289.9,203.9 291.7,203.9 293.4,203.9 295.1,203.9 296.9,203.9 298.6,203.9 300.3,203.9 302.1,203.9 303.8,203.9 306.2,203.4 309,203.9 310.7,203.9 312.5,203.9 314.2,203.9 315.9,203.9 317.7,203.9 319.4,203.9 321.1,203.9 322.9,203.9 324.6,203.9 326.3,203.9 328.1,203.9 329.8,203.9 331.5,203.9 333.3,203.9 335,203.9 336.7,203.9 338.5,203.9 340.2,203.9 342,203.9 343.7,203.9 345.4,203.9 347.2,203.9 348.9,203.9 350.6,203.9 352.9,203.2 355.8,203.9 357.6,203.9 359.3,203.9 361,203.9 362.8,203.9 364.5,203.9 366.2,203.9 368,203.9 369.7,203.9 371.4,203.9 373.2,203.9 374.9,203.9 376.6,203.9 378.4,203.9 380.1,203.9 382.5,201.8 384.7,201.8 387,203.9 388.8,203.9 390.5,203.9 392.3,203.9 394,203.9 396.4,202.9 399.9,202.6 402.7,203.9 404.4,203.9 406.1,203.9 407.9,203.9 409.6,203.9 411.3,203.9 413.1,203.9 414.8,203.9 416.5,203.9 418.3,203.9 420,203.9 421.7,203.9 423.5,203.9 425.2,203.9 426.9,203.9 429.2,203.2 432.1,203.9 433.9,203.9 435.6,203.9 437.3,203.9 439.1,203.9 440.8,203.9 442.5,203.9 444.3,203.9 446,203.9 447.8,203.9 449.5,203.9 451.2,203.9 453,203.9 454.7,203.9 456.4,203.9 458.2,203.9 459.9,203.9 461.6,203.9 463.4,203.9 464.8,203.2 466.8,203.9 468.6,203.9 470.3,203.9 472,203.9 473.8,203.9 475.5,203.9 477.2,203.9 479,203.9 480.7,203.9 482.4,203.9 484.2,203.9 485.9,203.9 487.6,203.9 489.4,203.9 491.1,203.9 492.8,203.9 494.6,203.9 496.3,203.9 498.1,203.9 499.8,203.9 501.5,203.9 503.3,203.9 505,203.9 506.7,203.9 508.5,203.9 510.2,203.9 511.9,203.9 513.7,203.9 515.4,203.9 517.1,203.9 518.9,203.9 521.3,203.4 524.1,203.9 525.8,203.9 527.5,203.9 529.3,203.9 531,203.9 532.7,203.9 534.5,203.9 537.2,203.2 540.4,203.2 543.1,203.9 544.9,203.9 546.6,203.9 548.3,203.4 550.1,203.9 551.8,203.9 553.6,203.9 555.3,203.9 557,203.9 558.8,203.9 560.4,202.9 562.2,203.9 564,203.9 565.7,203.9 567.4,203.9 569.2,203.9 570.9,203.9 572.6,203.9 574.4,203.9 576.1,203.9 577.8,203.9 580.1,203.4 583,203.9" fill="none" stroke="#f0643a" stroke-width="1" stroke-linejoin="round"/><path d="M64.4 204.0H583" stroke="#1a78ff" stroke-width="1.2" fill="none"/>
<path d="M122.6 27V205.8M247.4 27V205.8M371.7 27V205.8M496.5 27V205.8M64.4 50.2H583M64.4 81.3H583M64.4 111.8H583M64.4 142.3H583M64.4 173.5H583M64.4 204H583" stroke="#62728a" stroke-opacity=".58" stroke-width="1" fill="none"/></g>
<g font-family='"DejaVu Sans", "Liberation Sans", sans-serif' font-size="10.67" fill="#ffffff">
<text x="58.6" y="53.2" text-anchor="end">250 ms</text>
<text x="58.6" y="84.3" text-anchor="end">200 ms</text>
<text x="58.6" y="114.8" text-anchor="end">150 ms</text>
<text x="58.6" y="145.3" text-anchor="end">100 ms</text>
<text x="58.6" y="176.5" text-anchor="end">50 ms</text>
<text x="58.6" y="207" text-anchor="end">0</text>
<text x="122.6" y="217.1" text-anchor="middle">Mon 18:00</text>
<text x="247.4" y="217.1" text-anchor="middle">Tue 00:00</text>
<text x="371.7" y="217.1" text-anchor="middle">Tue 06:00</text>
<text x="496.5" y="217.1" text-anchor="middle">Tue 12:00</text>
</g></svg></div>
<div class="dash" style="left:678px;top:567px;width:592px;height:222px">
<div class="dt ls" style="letter-spacing:2px">I/O-wait</div>
<svg class="cv" width="592" height="222" viewBox="0 0 592 222">
<path d="M65.4 32V192.2M161.3 32V192.2M257 32V192.2M352.6 32V192.2M448.2 32V192.2M544.2 32V192.2M65.4 32H582M65.4 58.7H582M65.4 85.4H582M65.4 112.1H582M65.4 138.8H582M65.4 165.5H582M65.4 192.2H582" stroke="#55606e" stroke-opacity=".7" stroke-width="1" fill="none"/>
<polyline points="66,164.4 68.5,179.2 70.1,172.6 71.7,180.4 73.2,175.9 74.8,172.3 76.4,179.7 78,175.4 79.5,174.9 81.1,180.1 82.7,177 84.1,169.8 85.8,176.3 87.4,173.9 88.9,179 90.5,178.3 92.1,179.4 93.7,175.9 95.2,172.1 96.8,175.1 98.4,173.4 100,153.8 101.5,173.7 103.1,179.5 104.6,177.8 106.2,174.3 107.8,173.9 109.4,176.6 110.9,179.7 112.5,178 114.1,178.5 115.6,177.9 117.2,173.1 118.8,178.6 120.3,172.4 121.9,172.5 123.5,180 125.1,177 126.6,176 128.2,180.2 129.8,176.6 131.3,172.2 133.4,165.5 136.1,179.4 137.6,175.2 139.2,172.3 140.8,178.6 142.3,180.4 143.9,179.7 145.5,175.6 147,180.3 149.3,167.6 151.8,172.1 153.3,176.6 154.9,176.8 156.5,174.7 158,179.6 159.6,175.2 161.2,178.9 162.7,174.9 165.2,163.4 167.5,175.4 169,174.9 170.6,179.1 172.2,178 173.7,171.4 175.3,171.4 176.9,179.4 178.4,174 180,171.8 181.6,178.3 183.2,174.9 184.7,180.1 186.3,177.1 187.9,174.3 189.4,175.1 191,173.4 192.6,179.7 194.1,177.3 195.7,172.6 197.3,175.1 198.9,176.4 200.4,176.8 202,171.5 203.6,175.2 205.1,180.3 206.7,173.2 208.3,177.5 209.9,176.5 211.4,178.5 213,176.4 214.6,177.5 216.1,179.6 217.7,174.7 219.3,179.5 220.8,173.3 222.4,180.2 224,173.4 225.6,173.1 227.1,175.9 228.7,174 230.3,178.2 231.8,173.8 233.4,176.6 235,178.4 236.5,171.7 238.1,176.8 239.7,177.1 241.3,172.6 242.8,177.1 244.4,174.4 246,178.9 247.5,172.8 249.3,168.7 250.7,180 252.2,171.6 253.8,178.9 255.4,171.9 257,171.5 258.5,174.9 260.1,180.3 261.7,179.9 263.2,178.6 264.8,176.9 265.9,174 267.1,130.3 267.9,171.7 268.7,131.3 269.2,173 269.7,170.8 270.6,74.7 271.9,96.1 272.9,174 274.2,179.2 275.8,179.7 277.4,175.4 278.9,174.1 281.1,166.6 283.7,174.1 285.2,173.5 286.8,177 288.4,172.4 289.9,178.9 291.5,174 293.1,173.4 294.6,172.5 296.2,176 297.6,169.8 299.4,180 300.9,175.7 302.5,178.9 304.1,174.7 305.6,179.7 307.2,173.4 308.8,178.4 310.3,180.3 311.9,178.9 313.5,176.3 315.1,175.4 316.6,176.9 318.2,178.9 319.8,176.1 321.3,171.9 322.9,175.6 324.5,171.9 326,180.2 327.6,171.4 329.2,172.4 330.8,175.5 332.3,175.7 333.9,175.6 335.5,172.2 338.3,168.7 340.2,175.5 341.7,177.7 343.3,173.9 344.9,173.9 346.5,179.5 348,174.1 349.6,176.3 351.2,176 352.7,174.7 354.3,180 355.9,175 357.5,177.1 359,172.5 360.6,178.4 363.1,169.8 365.3,174.8 366.9,172.5 368.4,180.1 370,175 371.6,174.9 373.2,174.3 374.7,176.8 376.3,179.8 377.9,178.7 379.4,174.9 381,178.8 382.6,179.9 384.1,177.2 385.7,176.2 387.3,175.6 388.9,180.2 390.4,173.4 392,177.4 393.6,173.3 395.5,168.7 398.3,175.1 399.8,171.6 401.4,171.5 403,172.9 404.6,179.5 406.1,177.3 407.7,178.4 409.3,173.4 411.4,168.7 414,179.4 415.5,179.4 417.1,171.9 418.7,171.6 420.3,177.1 421.8,173.7 423.4,176.2 425,175.7 426.5,177.1 428.9,166.6 431.3,178.1 432.8,175.8 434.4,178.7 436,176.5 437.5,171.9 439.1,180.3 440.7,179.5 442.2,173.2 444.4,169.8 447,172.7 448.5,175 450.1,178.4 451.7,179.9 453.2,178 454.8,177.7 456.4,173.2 457.9,171.6 459.5,173.3 461.1,172.3 462.7,172 464.2,172.5 465.8,172.1 467.4,171.7 470.2,167.6 472.1,178.2 473.6,175 475.2,176 476.8,177.3 478.4,172.9 479.9,176.8 481.5,178.6 483.1,177.9 484.6,176.3 486.2,174.9 487.8,175.3 489.3,176.5 490.9,178.8 493.4,169.8 495.6,178.9 497.2,175.5 498.8,178.7 500.3,174 501.9,174.5 503.5,179.2 505.1,174.8 506.6,177.4 508.2,176.4 509.9,169.8 511.3,173.5 512.9,172.4 514.5,173.8 516,178.5 517.6,175.5 519.2,177.4 520.8,180.3 522.3,175.4 523.9,176.2 525.8,158 527,177.5 528.6,172.9 530.2,175.8 531.7,179.6 534,149.5 536.5,175.6 538,179.8 539.6,180.4 542.3,168.7 544.3,179.1 545.9,179 547.4,179.6 549,173 550.6,171.4 552.2,174.6 553.7,176.9 555.3,172.4 556.9,175.9 559.1,171.9 561.6,177.2 563.1,178 564.7,177.5 566.3,177 567.9,178.8 569.4,174.9 571,172.6 572.6,175.3 574.1,180.4 575.7,174.2 577.3,180.3 578.9,176.1 580.4,172.6 582,174.3" fill="none" stroke="#3cc2ff" stroke-width="1.9" stroke-linejoin="round"/>
<g font-family='"DejaVu Sans", "Liberation Sans", sans-serif' font-size="12" fill="#ffffff" letter-spacing=".5">
<text x="55.5" y="36.2" text-anchor="end">1.50%</text>
<text x="55.5" y="89.6" text-anchor="end">1%</text>
<text x="55.5" y="143" text-anchor="end">0.50%</text>
<text x="55.5" y="196.4" text-anchor="end">0%</text>
<text x="65.4" y="210" text-anchor="middle">03-29</text>
<text x="161.3" y="210" text-anchor="middle">03:00</text>
<text x="257" y="210" text-anchor="middle">06:00</text>
<text x="352.6" y="210" text-anchor="middle">09:00</text>
<text x="448.2" y="210" text-anchor="middle">12:00</text>
<text x="544.2" y="210" text-anchor="middle">15:00</text>
</g>
<rect x="470" y="25" width="112" height="46" fill="#20282f"/>
<g font-family='"Liberation Sans", Arial, sans-serif' font-size="12" fill="#ffffff" letter-spacing=".75">
<circle cx="479.3" cy="33.5" r="3" fill="#1d6fc4"/><text x="485.5" y="36.2">Mean I/O-wait</text>
<circle cx="479.3" cy="47.5" r="3" fill="#38b6ff"/><text x="485.5" y="50.2">Median I/O-wait</text>
<circle cx="479.3" cy="61.5" r="3" fill="#1fb7c9"/><text x="485.5" y="64.2">I/O-wait by host</text>
</g></svg></div>
<div class="dash" style="left:1278px;top:567px;width:592px;height:222px">
<div class="dt" style="padding-left:8px;letter-spacing:0.27px">Apache Requests</div>
<svg class="cv" width="592" height="222" viewBox="0 0 592 222">
<g transform="translate(0 0)">
<polygon points="64.4,204.9 64.4,175.7 65.7,160.9 67,146.6 67,147 68.3,158.4 68.9,163.2 69.6,173.5 70.9,191.6 71.4,198.7 72.2,199.7 73.5,201.5 74.8,203.3 75.2,203.9 76.1,203.9 77.4,204.1 78.7,204.2 80,204.3 81.3,204.4 82.6,204.6 83.9,204.7 85.2,204.8 86,204.9 86.5,203.7 87.8,200.2 87.9,199.7 89.1,202.8 89.9,204.9 90.4,204.9 91.7,204.9 93,204.9 94.3,204.9 95.6,204.9 96.9,204.9 97.8,204.9 98.1,197.3 99.4,168.9 100.7,140.6 101.6,121.6 102,122.2 103.3,123.9 104.6,125.6 104.8,125.8 105.9,163.1 107,198.7 107.2,198.2 108.5,195.4 108.9,194.5 109.8,170.9 110.5,152.8 111.1,151.2 112.1,148.7 112.4,154.8 113.7,180.3 114,186.2 115,158.8 115.9,134.1 116.3,134.4 117.6,135.5 118.4,136.2 118.9,133.3 120.2,124.8 120.7,121.6 121.5,156.7 122.3,190.3 122.8,171.6 124.1,124.9 124.2,121.6 125.4,120.6 126.7,119.5 126.7,119.5 128,124.7 129.3,129.9 129.3,129.9 130.6,125.6 131.8,121.6 131.9,120.8 133.2,104.9 134.3,90.4 134.4,92.4 135.7,115.5 136.6,129.9 137,124.2 138.3,108.7 139.6,93.3 140.1,88.3 140.9,107.5 142,129.9 142.2,129.5 143.5,127.4 144.5,125.8 144.8,126.6 146.1,130 147.4,133.4 147.7,134.1 148.7,136.8 150,140.2 150.9,142.4 151.3,152.2 152.6,180.5 152.8,184.1 153.9,165.5 154.7,152.8 155.2,153.7 155.9,154.9 156.5,169.4 157.8,203.4 157.8,204.9 159.1,194.1 159.8,188.2 160.4,174.9 161,161.2 161.7,173.3 162.9,196.6 163,196.4 164.3,191.6 165.2,188.2 165.6,180.9 166.9,157.8 167.4,148.7 168.2,146.3 169.5,142.4 170.8,138.5 171.5,136.2 172,134.8 173.3,131.5 174.6,128.3 175.6,125.8 175.9,121.6 177.2,103.5 178.2,90.4 178.5,98 179.8,126.4 180.1,132 181.1,117.3 182,104.9 182.4,110.6 183.7,127.6 183.9,129.9 185,119 186.3,106.2 186.4,104.9 187.6,119 188.3,127.8 188.9,123.7 190.2,114.2 190.9,109.1 191.5,115.7 192.8,129.9 192.8,129.9 194.1,122.5 195.3,115.4 195.4,115.6 196.7,120.9 197.9,125.8 198,125.4 199.3,120 200.4,115.4 200.6,118.3 201.9,143.8 202.3,152.8 203.2,174.8 204.2,202.8 204.5,202.9 205.8,203.3 207.1,203.7 208.4,204 209.6,204.4 210.9,204.8 211.2,204.9 212.2,201.6 213.5,197.3 214.4,194.5 214.8,194.5 216.1,194.5 216.9,194.5 217.4,184.9 218.7,159.4 219.2,150.8 220,146 221.3,138.7 221.4,138.3 222.6,140.9 223.3,142.4 223.9,152.5 224.6,163.2 225.2,154.9 226.5,137.9 227.1,129.9 227.8,129 229.1,127.3 230.3,125.8 230.4,125.8 231.7,126.7 233,127.5 233.5,127.8 234.3,131.6 235.6,137.6 236.6,142.4 236.9,144.3 238.2,154.5 239.5,164.7 239.8,167.4 240.8,178.8 241.7,190.3 242.1,190.6 243.4,191.7 244.3,192.4 244.7,195 245.9,203.5 246.2,204.9 247.2,202.5 248.5,199.7 249.8,196.9 250.9,194.5 251.1,191.3 252.4,170.5 253.7,149.7 253.8,148.7 255,144.6 256.3,140.4 257,138.3 257.6,149.5 258.9,171.6 258.9,171 260.2,148.7 261.4,127.8 261.5,127.8 262.8,127.8 263,127.8 264.1,172.2 264.6,192.4 265.4,195.5 266.7,200.6 267.8,204.9 268,204.9 269.3,204.9 270.6,204.9 271.6,204.9 271.9,204.1 273.2,200.7 273.2,200.7 274.5,203.2 275.4,204.9 275.8,204.9 277.1,204.9 278.4,204.9 279.7,204.9 281,204.9 281.8,204.9 282.3,204.1 283.5,202 283.7,201.8 284.8,203.7 285.6,204.9 286.1,204.9 287.4,204.9 288.7,204.9 289.1,204.9 290,199.8 290.6,196.6 291.3,198.3 292.2,200.7 292.6,190.1 293.8,157 293.9,157.1 295.2,158.5 295.7,159.1 296.5,166.8 297.6,177.8 297.8,174.3 299.1,147.4 299.5,138.3 300.4,134 301.7,127.7 302.1,125.8 303,121 304.3,114.2 305.3,109.1 305.6,112.6 306.9,126.8 307.2,129.9 308.2,122.5 309.5,112.9 309.7,111.2 310.8,119.3 311.6,125.8 312.1,121.3 313.4,108.6 313.5,107 314.7,109.5 315.4,111.2 316,119.9 317.3,141.1 317.3,142.4 318.6,200.2 318.6,202.8 319.8,203.1 321.1,203.3 322.4,203.6 323.7,203.9 325,204.1 326.3,204.4 327.6,204.7 328.8,204.9 328.9,204.9 330.2,204.9 331.5,204.9 332.8,204.9 334.1,204.9 335.4,204.9 336.7,204.9 338,204.9 339.3,204.9 340.6,204.9 341.9,204.9 343.2,204.9 344.5,204.9 345.8,204.9 347.1,204.9 348.4,204.9 349.7,204.9 351,204.9 352.3,204.9 353.6,204.9 354.2,204.9 354.9,204.2 356.2,203 357.4,201.8 357.4,201.8 358.7,201.8 360,201.8 361.3,201.8 362.6,201.8 363.1,201.8 363.9,166.3 365,121.6 365.2,131.3 366.5,185.1 366.9,200.7 367.8,201 369.1,201.5 370.1,201.8 370.4,202.1 371.7,203.4 373,204.7 373.3,204.9 374.3,204.9 375.6,204.9 376.9,204.9 378.2,204.9 379.5,204.9 380.8,204.9 382.1,204.9 383.4,204.9 384.7,204.9 386,204.9 387.3,204.9 387.6,204.9 388.6,203.6 389.1,202.8 389.9,202.8 391.2,202.8 392.5,202.8 393.8,202.8 395,202.8 396.3,202.8 397.1,202.8 397.6,203.5 398.7,204.9 398.9,204.9 400.2,204.9 401.5,204.9 402.5,204.9 402.8,204.2 404.1,201.3 404.4,200.7 405.4,200.7 406.7,200.7 407.6,200.7 408,201.7 409.3,204.5 409.5,204.9 410.6,204.9 411.9,204.9 413.2,204.9 414.5,204.9 415.8,204.9 417.1,204.9 418.4,204.9 419.7,204.9 421,204.9 422.3,204.9 423.6,204.9 424.9,204.9 426.2,204.9 427.5,204.9 428.8,204.9 428.9,204.9 430.1,192.3 430.4,188.2 431.3,169.6 432.6,142.9 432.7,142.4 433.9,146.6 434.6,148.7 435.2,157.4 436.2,169.5 436.5,167.1 437.8,159.1 437.8,159.5 439.1,166.8 440,171.6 440.4,173.1 441.7,177.3 441.9,177.8 443,189 444.3,201.8 444.4,202.8 445.6,203.8 446.9,204.9 447,204.9 448.2,204.9 449.5,204.9 450.8,204.9 452.1,204.9 453.4,204.9 454.7,204.9 456,204.9 457.3,204.9 458.6,204.9 459.9,204.9 461.2,204.9 462.5,204.9 463.8,204.9 465.1,204.9 466.4,204.9 467.7,204.9 468.9,204.9 470.2,204.9 471.5,204.9 472.8,204.9 474.1,204.9 475.4,204.9 476.7,204.9 478,204.9 479.3,204.9 480.6,204.9 481.9,204.9 483.2,204.9 484.5,204.9 485.8,204.9 487.1,204.9 488.4,204.9 489.7,204.9 491,204.9 492.3,204.9 493.6,204.9 494.9,204.9 495.6,204.9 496.2,204.1 497.5,202.2 497.8,201.8 498.8,203.4 499.7,204.9 500.1,204.9 501.4,204.9 502.7,204.9 504,204.9 505.3,204.9 506.5,204.9 507.8,204.9 509.1,204.9 510.4,204.9 511.7,204.9 513,204.9 513,204.9 514.3,203.2 515,202.4 515.6,203.3 516.9,204.9 516.9,204.9 518.2,204.9 519.5,204.9 520.8,204.9 521,204.9 521.9,202.4 522.1,202.4 523.4,202.4 524.7,202.4 526,202.4 526.4,202.4 527.3,204.2 527.7,204.9 528.6,204.9 529.9,204.9 531.2,204.9 531.5,204.9 532.5,191.8 533.1,184.1 533.8,159 534.7,127.8 535.1,128.4 536.2,129.9 536.4,135.5 537.7,193.3 537.8,200.7 539,198.3 539.7,196.6 540.3,179.5 541.6,137.1 541.6,134.1 542.8,156.2 543.2,163.2 544.1,142.9 544.8,127.8 545.4,124.6 546.7,117.8 548,111.2 548,111.6 549.3,124.3 549.9,129.9 550.6,157.6 551.8,202.8 551.9,202.9 553.2,203.2 554.5,203.6 555.8,204 557.1,204.3 558.4,204.7 559.1,204.9 559.7,199.4 561,187.3 561.3,184.1 562.3,161.1 563.2,138.3 563.6,136.8 564.9,131.5 565.8,127.8 566.2,127.8 567.4,127.8 567.5,131.8 568.8,181.1 569,188.2 570.1,197.9 570.9,204.9 571.4,204.9 572.7,204.9 574,204.9 574.7,204.9 575.3,195.4 576,184.1 576.6,164.3 577.9,121.8 577.9,121.6 579.2,131.5 579.8,136.2 580.4,132.6 581.4,127.8 581.7,99.3 582.6,34.1 583,34.1 583.3,34.1 583.3,204.9" fill="#3f7288" fill-opacity="0.6"/><polyline points="64.4,175.7 65.7,160.9 67,146.6 67,147 68.3,158.4 68.9,163.2 69.6,173.5 70.9,191.6 71.4,198.7 72.2,199.7 73.5,201.5 74.8,203.3 75.2,203.9 76.1,203.9 77.4,204.1 78.7,204.2 80,204.3 81.3,204.4 82.6,204.6 83.9,204.7 85.2,204.8 86,204.9 86.5,203.7 87.8,200.2 87.9,199.7 89.1,202.8 89.9,204.9 90.4,204.9 91.7,204.9 93,204.9 94.3,204.9 95.6,204.9 96.9,204.9 97.8,204.9 98.1,197.3 99.4,168.9 100.7,140.6 101.6,121.6 102,122.2 103.3,123.9 104.6,125.6 104.8,125.8 105.9,163.1 107,198.7 107.2,198.2 108.5,195.4 108.9,194.5 109.8,170.9 110.5,152.8 111.1,151.2 112.1,148.7 112.4,154.8 113.7,180.3 114,186.2 115,158.8 115.9,134.1 116.3,134.4 117.6,135.5 118.4,136.2 118.9,133.3 120.2,124.8 120.7,121.6 121.5,156.7 122.3,190.3 122.8,171.6 124.1,124.9 124.2,121.6 125.4,120.6 126.7,119.5 126.7,119.5 128,124.7 129.3,129.9 129.3,129.9 130.6,125.6 131.8,121.6 131.9,120.8 133.2,104.9 134.3,90.4 134.4,92.4 135.7,115.5 136.6,129.9 137,124.2 138.3,108.7 139.6,93.3 140.1,88.3 140.9,107.5 142,129.9 142.2,129.5 143.5,127.4 144.5,125.8 144.8,126.6 146.1,130 147.4,133.4 147.7,134.1 148.7,136.8 150,140.2 150.9,142.4 151.3,152.2 152.6,180.5 152.8,184.1 153.9,165.5 154.7,152.8 155.2,153.7 155.9,154.9 156.5,169.4 157.8,203.4 157.8,204.9 159.1,194.1 159.8,188.2 160.4,174.9 161,161.2 161.7,173.3 162.9,196.6 163,196.4 164.3,191.6 165.2,188.2 165.6,180.9 166.9,157.8 167.4,148.7 168.2,146.3 169.5,142.4 170.8,138.5 171.5,136.2 172,134.8 173.3,131.5 174.6,128.3 175.6,125.8 175.9,121.6 177.2,103.5 178.2,90.4 178.5,98 179.8,126.4 180.1,132 181.1,117.3 182,104.9 182.4,110.6 183.7,127.6 183.9,129.9 185,119 186.3,106.2 186.4,104.9 187.6,119 188.3,127.8 188.9,123.7 190.2,114.2 190.9,109.1 191.5,115.7 192.8,129.9 192.8,129.9 194.1,122.5 195.3,115.4 195.4,115.6 196.7,120.9 197.9,125.8 198,125.4 199.3,120 200.4,115.4 200.6,118.3 201.9,143.8 202.3,152.8 203.2,174.8 204.2,202.8 204.5,202.9 205.8,203.3 207.1,203.7 208.4,204 209.6,204.4 210.9,204.8 211.2,204.9 212.2,201.6 213.5,197.3 214.4,194.5 214.8,194.5 216.1,194.5 216.9,194.5 217.4,184.9 218.7,159.4 219.2,150.8 220,146 221.3,138.7 221.4,138.3 222.6,140.9 223.3,142.4 223.9,152.5 224.6,163.2 225.2,154.9 226.5,137.9 227.1,129.9 227.8,129 229.1,127.3 230.3,125.8 230.4,125.8 231.7,126.7 233,127.5 233.5,127.8 234.3,131.6 235.6,137.6 236.6,142.4 236.9,144.3 238.2,154.5 239.5,164.7 239.8,167.4 240.8,178.8 241.7,190.3 242.1,190.6 243.4,191.7 244.3,192.4 244.7,195 245.9,203.5 246.2,204.9 247.2,202.5 248.5,199.7 249.8,196.9 250.9,194.5 251.1,191.3 252.4,170.5 253.7,149.7 253.8,148.7 255,144.6 256.3,140.4 257,138.3 257.6,149.5 258.9,171.6 258.9,171 260.2,148.7 261.4,127.8 261.5,127.8 262.8,127.8 263,127.8 264.1,172.2 264.6,192.4 265.4,195.5 266.7,200.6 267.8,204.9 268,204.9 269.3,204.9 270.6,204.9 271.6,204.9 271.9,204.1 273.2,200.7 273.2,200.7 274.5,203.2 275.4,204.9 275.8,204.9 277.1,204.9 278.4,204.9 279.7,204.9 281,204.9 281.8,204.9 282.3,204.1 283.5,202 283.7,201.8 284.8,203.7 285.6,204.9 286.1,204.9 287.4,204.9 288.7,204.9 289.1,204.9 290,199.8 290.6,196.6 291.3,198.3 292.2,200.7 292.6,190.1 293.8,157 293.9,157.1 295.2,158.5 295.7,159.1 296.5,166.8 297.6,177.8 297.8,174.3 299.1,147.4 299.5,138.3 300.4,134 301.7,127.7 302.1,125.8 303,121 304.3,114.2 305.3,109.1 305.6,112.6 306.9,126.8 307.2,129.9 308.2,122.5 309.5,112.9 309.7,111.2 310.8,119.3 311.6,125.8 312.1,121.3 313.4,108.6 313.5,107 314.7,109.5 315.4,111.2 316,119.9 317.3,141.1 317.3,142.4 318.6,200.2 318.6,202.8 319.8,203.1 321.1,203.3 322.4,203.6 323.7,203.9 325,204.1 326.3,204.4 327.6,204.7 328.8,204.9 328.9,204.9 330.2,204.9 331.5,204.9 332.8,204.9 334.1,204.9 335.4,204.9 336.7,204.9 338,204.9 339.3,204.9 340.6,204.9 341.9,204.9 343.2,204.9 344.5,204.9 345.8,204.9 347.1,204.9 348.4,204.9 349.7,204.9 351,204.9 352.3,204.9 353.6,204.9 354.2,204.9 354.9,204.2 356.2,203 357.4,201.8 357.4,201.8 358.7,201.8 360,201.8 361.3,201.8 362.6,201.8 363.1,201.8 363.9,166.3 365,121.6 365.2,131.3 366.5,185.1 366.9,200.7 367.8,201 369.1,201.5 370.1,201.8 370.4,202.1 371.7,203.4 373,204.7 373.3,204.9 374.3,204.9 375.6,204.9 376.9,204.9 378.2,204.9 379.5,204.9 380.8,204.9 382.1,204.9 383.4,204.9 384.7,204.9 386,204.9 387.3,204.9 387.6,204.9 388.6,203.6 389.1,202.8 389.9,202.8 391.2,202.8 392.5,202.8 393.8,202.8 395,202.8 396.3,202.8 397.1,202.8 397.6,203.5 398.7,204.9 398.9,204.9 400.2,204.9 401.5,204.9 402.5,204.9 402.8,204.2 404.1,201.3 404.4,200.7 405.4,200.7 406.7,200.7 407.6,200.7 408,201.7 409.3,204.5 409.5,204.9 410.6,204.9 411.9,204.9 413.2,204.9 414.5,204.9 415.8,204.9 417.1,204.9 418.4,204.9 419.7,204.9 421,204.9 422.3,204.9 423.6,204.9 424.9,204.9 426.2,204.9 427.5,204.9 428.8,204.9 428.9,204.9 430.1,192.3 430.4,188.2 431.3,169.6 432.6,142.9 432.7,142.4 433.9,146.6 434.6,148.7 435.2,157.4 436.2,169.5 436.5,167.1 437.8,159.1 437.8,159.5 439.1,166.8 440,171.6 440.4,173.1 441.7,177.3 441.9,177.8 443,189 444.3,201.8 444.4,202.8 445.6,203.8 446.9,204.9 447,204.9 448.2,204.9 449.5,204.9 450.8,204.9 452.1,204.9 453.4,204.9 454.7,204.9 456,204.9 457.3,204.9 458.6,204.9 459.9,204.9 461.2,204.9 462.5,204.9 463.8,204.9 465.1,204.9 466.4,204.9 467.7,204.9 468.9,204.9 470.2,204.9 471.5,204.9 472.8,204.9 474.1,204.9 475.4,204.9 476.7,204.9 478,204.9 479.3,204.9 480.6,204.9 481.9,204.9 483.2,204.9 484.5,204.9 485.8,204.9 487.1,204.9 488.4,204.9 489.7,204.9 491,204.9 492.3,204.9 493.6,204.9 494.9,204.9 495.6,204.9 496.2,204.1 497.5,202.2 497.8,201.8 498.8,203.4 499.7,204.9 500.1,204.9 501.4,204.9 502.7,204.9 504,204.9 505.3,204.9 506.5,204.9 507.8,204.9 509.1,204.9 510.4,204.9 511.7,204.9 513,204.9 513,204.9 514.3,203.2 515,202.4 515.6,203.3 516.9,204.9 516.9,204.9 518.2,204.9 519.5,204.9 520.8,204.9 521,204.9 521.9,202.4 522.1,202.4 523.4,202.4 524.7,202.4 526,202.4 526.4,202.4 527.3,204.2 527.7,204.9 528.6,204.9 529.9,204.9 531.2,204.9 531.5,204.9 532.5,191.8 533.1,184.1 533.8,159 534.7,127.8 535.1,128.4 536.2,129.9 536.4,135.5 537.7,193.3 537.8,200.7 539,198.3 539.7,196.6 540.3,179.5 541.6,137.1 541.6,134.1 542.8,156.2 543.2,163.2 544.1,142.9 544.8,127.8 545.4,124.6 546.7,117.8 548,111.2 548,111.6 549.3,124.3 549.9,129.9 550.6,157.6 551.8,202.8 551.9,202.9 553.2,203.2 554.5,203.6 555.8,204 557.1,204.3 558.4,204.7 559.1,204.9 559.7,199.4 561,187.3 561.3,184.1 562.3,161.1 563.2,138.3 563.6,136.8 564.9,131.5 565.8,127.8 566.2,127.8 567.4,127.8 567.5,131.8 568.8,181.1 569,188.2 570.1,197.9 570.9,204.9 571.4,204.9 572.7,204.9 574,204.9 574.7,204.9 575.3,195.4 576,184.1 576.6,164.3 577.9,121.8 577.9,121.6 579.2,131.5 579.8,136.2 580.4,132.6 581.4,127.8 581.7,99.3 582.6,34.1 583,34.1 583.3,34.1" fill="none" stroke="#5fe3f5" stroke-width="1" stroke-linejoin="round"/><polyline points="64.4,177.8 65.7,164 67,150.7 67,151.1 68.3,161.6 68.9,166.2 69.6,175.7 70.9,191.6 71.4,198.7 72.2,199.7 73.5,201.5 74.8,203.3 75.2,203.9 76.1,203.9 77.4,204.1 78.7,204.2 80,204.3 81.3,204.4 82.6,204.6 83.9,204.7 85.2,204.8 86,204.9 86.5,203.7 87.8,200.2 87.9,199.7 89.1,202.8 89.9,204.9 90.4,204.9 91.7,204.9 93,204.9 94.3,204.9 95.6,204.9 96.9,204.9 97.8,204.9 98.1,197.3 99.4,171.5 100.7,145.1 101.6,127.4 102,128 103.3,129.5 104.6,131.1 104.8,131.3 105.9,166 107,198.7 107.2,198.2 108.5,195.4 108.9,194.5 109.8,173.3 110.5,156.5 111.1,155 112.1,152.6 112.4,158.3 113.7,182.1 114,186.2 115,162.1 115.9,139.1 116.3,139.3 117.6,140.3 118.4,141 118.9,138.3 120.2,130.4 120.7,127.4 121.5,160.1 122.3,190.3 122.8,173.9 124.1,130.5 124.2,127.4 125.4,126.5 126.7,125.5 126.7,125.5 128,130.3 129.3,135.2 129.3,135.1 130.6,131.2 131.8,127.4 131.9,126.7 133.2,111.9 134.3,98.4 134.4,100.3 135.7,121.7 136.6,135.2 137,129.8 138.3,115.4 139.6,101.1 140.1,96.4 140.9,114.3 142,135.2 142.2,134.8 143.5,132.8 144.5,131.3 144.8,132.1 146.1,135.2 147.4,138.4 147.7,139.1 148.7,141.6 150,144.7 150.9,146.8 151.3,155.9 152.6,182.2 152.8,184.1 153.9,168.2 154.7,156.5 155.2,157.3 155.9,158.4 156.5,171.8 157.8,203.4 157.8,204.9 159.1,194.1 159.8,188.2 160.4,177 161,164.2 161.7,175.5 162.9,196.6 163,196.4 164.3,191.6 165.2,188.2 165.6,182.6 166.9,161.1 167.4,152.6 168.2,150.4 169.5,146.8 170.8,143.1 171.5,141 172,139.7 173.3,136.7 174.6,133.6 175.6,131.3 175.9,127.4 177.2,110.6 178.2,98.4 178.5,105.5 179.8,131.9 180.1,137.1 181.1,123.4 182,111.9 182.4,117.2 183.7,133 183.9,135.2 185,125 186.3,113.1 186.4,111.9 187.6,125 188.3,133.2 188.9,129.4 190.2,120.5 190.9,115.8 191.5,122 192.8,135.2 192.8,135.2 194.1,128.3 195.3,121.6 195.4,121.8 196.7,126.7 197.9,131.3 198,130.9 199.3,126 200.4,121.6 200.6,124.4 201.9,148.1 202.3,156.5 203.2,176.9 204.2,202.8 204.5,202.9 205.8,203.3 207.1,203.7 208.4,204 209.6,204.4 210.9,204.8 211.2,204.9 212.2,201.6 213.5,197.3 214.4,194.5 214.8,194.5 216.1,194.5 216.9,194.5 217.4,184.9 218.7,162.6 219.2,154.5 220,150.1 221.3,143.3 221.4,142.9 222.6,145.4 223.3,146.8 223.9,156.2 224.6,166.2 225.2,158.4 226.5,142.6 227.1,135.2 227.8,134.3 229.1,132.8 230.3,131.3 230.4,131.4 231.7,132.2 233,133 233.5,133.2 234.3,136.7 235.6,142.3 236.6,146.8 236.9,148.5 238.2,158 239.5,167.5 239.8,170 240.8,180.6 241.7,190.3 242.1,190.6 243.4,191.7 244.3,192.4 244.7,195 245.9,203.5 246.2,204.9 247.2,202.5 248.5,199.7 249.8,196.9 250.9,194.5 251.1,191.3 252.4,172.9 253.7,153.6 253.8,152.6 255,148.9 256.3,144.9 257,142.9 257.6,153.4 258.9,173.9 258.9,173.3 260.2,152.6 261.4,133.2 261.5,133.2 262.8,133.2 263,133.2 264.1,174.5 264.6,192.4 265.4,195.5 266.7,200.6 267.8,204.9 268,204.9 269.3,204.9 270.6,204.9 271.6,204.9 271.9,204.1 273.2,200.7 273.2,200.7 274.5,203.2 275.4,204.9 275.8,204.9 277.1,204.9 278.4,204.9 279.7,204.9 281,204.9 281.8,204.9 282.3,204.1 283.5,202 283.7,201.8 284.8,203.7 285.6,204.9 286.1,204.9 287.4,204.9 288.7,204.9 289.1,204.9 290,199.8 290.6,196.6 291.3,198.3 292.2,200.7 292.6,190.1 293.8,160.4 293.9,160.4 295.2,161.8 295.7,162.3 296.5,169.4 297.6,179.7 297.8,176.4 299.1,151.4 299.5,142.9 300.4,139 301.7,133.1 302.1,131.3 303,126.9 304.3,120.6 305.3,115.8 305.6,119.1 306.9,132.3 307.2,135.2 308.2,128.2 309.5,119.4 309.7,117.7 310.8,125.3 311.6,131.3 312.1,127.2 313.4,115.3 313.5,113.9 314.7,116.2 315.4,117.7 316,125.8 317.3,145.6 317.3,146.8 318.6,200.2 318.6,202.8 319.8,203.1 321.1,203.3 322.4,203.6 323.7,203.9 325,204.1 326.3,204.4 327.6,204.7 328.8,204.9 328.9,204.9 330.2,204.9 331.5,204.9 332.8,204.9 334.1,204.9 335.4,204.9 336.7,204.9 338,204.9 339.3,204.9 340.6,204.9 341.9,204.9 343.2,204.9 344.5,204.9 345.8,204.9 347.1,204.9 348.4,204.9 349.7,204.9 351,204.9 352.3,204.9 353.6,204.9 354.2,204.9 354.9,204.2 356.2,203 357.4,201.8 357.4,201.8 358.7,201.8 360,201.8 361.3,201.8 362.6,201.8 363.1,201.8 363.9,169 365,127.4 365.2,136.4 366.5,185.1 366.9,200.7 367.8,201 369.1,201.5 370.1,201.8 370.4,202.1 371.7,203.4 373,204.7 373.3,204.9 374.3,204.9 375.6,204.9 376.9,204.9 378.2,204.9 379.5,204.9 380.8,204.9 382.1,204.9 383.4,204.9 384.7,204.9 386,204.9 387.3,204.9 387.6,204.9 388.6,203.6 389.1,202.8 389.9,202.8 391.2,202.8 392.5,202.8 393.8,202.8 395,202.8 396.3,202.8 397.1,202.8 397.6,203.5 398.7,204.9 398.9,204.9 400.2,204.9 401.5,204.9 402.5,204.9 402.8,204.2 404.1,201.3 404.4,200.7 405.4,200.7 406.7,200.7 407.6,200.7 408,201.7 409.3,204.5 409.5,204.9 410.6,204.9 411.9,204.9 413.2,204.9 414.5,204.9 415.8,204.9 417.1,204.9 418.4,204.9 419.7,204.9 421,204.9 422.3,204.9 423.6,204.9 424.9,204.9 426.2,204.9 427.5,204.9 428.8,204.9 428.9,204.9 430.1,192.3 430.4,188.2 431.3,172 432.6,147.2 432.7,146.8 433.9,150.7 434.6,152.6 435.2,160.7 436.2,172 436.5,169.7 437.8,162.3 437.8,162.7 439.1,169.5 440,173.9 440.4,175.3 441.7,179.2 441.9,179.7 443,189 444.3,201.8 444.4,202.8 445.6,203.8 446.9,204.9 447,204.9 448.2,204.9 449.5,204.9 450.8,204.9 452.1,204.9 453.4,204.9 454.7,204.9 456,204.9 457.3,204.9 458.6,204.9 459.9,204.9 461.2,204.9 462.5,204.9 463.8,204.9 465.1,204.9 466.4,204.9 467.7,204.9 468.9,204.9 470.2,204.9 471.5,204.9 472.8,204.9 474.1,204.9 475.4,204.9 476.7,204.9 478,204.9 479.3,204.9 480.6,204.9 481.9,204.9 483.2,204.9 484.5,204.9 485.8,204.9 487.1,204.9 488.4,204.9 489.7,204.9 491,204.9 492.3,204.9 493.6,204.9 494.9,204.9 495.6,204.9 496.2,204.1 497.5,202.2 497.8,201.8 498.8,203.4 499.7,204.9 500.1,204.9 501.4,204.9 502.7,204.9 504,204.9 505.3,204.9 506.5,204.9 507.8,204.9 509.1,204.9 510.4,204.9 511.7,204.9 513,204.9 513,204.9 514.3,203.2 515,202.4 515.6,203.3 516.9,204.9 516.9,204.9 518.2,204.9 519.5,204.9 520.8,204.9 521,204.9 521.9,202.4 522.1,202.4 523.4,202.4 524.7,202.4 526,202.4 526.4,202.4 527.3,204.2 527.7,204.9 528.6,204.9 529.9,204.9 531.2,204.9 531.5,204.9 532.5,191.8 533.1,184.1 533.8,162.2 534.7,133.2 535.1,133.7 536.2,135.2 536.4,140.4 537.7,193.3 537.8,200.7 539,198.3 539.7,196.6 540.3,181.3 541.6,141.8 541.6,139.1 542.8,159.6 543.2,166.2 544.1,147.2 544.8,133.2 545.4,130.2 546.7,123.9 548,117.7 548,118.1 549.3,130 549.9,135.2 550.6,161 551.8,202.8 551.9,202.9 553.2,203.2 554.5,203.6 555.8,204 557.1,204.3 558.4,204.7 559.1,204.9 559.7,199.4 561,187.3 561.3,184.1 562.3,164.2 563.2,142.9 563.6,141.6 564.9,136.7 565.8,133.2 566.2,133.2 567.4,133.2 567.5,137 568.8,182.8 569,188.2 570.1,197.9 570.9,204.9 571.4,204.9 572.7,204.9 574,204.9 574.7,204.9 575.3,195.4 576,184.1 576.6,167.2 577.9,127.7 577.9,127.4 579.2,136.6 579.8,141 580.4,137.7 581.4,133.2 581.7,106.7 582.6,46.1 583,46.1 583.3,46.1" fill="none" stroke="#8fb0e8" stroke-width=".8" stroke-opacity=".8"/><polygon points="64.4,204.9 64.4,202 65.7,199.4 67,199.2 67,198.1 68.3,200.4 68.9,200.7 69.6,200.9 70.9,203.6 71.4,204.2 72.2,204.3 73.5,204.3 74.8,204.3 75.2,204.3 76.1,204.3 77.4,204.3 78.7,204.3 80,204.3 81.3,204.3 82.6,204.3 83.9,204.3 85.2,204.3 86,204.3 86.5,204.3 87.8,204.4 87.9,204.3 89.1,204.3 89.9,204.3 90.4,204.3 91.7,204.3 93,204.3 94.3,204.3 95.6,204.3 96.9,204.3 97.8,204.3 98.1,204.1 99.4,200.6 100.7,198.7 101.6,197.2 102,197.8 103.3,197.2 104.6,196.8 104.8,195.6 105.9,200.5 107,204.3 107.2,204.2 108.5,203.7 108.9,203.9 109.8,201 110.5,199.4 111.1,198.7 112.1,199 112.4,199.1 113.7,202.2 114,202.7 115,199.2 115.9,196.9 116.3,198 117.6,198.3 118.4,196.3 118.9,197 120.2,197.3 120.7,195.5 121.5,199.5 122.3,203.2 122.8,200.8 124.1,197.1 124.2,196.9 125.4,195.6 126.7,197.5 126.7,195.9 128,197.6 129.3,196.2 129.3,196.1 130.6,195.4 131.8,195.7 131.9,196.6 133.2,197.3 134.3,197.4 134.4,196.5 135.7,196.5 136.6,197.7 137,195.6 138.3,196.6 139.6,196.1 140.1,197.3 140.9,197.2 142,197.9 142.2,197 143.5,197.2 144.5,196.8 144.8,196.9 146.1,195.8 147.4,196.1 147.7,197.9 148.7,197.6 150,198.5 150.9,197.7 151.3,198.3 152.6,202.5 152.8,202.4 153.9,200.8 154.7,200 155.2,198.8 155.9,199.7 156.5,201.4 157.8,204.3 157.8,204.3 159.1,203.7 159.8,203.2 160.4,201.7 161,200.2 161.7,201.5 162.9,204 163,204 164.3,203.6 165.2,203.3 165.6,202.6 166.9,199.7 167.4,199 168.2,197.9 169.5,198 170.8,197.1 171.5,196.3 172,198.2 173.3,198 174.6,197.5 175.6,196.9 175.9,196.4 177.2,196 178.2,196.9 178.5,195.4 179.8,197.8 180.1,196.1 181.1,197.3 182,195.6 182.4,197.7 183.7,195.4 183.9,196 185,195.3 186.3,196.4 186.4,197.4 187.6,195.4 188.3,196.7 188.9,197.6 190.2,196.3 190.9,196.6 191.5,196.6 192.8,197.5 192.8,197.6 194.1,196.4 195.3,196.7 195.4,197.5 196.7,196.7 197.9,196 198,196 199.3,196.6 200.4,196.8 200.6,196.9 201.9,198.7 202.3,199.7 203.2,201.6 204.2,204.3 204.5,204.3 205.8,204.3 207.1,204.3 208.4,204.3 209.6,204.3 210.9,204.3 211.2,204.3 212.2,204.3 213.5,204.2 214.4,203.7 214.8,203.7 216.1,203.7 216.9,203.9 217.4,202.8 218.7,200 219.2,199.7 220,197.5 221.3,197.1 221.4,197.6 222.6,197.4 223.3,198.6 223.9,199.6 224.6,200.3 225.2,199 226.5,197.2 227.1,197.9 227.8,196.3 229.1,195.5 230.3,196 230.4,195.5 231.7,195.4 233,197.3 233.5,197.1 234.3,196.7 235.6,196.4 236.6,198.3 236.9,197.3 238.2,198.8 239.5,200.5 239.8,200.6 240.8,201.6 241.7,203.2 242.1,203.4 243.4,203.3 244.3,203.7 244.7,203.8 245.9,204.3 246.2,204.3 247.2,204.3 248.5,204.3 249.8,203.9 250.9,203.8 251.1,203.5 252.4,201 253.7,198.2 253.8,198.4 255,197.4 256.3,197.3 257,196.9 257.6,198.6 258.9,201.4 258.9,201.2 260.2,198.7 261.4,196.5 261.5,195.7 262.8,197.1 263,197.6 264.1,201.1 264.6,203.6 265.4,203.9 266.7,204.5 267.8,204.3 268,204.3 269.3,204.3 270.6,204.3 271.6,204.3 271.9,204.3 273.2,204.3 273.2,204.3 274.5,204.3 275.4,204.3 275.8,204.3 277.1,204.3 278.4,204.3 279.7,204.3 281,204.3 281.8,204.3 282.3,204.3 283.5,204.3 283.7,204.3 284.8,204.3 285.6,204.3 286.1,204.3 287.4,204.3 288.7,204.3 289.1,204.3 290,204.3 290.6,204 291.3,204.2 292.2,204.3 292.6,203.1 293.8,199.6 293.9,200 295.2,199.2 295.7,200 296.5,200.9 297.6,201.5 297.8,201.2 299.1,198.1 299.5,198.1 300.4,196.4 301.7,196.3 302.1,195.7 303,196.9 304.3,195.9 305.3,195.8 305.6,196.9 306.9,196.2 307.2,196 308.2,195.3 309.5,195.5 309.7,195.9 310.8,197.5 311.6,196.3 312.1,196.1 313.4,197.6 313.5,196.7 314.7,195.6 315.4,195.6 316,195.5 317.3,198.7 317.3,197.8 318.6,204.3 318.6,204.3 319.8,204.3 321.1,204.3 322.4,204.3 323.7,204.3 325,204.3 326.3,204.3 327.6,204.3 328.8,204.3 328.9,204.3 330.2,204.3 331.5,204.3 332.8,204.3 334.1,204.3 335.4,204.3 336.7,204.3 338,204.3 339.3,204.3 340.6,204.3 341.9,204.3 343.2,204.3 344.5,204.3 345.8,204.3 347.1,204.3 348.4,204.3 349.7,204.3 351,204.3 352.3,204.3 353.6,204.3 354.2,204.3 354.9,204.3 356.2,204.3 357.4,204.3 357.4,204.3 358.7,204.3 360,204.3 361.3,204.3 362.6,204.3 363.1,204.3 363.9,200.5 365,197 365.2,197.9 366.5,202.4 366.9,204.3 367.8,204.3 369.1,204.3 370.1,204.3 370.4,204.3 371.7,204.3 373,204.3 373.3,204.3 374.3,204.3 375.6,204.3 376.9,204.3 378.2,204.3 379.5,204.3 380.8,204.3 382.1,204.3 383.4,204.3 384.7,204.3 386,204.3 387.3,204.3 387.6,204.3 388.6,204.3 389.1,204.3 389.9,204.3 391.2,204.3 392.5,204.3 393.8,204.3 395,204.3 396.3,204.3 397.1,204.3 397.6,204.3 398.7,204.3 398.9,204.3 400.2,204.3 401.5,204.3 402.5,204.3 402.8,204.3 404.1,204.3 404.4,204.3 405.4,204.3 406.7,204.3 407.6,204.3 408,204.3 409.3,204.3 409.5,204.3 410.6,204.3 411.9,204.3 413.2,204.3 414.5,204.3 415.8,204.3 417.1,204.3 418.4,204.3 419.7,204.3 421,204.3 422.3,204.3 423.6,204.3 424.9,204.3 426.2,204.3 427.5,204.3 428.8,204.3 428.9,204.3 430.1,203.4 430.4,203 431.3,201.2 432.6,197.4 432.7,197.4 433.9,198.1 434.6,198.5 435.2,200 436.2,201.2 436.5,200.9 437.8,200.1 437.8,199.9 439.1,201.2 440,201 440.4,201.6 441.7,202.2 441.9,202.1 443,203.2 444.3,204.3 444.4,204.3 445.6,204.3 446.9,204.3 447,204.3 448.2,204.3 449.5,204.3 450.8,204.3 452.1,204.3 453.4,204.3 454.7,204.3 456,204.3 457.3,204.3 458.6,204.3 459.9,204.3 461.2,204.3 462.5,204.3 463.8,204.3 465.1,204.3 466.4,204.3 467.7,204.3 468.9,204.3 470.2,204.3 471.5,204.3 472.8,204.3 474.1,204.3 475.4,204.3 476.7,204.3 478,204.3 479.3,204.3 480.6,204.3 481.9,204.3 483.2,204.3 484.5,204.3 485.8,204.3 487.1,204.3 488.4,204.3 489.7,204.3 491,204.3 492.3,204.3 493.6,204.3 494.9,204.3 495.6,204.3 496.2,204.3 497.5,204.3 497.8,204.3 498.8,204.3 499.7,204.3 500.1,204.3 501.4,204.3 502.7,204.3 504,204.3 505.3,204.3 506.5,204.3 507.8,204.3 509.1,204.3 510.4,204.3 511.7,204.3 513,204.3 513,204.3 514.3,204.3 515,204.3 515.6,204.3 516.9,204.3 516.9,204.3 518.2,204.3 519.5,204.3 520.8,204.3 521,204.3 521.9,204.3 522.1,204.3 523.4,204.3 524.7,204.3 526,204.3 526.4,204.3 527.3,204.3 527.7,204.3 528.6,204.3 529.9,204.3 531.2,204.3 531.5,204.3 532.5,203.5 533.1,202.4 533.8,200.5 534.7,197.3 535.1,197.1 536.2,197.5 536.4,196.7 537.7,203.8 537.8,204.5 539,204.2 539.7,203.9 540.3,201.8 541.6,197.3 541.6,197.5 542.8,198.9 543.2,200 544.1,198.1 544.8,196.4 545.4,195.5 546.7,195.3 548,195.5 548,197.5 549.3,197 549.9,196.9 550.6,200.2 551.8,204.3 551.9,204.3 553.2,204.3 554.5,204.3 555.8,204.3 557.1,204.3 558.4,204.3 559.1,204.3 559.7,204.2 561,203.2 561.3,202.3 562.3,200 563.2,197.3 563.6,197.6 564.9,195.8 565.8,196.4 566.2,195.6 567.4,195.5 567.5,196.4 568.8,201.9 569,203.1 570.1,204.2 570.9,204.3 571.4,204.3 572.7,204.3 574,204.3 574.7,204.3 575.3,203.8 576,202.6 576.6,200.7 577.9,196.1 577.9,196.6 579.2,197.7 579.8,196.6 580.4,196.9 581.4,195.4 581.7,196.5 582.6,195.5 583,197.1 583.3,197.3 583.3,204.9" fill="#8e3a34" fill-opacity="0.92"/><polyline points="64.4,202 65.7,199.4 67,199.2 67,198.1 68.3,200.4 68.9,200.7 69.6,200.9 70.9,203.6 71.4,204.2 72.2,204.3 73.5,204.3 74.8,204.3 75.2,204.3 76.1,204.3 77.4,204.3 78.7,204.3 80,204.3 81.3,204.3 82.6,204.3 83.9,204.3 85.2,204.3 86,204.3 86.5,204.3 87.8,204.4 87.9,204.3 89.1,204.3 89.9,204.3 90.4,204.3 91.7,204.3 93,204.3 94.3,204.3 95.6,204.3 96.9,204.3 97.8,204.3 98.1,204.1 99.4,200.6 100.7,198.7 101.6,197.2 102,197.8 103.3,197.2 104.6,196.8 104.8,195.6 105.9,200.5 107,204.3 107.2,204.2 108.5,203.7 108.9,203.9 109.8,201 110.5,199.4 111.1,198.7 112.1,199 112.4,199.1 113.7,202.2 114,202.7 115,199.2 115.9,196.9 116.3,198 117.6,198.3 118.4,196.3 118.9,197 120.2,197.3 120.7,195.5 121.5,199.5 122.3,203.2 122.8,200.8 124.1,197.1 124.2,196.9 125.4,195.6 126.7,197.5 126.7,195.9 128,197.6 129.3,196.2 129.3,196.1 130.6,195.4 131.8,195.7 131.9,196.6 133.2,197.3 134.3,197.4 134.4,196.5 135.7,196.5 136.6,197.7 137,195.6 138.3,196.6 139.6,196.1 140.1,197.3 140.9,197.2 142,197.9 142.2,197 143.5,197.2 144.5,196.8 144.8,196.9 146.1,195.8 147.4,196.1 147.7,197.9 148.7,197.6 150,198.5 150.9,197.7 151.3,198.3 152.6,202.5 152.8,202.4 153.9,200.8 154.7,200 155.2,198.8 155.9,199.7 156.5,201.4 157.8,204.3 157.8,204.3 159.1,203.7 159.8,203.2 160.4,201.7 161,200.2 161.7,201.5 162.9,204 163,204 164.3,203.6 165.2,203.3 165.6,202.6 166.9,199.7 167.4,199 168.2,197.9 169.5,198 170.8,197.1 171.5,196.3 172,198.2 173.3,198 174.6,197.5 175.6,196.9 175.9,196.4 177.2,196 178.2,196.9 178.5,195.4 179.8,197.8 180.1,196.1 181.1,197.3 182,195.6 182.4,197.7 183.7,195.4 183.9,196 185,195.3 186.3,196.4 186.4,197.4 187.6,195.4 188.3,196.7 188.9,197.6 190.2,196.3 190.9,196.6 191.5,196.6 192.8,197.5 192.8,197.6 194.1,196.4 195.3,196.7 195.4,197.5 196.7,196.7 197.9,196 198,196 199.3,196.6 200.4,196.8 200.6,196.9 201.9,198.7 202.3,199.7 203.2,201.6 204.2,204.3 204.5,204.3 205.8,204.3 207.1,204.3 208.4,204.3 209.6,204.3 210.9,204.3 211.2,204.3 212.2,204.3 213.5,204.2 214.4,203.7 214.8,203.7 216.1,203.7 216.9,203.9 217.4,202.8 218.7,200 219.2,199.7 220,197.5 221.3,197.1 221.4,197.6 222.6,197.4 223.3,198.6 223.9,199.6 224.6,200.3 225.2,199 226.5,197.2 227.1,197.9 227.8,196.3 229.1,195.5 230.3,196 230.4,195.5 231.7,195.4 233,197.3 233.5,197.1 234.3,196.7 235.6,196.4 236.6,198.3 236.9,197.3 238.2,198.8 239.5,200.5 239.8,200.6 240.8,201.6 241.7,203.2 242.1,203.4 243.4,203.3 244.3,203.7 244.7,203.8 245.9,204.3 246.2,204.3 247.2,204.3 248.5,204.3 249.8,203.9 250.9,203.8 251.1,203.5 252.4,201 253.7,198.2 253.8,198.4 255,197.4 256.3,197.3 257,196.9 257.6,198.6 258.9,201.4 258.9,201.2 260.2,198.7 261.4,196.5 261.5,195.7 262.8,197.1 263,197.6 264.1,201.1 264.6,203.6 265.4,203.9 266.7,204.5 267.8,204.3 268,204.3 269.3,204.3 270.6,204.3 271.6,204.3 271.9,204.3 273.2,204.3 273.2,204.3 274.5,204.3 275.4,204.3 275.8,204.3 277.1,204.3 278.4,204.3 279.7,204.3 281,204.3 281.8,204.3 282.3,204.3 283.5,204.3 283.7,204.3 284.8,204.3 285.6,204.3 286.1,204.3 287.4,204.3 288.7,204.3 289.1,204.3 290,204.3 290.6,204 291.3,204.2 292.2,204.3 292.6,203.1 293.8,199.6 293.9,200 295.2,199.2 295.7,200 296.5,200.9 297.6,201.5 297.8,201.2 299.1,198.1 299.5,198.1 300.4,196.4 301.7,196.3 302.1,195.7 303,196.9 304.3,195.9 305.3,195.8 305.6,196.9 306.9,196.2 307.2,196 308.2,195.3 309.5,195.5 309.7,195.9 310.8,197.5 311.6,196.3 312.1,196.1 313.4,197.6 313.5,196.7 314.7,195.6 315.4,195.6 316,195.5 317.3,198.7 317.3,197.8 318.6,204.3 318.6,204.3 319.8,204.3 321.1,204.3 322.4,204.3 323.7,204.3 325,204.3 326.3,204.3 327.6,204.3 328.8,204.3 328.9,204.3 330.2,204.3 331.5,204.3 332.8,204.3 334.1,204.3 335.4,204.3 336.7,204.3 338,204.3 339.3,204.3 340.6,204.3 341.9,204.3 343.2,204.3 344.5,204.3 345.8,204.3 347.1,204.3 348.4,204.3 349.7,204.3 351,204.3 352.3,204.3 353.6,204.3 354.2,204.3 354.9,204.3 356.2,204.3 357.4,204.3 357.4,204.3 358.7,204.3 360,204.3 361.3,204.3 362.6,204.3 363.1,204.3 363.9,200.5 365,197 365.2,197.9 366.5,202.4 366.9,204.3 367.8,204.3 369.1,204.3 370.1,204.3 370.4,204.3 371.7,204.3 373,204.3 373.3,204.3 374.3,204.3 375.6,204.3 376.9,204.3 378.2,204.3 379.5,204.3 380.8,204.3 382.1,204.3 383.4,204.3 384.7,204.3 386,204.3 387.3,204.3 387.6,204.3 388.6,204.3 389.1,204.3 389.9,204.3 391.2,204.3 392.5,204.3 393.8,204.3 395,204.3 396.3,204.3 397.1,204.3 397.6,204.3 398.7,204.3 398.9,204.3 400.2,204.3 401.5,204.3 402.5,204.3 402.8,204.3 404.1,204.3 404.4,204.3 405.4,204.3 406.7,204.3 407.6,204.3 408,204.3 409.3,204.3 409.5,204.3 410.6,204.3 411.9,204.3 413.2,204.3 414.5,204.3 415.8,204.3 417.1,204.3 418.4,204.3 419.7,204.3 421,204.3 422.3,204.3 423.6,204.3 424.9,204.3 426.2,204.3 427.5,204.3 428.8,204.3 428.9,204.3 430.1,203.4 430.4,203 431.3,201.2 432.6,197.4 432.7,197.4 433.9,198.1 434.6,198.5 435.2,200 436.2,201.2 436.5,200.9 437.8,200.1 437.8,199.9 439.1,201.2 440,201 440.4,201.6 441.7,202.2 441.9,202.1 443,203.2 444.3,204.3 444.4,204.3 445.6,204.3 446.9,204.3 447,204.3 448.2,204.3 449.5,204.3 450.8,204.3 452.1,204.3 453.4,204.3 454.7,204.3 456,204.3 457.3,204.3 458.6,204.3 459.9,204.3 461.2,204.3 462.5,204.3 463.8,204.3 465.1,204.3 466.4,204.3 467.7,204.3 468.9,204.3 470.2,204.3 471.5,204.3 472.8,204.3 474.1,204.3 475.4,204.3 476.7,204.3 478,204.3 479.3,204.3 480.6,204.3 481.9,204.3 483.2,204.3 484.5,204.3 485.8,204.3 487.1,204.3 488.4,204.3 489.7,204.3 491,204.3 492.3,204.3 493.6,204.3 494.9,204.3 495.6,204.3 496.2,204.3 497.5,204.3 497.8,204.3 498.8,204.3 499.7,204.3 500.1,204.3 501.4,204.3 502.7,204.3 504,204.3 505.3,204.3 506.5,204.3 507.8,204.3 509.1,204.3 510.4,204.3 511.7,204.3 513,204.3 513,204.3 514.3,204.3 515,204.3 515.6,204.3 516.9,204.3 516.9,204.3 518.2,204.3 519.5,204.3 520.8,204.3 521,204.3 521.9,204.3 522.1,204.3 523.4,204.3 524.7,204.3 526,204.3 526.4,204.3 527.3,204.3 527.7,204.3 528.6,204.3 529.9,204.3 531.2,204.3 531.5,204.3 532.5,203.5 533.1,202.4 533.8,200.5 534.7,197.3 535.1,197.1 536.2,197.5 536.4,196.7 537.7,203.8 537.8,204.5 539,204.2 539.7,203.9 540.3,201.8 541.6,197.3 541.6,197.5 542.8,198.9 543.2,200 544.1,198.1 544.8,196.4 545.4,195.5 546.7,195.3 548,195.5 548,197.5 549.3,197 549.9,196.9 550.6,200.2 551.8,204.3 551.9,204.3 553.2,204.3 554.5,204.3 555.8,204.3 557.1,204.3 558.4,204.3 559.1,204.3 559.7,204.2 561,203.2 561.3,202.3 562.3,200 563.2,197.3 563.6,197.6 564.9,195.8 565.8,196.4 566.2,195.6 567.4,195.5 567.5,196.4 568.8,201.9 569,203.1 570.1,204.2 570.9,204.3 571.4,204.3 572.7,204.3 574,204.3 574.7,204.3 575.3,203.8 576,202.6 576.6,200.7 577.9,196.1 577.9,196.6 579.2,197.7 579.8,196.6 580.4,196.9 581.4,195.4 581.7,196.5 582.6,195.5 583,197.1 583.3,197.3" fill="none" stroke="#7d46f2" stroke-width="1" stroke-linejoin="round"/><polyline points="64.4,175.7 65.7,160.9 67,146.6 67,147 68.3,158.4 68.9,163.2 69.6,173.5 70.9,191.6 71.4,198.7 72.2,199.7 73.5,201.5 74.8,203.3 75.2,203.9 76.1,203.9 77.4,204.1 78.7,204.2 80,204.3 81.3,204.4 82.6,204.6 83.9,204.7 85.2,204.8 86,204.9 86.5,203.7 87.8,200.2 87.9,199.7 89.1,202.8 89.9,204.9 90.4,204.9 91.7,204.9 93,204.9 94.3,204.9 95.6,204.9 96.9,204.9 97.8,204.9 98.1,197.3 99.4,168.9 100.7,140.6 101.6,121.6 102,122.2 103.3,123.9 104.6,125.6 104.8,125.8 105.9,163.1 107,198.7 107.2,198.2 108.5,195.4 108.9,194.5 109.8,170.9 110.5,152.8 111.1,151.2 112.1,148.7 112.4,154.8 113.7,180.3 114,186.2 115,158.8 115.9,134.1 116.3,134.4 117.6,135.5 118.4,136.2 118.9,133.3 120.2,124.8 120.7,121.6 121.5,156.7 122.3,190.3 122.8,171.6 124.1,124.9 124.2,121.6 125.4,120.6 126.7,119.5 126.7,119.5 128,124.7 129.3,129.9 129.3,129.9 130.6,125.6 131.8,121.6 131.9,120.8 133.2,104.9 134.3,90.4 134.4,92.4 135.7,115.5 136.6,129.9 137,124.2 138.3,108.7 139.6,93.3 140.1,88.3 140.9,107.5 142,129.9 142.2,129.5 143.5,127.4 144.5,125.8 144.8,126.6 146.1,130 147.4,133.4 147.7,134.1 148.7,136.8 150,140.2 150.9,142.4 151.3,152.2 152.6,180.5 152.8,184.1 153.9,165.5 154.7,152.8 155.2,153.7 155.9,154.9 156.5,169.4 157.8,203.4 157.8,204.9 159.1,194.1 159.8,188.2 160.4,174.9 161,161.2 161.7,173.3 162.9,196.6 163,196.4 164.3,191.6 165.2,188.2 165.6,180.9 166.9,157.8 167.4,148.7 168.2,146.3 169.5,142.4 170.8,138.5 171.5,136.2 172,134.8 173.3,131.5 174.6,128.3 175.6,125.8 175.9,121.6 177.2,103.5 178.2,90.4 178.5,98 179.8,126.4 180.1,132 181.1,117.3 182,104.9 182.4,110.6 183.7,127.6 183.9,129.9 185,119 186.3,106.2 186.4,104.9 187.6,119 188.3,127.8 188.9,123.7 190.2,114.2 190.9,109.1 191.5,115.7 192.8,129.9 192.8,129.9 194.1,122.5 195.3,115.4 195.4,115.6 196.7,120.9 197.9,125.8 198,125.4 199.3,120 200.4,115.4 200.6,118.3 201.9,143.8 202.3,152.8 203.2,174.8 204.2,202.8 204.5,202.9 205.8,203.3 207.1,203.7 208.4,204 209.6,204.4 210.9,204.8 211.2,204.9 212.2,201.6 213.5,197.3 214.4,194.5 214.8,194.5 216.1,194.5 216.9,194.5 217.4,184.9 218.7,159.4 219.2,150.8 220,146 221.3,138.7 221.4,138.3 222.6,140.9 223.3,142.4 223.9,152.5 224.6,163.2 225.2,154.9 226.5,137.9 227.1,129.9 227.8,129 229.1,127.3 230.3,125.8 230.4,125.8 231.7,126.7 233,127.5 233.5,127.8 234.3,131.6 235.6,137.6 236.6,142.4 236.9,144.3 238.2,154.5 239.5,164.7 239.8,167.4 240.8,178.8 241.7,190.3 242.1,190.6 243.4,191.7 244.3,192.4 244.7,195 245.9,203.5 246.2,204.9 247.2,202.5 248.5,199.7 249.8,196.9 250.9,194.5 251.1,191.3 252.4,170.5 253.7,149.7 253.8,148.7 255,144.6 256.3,140.4 257,138.3 257.6,149.5 258.9,171.6 258.9,171 260.2,148.7 261.4,127.8 261.5,127.8 262.8,127.8 263,127.8 264.1,172.2 264.6,192.4 265.4,195.5 266.7,200.6 267.8,204.9 268,204.9 269.3,204.9 270.6,204.9 271.6,204.9 271.9,204.1 273.2,200.7 273.2,200.7 274.5,203.2 275.4,204.9 275.8,204.9 277.1,204.9 278.4,204.9 279.7,204.9 281,204.9 281.8,204.9 282.3,204.1 283.5,202 283.7,201.8 284.8,203.7 285.6,204.9 286.1,204.9 287.4,204.9 288.7,204.9 289.1,204.9 290,199.8 290.6,196.6 291.3,198.3 292.2,200.7 292.6,190.1 293.8,157 293.9,157.1 295.2,158.5 295.7,159.1 296.5,166.8 297.6,177.8 297.8,174.3 299.1,147.4 299.5,138.3 300.4,134 301.7,127.7 302.1,125.8 303,121 304.3,114.2 305.3,109.1 305.6,112.6 306.9,126.8 307.2,129.9 308.2,122.5 309.5,112.9 309.7,111.2 310.8,119.3 311.6,125.8 312.1,121.3 313.4,108.6 313.5,107 314.7,109.5 315.4,111.2 316,119.9 317.3,141.1 317.3,142.4 318.6,200.2 318.6,202.8 319.8,203.1 321.1,203.3 322.4,203.6 323.7,203.9 325,204.1 326.3,204.4 327.6,204.7 328.8,204.9 328.9,204.9 330.2,204.9 331.5,204.9 332.8,204.9 334.1,204.9 335.4,204.9 336.7,204.9 338,204.9 339.3,204.9 340.6,204.9 341.9,204.9 343.2,204.9 344.5,204.9 345.8,204.9 347.1,204.9 348.4,204.9 349.7,204.9 351,204.9 352.3,204.9 353.6,204.9 354.2,204.9 354.9,204.2 356.2,203 357.4,201.8 357.4,201.8 358.7,201.8 360,201.8 361.3,201.8 362.6,201.8 363.1,201.8 363.9,166.3 365,121.6 365.2,131.3 366.5,185.1 366.9,200.7 367.8,201 369.1,201.5 370.1,201.8 370.4,202.1 371.7,203.4 373,204.7 373.3,204.9 374.3,204.9 375.6,204.9 376.9,204.9 378.2,204.9 379.5,204.9 380.8,204.9 382.1,204.9 383.4,204.9 384.7,204.9 386,204.9 387.3,204.9 387.6,204.9 388.6,203.6 389.1,202.8 389.9,202.8 391.2,202.8 392.5,202.8 393.8,202.8 395,202.8 396.3,202.8 397.1,202.8 397.6,203.5 398.7,204.9 398.9,204.9 400.2,204.9 401.5,204.9 402.5,204.9 402.8,204.2 404.1,201.3 404.4,200.7 405.4,200.7 406.7,200.7 407.6,200.7 408,201.7 409.3,204.5 409.5,204.9 410.6,204.9 411.9,204.9 413.2,204.9 414.5,204.9 415.8,204.9 417.1,204.9 418.4,204.9 419.7,204.9 421,204.9 422.3,204.9 423.6,204.9 424.9,204.9 426.2,204.9 427.5,204.9 428.8,204.9 428.9,204.9 430.1,192.3 430.4,188.2 431.3,169.6 432.6,142.9 432.7,142.4 433.9,146.6 434.6,148.7 435.2,157.4 436.2,169.5 436.5,167.1 437.8,159.1 437.8,159.5 439.1,166.8 440,171.6 440.4,173.1 441.7,177.3 441.9,177.8 443,189 444.3,201.8 444.4,202.8 445.6,203.8 446.9,204.9 447,204.9 448.2,204.9 449.5,204.9 450.8,204.9 452.1,204.9 453.4,204.9 454.7,204.9 456,204.9 457.3,204.9 458.6,204.9 459.9,204.9 461.2,204.9 462.5,204.9 463.8,204.9 465.1,204.9 466.4,204.9 467.7,204.9 468.9,204.9 470.2,204.9 471.5,204.9 472.8,204.9 474.1,204.9 475.4,204.9 476.7,204.9 478,204.9 479.3,204.9 480.6,204.9 481.9,204.9 483.2,204.9 484.5,204.9 485.8,204.9 487.1,204.9 488.4,204.9 489.7,204.9 491,204.9 492.3,204.9 493.6,204.9 494.9,204.9 495.6,204.9 496.2,204.1 497.5,202.2 497.8,201.8 498.8,203.4 499.7,204.9 500.1,204.9 501.4,204.9 502.7,204.9 504,204.9 505.3,204.9 506.5,204.9 507.8,204.9 509.1,204.9 510.4,204.9 511.7,204.9 513,204.9 513,204.9 514.3,203.2 515,202.4 515.6,203.3 516.9,204.9 516.9,204.9 518.2,204.9 519.5,204.9 520.8,204.9 521,204.9 521.9,202.4 522.1,202.4 523.4,202.4 524.7,202.4 526,202.4 526.4,202.4 527.3,204.2 527.7,204.9 528.6,204.9 529.9,204.9 531.2,204.9 531.5,204.9 532.5,191.8 533.1,184.1 533.8,159 534.7,127.8 535.1,128.4 536.2,129.9 536.4,135.5 537.7,193.3 537.8,200.7 539,198.3 539.7,196.6 540.3,179.5 541.6,137.1 541.6,134.1 542.8,156.2 543.2,163.2 544.1,142.9 544.8,127.8 545.4,124.6 546.7,117.8 548,111.2 548,111.6 549.3,124.3 549.9,129.9 550.6,157.6 551.8,202.8 551.9,202.9 553.2,203.2 554.5,203.6 555.8,204 557.1,204.3 558.4,204.7 559.1,204.9 559.7,199.4 561,187.3 561.3,184.1 562.3,161.1 563.2,138.3 563.6,136.8 564.9,131.5 565.8,127.8 566.2,127.8 567.4,127.8 567.5,131.8 568.8,181.1 569,188.2 570.1,197.9 570.9,204.9 571.4,204.9 572.7,204.9 574,204.9 574.7,204.9 575.3,195.4 576,184.1 576.6,164.3 577.9,121.8 577.9,121.6 579.2,131.5 579.8,136.2 580.4,132.6 581.4,127.8 581.7,99.3 582.6,34.1 583,34.1 583.3,34.1" fill="none" stroke="#5fe3f5" stroke-width="1"/>
<path d="M122.6 27V205.8M247.4 27V205.8M371.7 27V205.8M496.5 27V205.8M64.4 38.3H583M64.4 59.1H583M64.4 80H583M64.4 100.8H583M64.4 121.6H583M64.4 142.4H583M64.4 163.2H583M64.4 184.1H583M64.4 204.9H583" stroke="#62728a" stroke-opacity=".58" stroke-width="1" fill="none"/></g>
<g font-family='"DejaVu Sans", "Liberation Sans", sans-serif' font-size="10.67" fill="#ffffff">
<text x="58.6" y="41.3" text-anchor="end">0.800/s</text>
<text x="58.6" y="62.1" text-anchor="end">0.700/s</text>
<text x="58.6" y="83" text-anchor="end">0.600/s</text>
<text x="58.6" y="103.8" text-anchor="end">0.500/s</text>
<text x="58.6" y="124.6" text-anchor="end">0.400/s</text>
<text x="58.6" y="145.4" text-anchor="end">0.300/s</text>
<text x="58.6" y="166.2" text-anchor="end">0.200/s</text>
<text x="58.6" y="187.1" text-anchor="end">0.100/s</text>
<text x="58.6" y="207.9" text-anchor="end">0</text>
<text x="122.6" y="217.1" text-anchor="middle">Mon 18:00</text>
<text x="247.4" y="217.1" text-anchor="middle">Tue 00:00</text>
<text x="371.7" y="217.1" text-anchor="middle">Tue 06:00</text>
<text x="496.5" y="217.1" text-anchor="middle">Tue 12:00</text>
</g></svg></div>
</body></html>
